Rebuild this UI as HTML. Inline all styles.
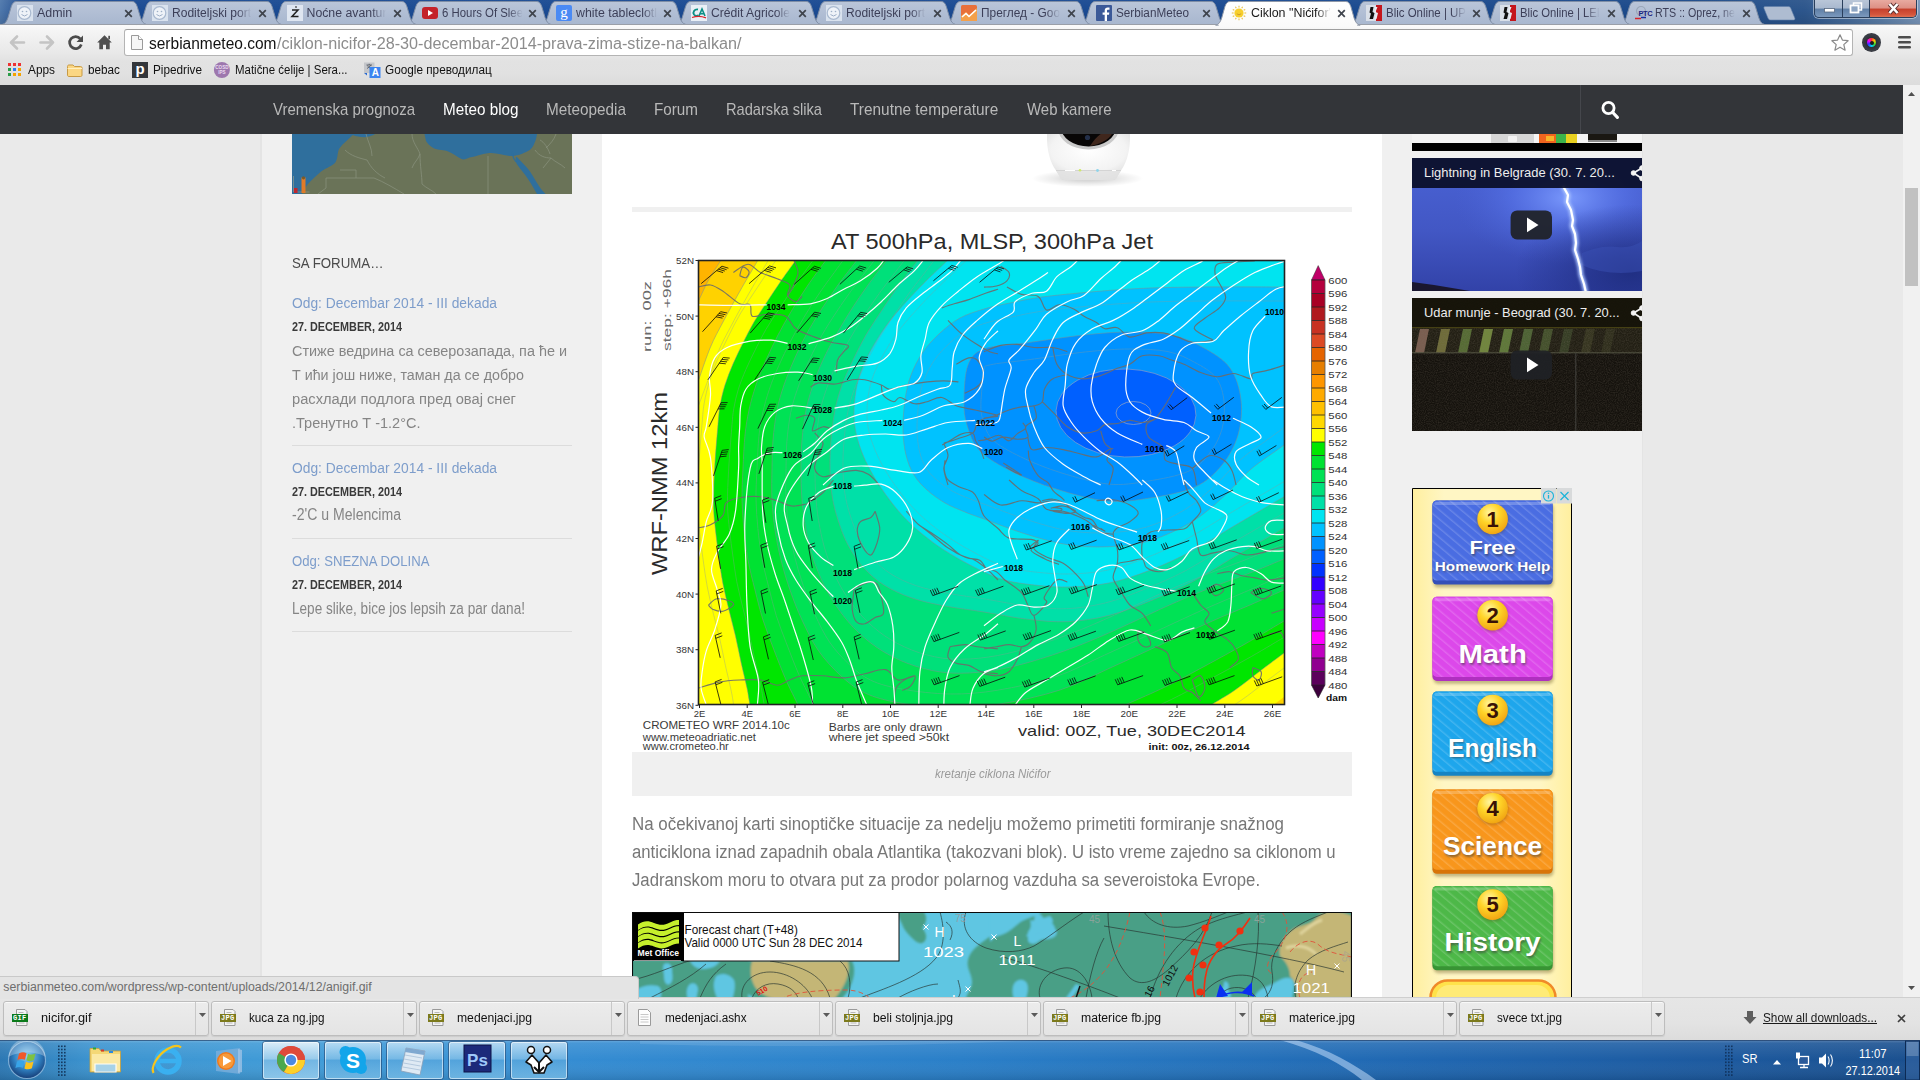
<!DOCTYPE html>
<html lang="sr"><head><meta charset="utf-8"><title>Ciklon "Nićifor" 28-30. decembar 2014 - prava zima stiže na Balkan</title><style>*{box-sizing:border-box}html,body{margin:0;padding:0}body{width:1920px;height:1080px;overflow:hidden;position:relative;background:#fff;font-family:"Liberation Sans", sans-serif;}div,svg{position:absolute}.t{position:absolute;white-space:nowrap;line-height:1;transform-origin:0 0;display:block}</style></head>
<body>
<div style="left:0px;top:85px;width:1903px;height:912px;background:#eaeaea;"></div>
<div style="left:260px;top:85px;width:2px;height:912px;background:#e4e4e4;"></div>
<div style="left:262px;top:85px;width:340px;height:912px;background:#f0f0f0;"></div>
<div style="left:602px;top:85px;width:780px;height:912px;background:#ffffff;"></div>
<div style="left:1382px;top:85px;width:260px;height:912px;background:#f0f0f0;"></div>
<div style="left:1642px;top:85px;width:261px;height:912px;background:#e9e9e9;"></div>
<div style="left:1642px;top:85px;width:1px;height:912px;background:#e4e4e4;"></div>
<div style="left:1903px;top:85px;width:17px;height:912px;background:#f1f1f1;"></div>
<div style="left:1905px;top:188px;width:13px;height:98px;background:#c1c1c1;"></div>
<svg style="left:1903px;top:85px" width="17" height="912" viewBox="0 0 17 912"><path d="M5 11l3.500-4 3.500 4z" fill="#505050"/><path d="M5 901l3.500 4 3.500-4z" fill="#505050"/></svg>
<svg style="left:292px;top:134px" width="280" height="60" viewBox="292 134 280 60"><rect x="292" y="134" width="280" height="60" fill="#6a7358"/><path d="M292 134h62c-5 5-11 9-15 15-2 5-1 10-4 14-4 4-10 5-14.500 9-4.500 4-9 8-12.500 12-2.500 3-4.500 6-6 10h-10z" fill="#2f6f9d"/><path d="M351 134h24c-3 2.500-9 3.500-14 3-4-.5-8-1.500-10-3z" fill="#2f6f9d"/><path d="M424.500 134h112.500c-.5 3-1 6-2.500 9-1.500 4-3.500 6.500-6.500 8-5 2.500-10 5-17.500 5-7-.5-14-3.500-21-3-7 .5-13 3.500-20 4.500-3 1.500-5.500 2.500-8 1.500-5-2.500-9-6-14.500-8-5-1.500-10-.5-14.500-3.500-3-2-5-4-6.500-6.500-.5-2.500-1-4.500-1.500-7z" fill="#2f6f9d"/><path d="M517 157c4 5 9 9 13 14.500 4 6 7 12 11 17.500l4.500 5h-8.500c-3-5-5.500-10-9-15-3.500-5.500-8-10-11.500-15.500-1-2.500-1-5-.5-6.500z" fill="#2f6f9d"/><path d="M512 152l1.500 6 2.500 4" fill="none" stroke="#2f6f9d" stroke-width="1.200"/><circle cx="319" cy="170" r=".9" fill="#2f6f9d"/><circle cx="323" cy="168.500" r=".8" fill="#2f6f9d"/><circle cx="327" cy="167" r=".8" fill="#2f6f9d"/><circle cx="315.500" cy="172" r=".8" fill="#2f6f9d"/><path d="M345 150c6 6 14 8 22 10 4 8 10 14 18 18M366 134c2 8 6 14 6 22M412 134c0 8 6 14 8 20 0 12 2 22 2 30 4 4 10 6 14 10M340 170h16v8h18M356 178l-30 0 0 10-8 6M374 178c10 4 20 10 30 16M488 156v38M420 154c-2 6-6 8-8 14M535 150c4 6 10 8 16 8 4 4 10 6 14 10M540 140c4 2 8 8 10 14M551 158l-8 10M556 134c-2 6-6 10-10 14" fill="none" stroke="#8b9480" stroke-width=".7"/><path d="M293.500 176v16h16" fill="none" stroke="#9aa08c" stroke-width=".6"/><rect x="294" y="188" width="3.500" height="5" fill="#c0272d"/><rect x="301.500" y="177.500" width="4" height="15.500" fill="#e07b28"/><circle cx="303.500" cy="177.800" r="1.600" fill="#7a5a28"/></svg>
<span class="t" style='left:292px;top:255.30px;font-size:15.3px;color:#4a4a4a;transform:scaleX(0.8682);'>SA FORUMA…</span>
<span class="t" style='left:292px;top:295.12px;font-size:15.5px;color:#7d9dcb;transform:scaleX(0.8911);'>Odg: Decembar 2014 - III dekada</span>
<span class="t" style='left:292px;top:320.88px;font-size:12.5px;color:#3a3a3a;font-weight:700;transform:scaleX(0.8652);'>27. DECEMBER, 2014</span>
<span class="t" style='left:292px;top:343.32px;font-size:15.5px;color:#858585;transform:scaleX(0.9299);'>Стиже ведрина са северозапада, па ће и</span>
<span class="t" style='left:292px;top:367.32px;font-size:15.5px;color:#858585;transform:scaleX(0.9215);'>Т ићи још ниже, таман да се добро</span>
<span class="t" style='left:292px;top:391.32px;font-size:15.5px;color:#858585;transform:scaleX(0.9471);'>расхлади подлога пред овај снег</span>
<span class="t" style='left:292px;top:415.32px;font-size:15.5px;color:#858585;transform:scaleX(0.9364);'>.Тренутно Т -1.2°C.</span>
<div style="left:292px;top:445px;width:280px;height:1px;background:#dcdcdc;"></div>
<span class="t" style='left:292px;top:460.12px;font-size:15.5px;color:#7d9dcb;transform:scaleX(0.8911);'>Odg: Decembar 2014 - III dekada</span>
<span class="t" style='left:292px;top:485.68px;font-size:12.5px;color:#3a3a3a;font-weight:700;transform:scaleX(0.8652);'>27. DECEMBER, 2014</span>
<span class="t" style='left:292px;top:507.27px;font-size:15.8px;color:#858585;transform:scaleX(0.8904);'>-2'C u Melencima</span>
<div style="left:292px;top:538px;width:280px;height:1px;background:#dcdcdc;"></div>
<span class="t" style='left:292px;top:553.33px;font-size:15.5px;color:#7d9dcb;transform:scaleX(0.8490);'>Odg: SNEZNA DOLINA</span>
<span class="t" style='left:292px;top:578.67px;font-size:12.5px;color:#3a3a3a;font-weight:700;transform:scaleX(0.8652);'>27. DECEMBER, 2014</span>
<span class="t" style='left:292px;top:600.87px;font-size:15.8px;color:#858585;transform:scaleX(0.8586);'>Lepe slike, bice jos lepsih za par dana!</span>
<div style="left:292px;top:631px;width:280px;height:1px;background:#dcdcdc;"></div>
<svg style="left:1020px;top:134px" width="140" height="60" viewBox="1020 134 140 60"><defs><radialGradient id="cs" cx=".5" cy=".5" r=".5"><stop offset="0" stop-color="#000" stop-opacity=".22"/><stop offset=".6" stop-color="#000" stop-opacity=".08"/><stop offset="1" stop-color="#000" stop-opacity="0"/></radialGradient><radialGradient id="cb" cx=".5" cy=".35" r=".7"><stop offset="0" stop-color="#ffffff"/><stop offset=".65" stop-color="#f3f3f3"/><stop offset="1" stop-color="#d9d9d9"/></radialGradient><clipPath id="cc"><rect x="1020" y="134" width="140" height="46.300"/></clipPath></defs><ellipse cx="1087.500" cy="178.500" rx="56" ry="8.500" fill="url(#cs)"/><g clip-path="url(#cc)"><path d="M1047 134C1046.500 150 1050 162 1056 170.500L1061 178.500Q1062 180.300 1065 180.300H1112Q1115 180.300 1116 178.500L1121 170.500C1127 162 1130.500 150 1130 134Z" fill="url(#cb)"/><path d="M1056 170.500L1061 178.500Q1062 180.300 1065 180.300H1112Q1115 180.300 1116 178.500L1121 170.500Z" fill="#e2e2e2" opacity=".8"/><path d="M1056 170.500h65" stroke="#d4d4d4" stroke-width="1"/><path d="M1065 170.500h10M1112 170.500h4" stroke="#fff" stroke-width="1"/><ellipse cx="1088.500" cy="128" rx="30.500" ry="21.500" fill="#c9c9c9"/><ellipse cx="1088.500" cy="127" rx="27.500" ry="19.500" fill="#080606"/><path d="M1090 146c4-6 8-11 14-14l9 0c-3 7-12 12-23 14z" fill="#4a2e22" opacity=".85"/><circle cx="1087.500" cy="137.500" r="2.600" fill="#2a3a5a" opacity=".8"/></g><circle cx="1080" cy="170.300" r="1.300" fill="#cfe86a"/><circle cx="1097.500" cy="170.500" r="1.400" fill="#8fd4ea"/></svg>
<div style="left:632px;top:207px;width:720px;height:5px;background:#f0f0f0;"></div>
<svg style="left:632px;top:224px" width="720" height="528" viewBox="632 224 720 528" font-family="'Liberation Sans',sans-serif"><rect x="632" y="224" width="720" height="528" fill="#fff"/><defs><clipPath id="pc"><rect x="698.500" y="260.500" width="586" height="444"/></clipPath><filter id="fb" filterUnits="userSpaceOnUse" x="630" y="200" width="730" height="570"><feGaussianBlur stdDeviation=".7"/></filter></defs><g clip-path="url(#pc)"><g filter="url(#fb)"><rect x="630" y="200" width="730" height="570" fill="#00e600"/><path d="M861.1 211.3C855.2 219.4 834.8 247.7 826 260C817.2 272.3 813.7 276.7 808 285C802.3 293.3 797 301.7 792 310C787 318.3 782.3 326.7 778 335C773.7 343.3 769.7 351.7 766 360C762.3 368.3 758.8 376.7 756 385C753.2 393.3 750.8 401.7 749 410C747.2 418.3 746 425.3 745 435C744 444.7 743.5 457.2 743 468C742.5 478.8 741.8 489.7 742 500C742.2 510.3 743 520 744 530C745 540 746.2 550 748 560C749.8 570 752.5 580 755 590C757.5 600 759.8 610 763 620C766.2 630 770.2 640 774 650C777.8 660 782 670.8 786 680C790 689.2 791.7 691.8 798 705C804.3 718.2 819.6 750.1 824 759.1L824 824.5L1070.3 824.5L1070.3 729.6C1079.4 725.5 1109.2 712.1 1125 705C1140.8 697.9 1151.7 693.5 1165 687C1178.3 680.5 1191.7 673.2 1205 666C1218.3 658.8 1231.8 651.5 1245 644C1258.2 636.5 1268.9 629.9 1284 621C1299.1 612.1 1327.1 595.6 1335.7 590.5L1404.5 590.5L1404.5 140.5Z" fill="#00e232"/><path d="M893.3 212.2C887.3 220.2 866.2 247.9 857 260C847.8 272.1 844 276.7 838 285C832 293.3 826.3 301.7 821 310C815.7 318.3 810.5 326.7 806 335C801.5 343.3 797.7 351.7 794 360C790.3 368.3 786.8 376.7 784 385C781.2 393.3 778.8 400.8 777 410C775.2 419.2 773.8 430.3 773 440C772.2 449.7 772.2 458 772 468C771.8 478 771.5 489.7 772 500C772.5 510.3 773.5 520 775 530C776.5 540 778.5 550 781 560C783.5 570 786.5 580 790 590C793.5 600 797.3 610 802 620C806.7 630 811.7 640.8 818 650C824.3 659.2 832.2 667.8 840 675C847.8 682.2 855 688.3 865 693C875 697.7 885.8 700.5 900 703C914.2 705.5 933.3 707.8 950 708C966.7 708.2 981.7 707 1000 704C1018.3 701 1041.7 696 1060 690C1078.3 684 1093.3 675.5 1110 668C1126.7 660.5 1143.3 652.7 1160 645C1176.7 637.3 1195 628.7 1210 622C1225 615.3 1237.7 610.3 1250 605C1262.3 599.7 1269.2 596.5 1284 590C1298.8 583.5 1329.7 569.8 1338.9 565.8L1404.5 565.8L1404.5 140.5Z" fill="#00e254"/><path d="M923.3 212.2C917.3 220.2 896.2 247.9 887 260C877.8 272.1 874 276.7 868 285C862 293.3 856.3 301.7 851 310C845.7 318.3 840.7 326.7 836 335C831.3 343.3 826.8 351.7 823 360C819.2 368.3 815.8 376.7 813 385C810.2 393.3 807.8 400.8 806 410C804.2 419.2 802.8 430.3 802 440C801.2 449.7 801 458 801 468C801 478 801.2 489.7 802 500C802.8 510.3 804.2 520.3 806 530C807.8 539.7 810 548.8 813 558C816 567.2 819.7 576.3 824 585C828.3 593.7 833.2 602 839 610C844.8 618 851.5 626 859 633C866.5 640 874.7 646.5 884 652C893.3 657.5 904 662.5 915 666C926 669.5 937.5 672.2 950 673C962.5 673.8 976.7 672.8 990 671C1003.3 669.2 1015.8 666 1030 662C1044.2 658 1060 652.7 1075 647C1090 641.3 1105 634.7 1120 628C1135 621.3 1150 613.7 1165 607C1180 600.3 1195.8 593.7 1210 588C1224.2 582.3 1237.7 577.8 1250 573C1262.3 568.2 1269.1 565.1 1284 559C1298.9 552.9 1330.2 540 1339.5 536.2L1404.5 536.2L1404.5 140.5Z" fill="#00e07a"/><path d="M954.3 212.2C948.3 220.2 927.2 247.9 918 260C908.8 272.1 905 276.7 899 285C893 293.3 887.5 301.7 882 310C876.5 318.3 870.8 326.7 866 335C861.2 343.3 857 351.7 853 360C849 368.3 845 376.7 842 385C839 393.3 836.8 400.8 835 410C833.2 419.2 831.8 430.3 831 440C830.2 449.7 829.8 458.8 830 468C830.2 477.2 830.7 486.3 832 495C833.3 503.7 835.3 511.7 838 520C840.7 528.3 843.8 537.2 848 545C852.2 552.8 857 560.3 863 567C869 573.7 875.8 579.8 884 585C892.2 590.2 901.8 594.5 912 598C922.2 601.5 933 603.7 945 606C957 608.3 970.5 609.8 984 612C997.5 614.2 1011.9 617.4 1025.7 619C1039.5 620.6 1053.1 622.3 1067 621.7C1080.9 621.1 1095 618.9 1109 615.4C1123 611.9 1136.9 606.4 1150.7 600.8C1164.5 595.2 1178.1 589.3 1192 582C1205.9 574.7 1218.7 566 1234 557C1249.3 548 1267 537.9 1284 528C1301 518.1 1327.3 502.9 1335.9 497.9L1404.5 497.9L1404.5 140.5Z" fill="#00e0a8"/><path d="M991.4 218.6C984.2 225.5 958.9 249.6 948 260C937.1 270.4 933 274 926 281C919 288 912.2 295.2 906 302C899.8 308.8 894.2 315.2 889 322C883.8 328.8 879.2 336 875 343C870.8 350 867 357 864 364C861 371 858.7 377.3 857 385C855.3 392.7 854.2 402 854 410C853.8 418 854.5 425.5 856 433C857.5 440.5 860.2 448 863 455C865.8 462 869.2 468.3 873 475C876.8 481.7 881.2 488.3 886 495C890.8 501.7 896.2 508.7 902 515C907.8 521.3 914 527.2 921 533C928 538.8 935.8 544.7 944 550C952.2 555.3 961 560.3 970 565C979 569.7 988.7 574.8 998 578C1007.3 581.2 1014.2 582.5 1025.7 584C1037.2 585.5 1053.1 587.2 1067 587C1080.9 586.8 1095 585.8 1109 583C1123 580.2 1136.9 575.3 1150.7 570C1164.5 564.7 1178.1 558.3 1192 551C1205.9 543.7 1218.7 535 1234 526C1249.3 517 1267 506.6 1284 496.7C1301 486.8 1327.1 471.4 1335.8 466.4L1404.5 466.4L1404.5 140.5Z" fill="#00e4f0"/><path d="M1344 287C1334 287 1308 287 1284 287C1260 287 1225.7 286.7 1200 287C1174.3 287.3 1155 287.5 1130 289C1105 290.5 1070 293.7 1050 296C1030 298.3 1021 300.8 1010 303C999 305.2 992.3 306.5 984 309C975.7 311.5 967.3 314 960 318C952.7 322 946.2 327.3 940 333C933.8 338.7 927.8 345 923 352C918.2 359 914 367 911 375C908 383 906.3 390.8 905 400C903.7 409.2 902.8 420.8 903 430C903.2 439.2 904.2 447.5 906 455C907.8 462.5 910.5 469.2 914 475C917.5 480.8 921.8 485.3 927 490C932.2 494.7 938.7 499.3 945 503C951.3 506.7 958.5 509.3 965 512C971.5 514.7 973.9 515.3 984 519C994.1 522.7 1011.9 529.7 1025.7 534C1039.5 538.3 1053.1 542.5 1067 544.6C1080.9 546.7 1095 547.4 1109 546.7C1123 546 1136.9 544.6 1150.7 540.4C1164.5 536.2 1179.8 529 1192 521.7C1204.2 514.4 1213.9 505.3 1223.6 496.7C1233.3 488.1 1239.9 478.6 1250 470C1260.1 461.4 1270.3 455.1 1284 445C1297.7 434.9 1324.3 415.4 1332.3 409.5Z" fill="#00c2ff"/><path d="M964 400C964.2 390 964.7 373.5 968 365C971.3 356.5 974.4 352.7 984 349C993.6 345.3 1009 345.3 1025.7 343C1042.4 340.7 1066.6 336.8 1084 335C1101.4 333.2 1115.4 332 1130 332C1144.6 332 1159.3 332.4 1171.5 335C1183.7 337.6 1193.2 342 1203 347.5C1212.8 353 1223.7 359.2 1230 368C1236.3 376.8 1239.7 388.8 1241 400C1242.3 411.2 1241.2 424.2 1238 435C1234.8 445.8 1229.2 456.3 1222 465C1214.8 473.7 1207 481.5 1195 487C1183 492.5 1164.7 495.7 1150 498C1135.3 500.3 1122.7 502.5 1107 501C1091.3 499.5 1071.7 493.8 1056 489C1040.3 484.2 1025.7 478.3 1013 472C1000.3 465.7 987.7 458.8 980 451C972.3 443.2 969.7 433.5 967 425C964.3 416.5 963.8 410 964 400Z" fill="#0092ff"/><ellipse cx="1126" cy="413" rx="70" ry="44" fill="#0060ff" transform="rotate(2 1126 413)"/></g><path d="M830.9 211.2C825.1 219.3 804.3 248.4 796 260C787.7 271.6 785.8 274 781 281C776.2 288 771.5 295.2 767 302C762.5 308.8 758 315.2 754 322C750 328.8 746.5 336 743 343C739.5 350 736 357 733 364C730 371 727.2 378 725 385C722.8 392 721.2 399 720 406C718.8 413 718.7 416.7 717.8 427C716.9 437.3 715.4 455 714.7 468C714 481 713.3 494.3 713.5 505C713.7 515.7 714.8 523.2 715.7 532C716.6 540.8 717.8 549.3 719 558C720.2 566.7 721.3 575.3 723 584C724.7 592.7 726.9 601.3 729 610C731.1 618.7 733.5 627.3 735.5 636C737.5 644.7 739.1 653.3 741 662C742.9 670.7 745.5 680.8 747 688C748.5 695.2 747.8 692.3 750 705C752.2 717.7 758.7 754.2 760.4 764.1L760.4 824.5L578.5 824.5L578.5 140.5Z" fill="#ffff00"/><path d="M1160.1 736.8C1168.6 731.5 1198.5 712.8 1211 705C1223.5 697.2 1226.8 695.7 1235 690C1243.2 684.3 1251.8 677.2 1260 671C1268.2 664.8 1272 662 1284 653C1296 644 1324 623 1332 617L1404.5 824.5L1160.1 824.5Z" fill="#ffff00"/><path d="M788.1 208.1C783.1 216.8 766 246.2 758 260C750 273.8 745.8 280.7 740 291C734.2 301.3 727.9 312.7 723 322C718.1 331.3 714.3 338 710.5 347C706.7 356 702.2 369.8 700 376C697.8 382.2 701 373.3 697 384C693 394.7 679.4 430.8 675.9 440.2L578.5 140.5Z" fill="#ffd200"/><path d="M752.6 209C747.3 217.5 728.4 248 721 260C713.6 272 711.8 274 708 281C704.2 288 704 289.5 698 302C692 314.5 676.5 347.1 672.2 356.2L578.5 140.5Z" fill="#ffb400"/><path d="M1272 706L1286 695.500V706z" fill="#ffd200"/><path d="M830.9 211.2C825.1 219.3 804.3 248.4 796 260C787.7 271.6 785.8 274 781 281C776.2 288 771.5 295.2 767 302C762.5 308.8 758 315.2 754 322C750 328.8 746.5 336 743 343C739.5 350 736 357 733 364C730 371 727.2 378 725 385C722.8 392 721.2 399 720 406C718.8 413 718.7 416.7 717.8 427C716.9 437.3 715.4 455 714.7 468C714 481 713.3 494.3 713.5 505C713.7 515.7 714.8 523.2 715.7 532C716.6 540.8 717.8 549.3 719 558C720.2 566.7 721.3 575.3 723 584C724.7 592.7 726.9 601.3 729 610C731.1 618.7 733.5 627.3 735.5 636C737.5 644.7 739.1 653.3 741 662C742.9 670.7 745.5 680.8 747 688C748.5 695.2 747.8 692.3 750 705C752.2 717.7 758.7 754.2 760.4 764.1M1160.1 736.8C1168.6 731.5 1198.5 712.8 1211 705C1223.5 697.2 1226.8 695.7 1235 690C1243.2 684.3 1251.8 677.2 1260 671C1268.2 664.8 1272 662 1284 653C1296 644 1324 623 1332 617M788.1 208.1C783.1 216.8 766 246.2 758 260C750 273.8 745.8 280.7 740 291C734.2 301.3 727.9 312.7 723 322C718.1 331.3 714.3 338 710.5 347C706.7 356 702.2 369.8 700 376C697.8 382.2 701 373.3 697 384C693 394.7 679.4 430.8 675.9 440.2M752.6 209C747.3 217.5 728.4 248 721 260C713.6 272 711.8 274 708 281C704.2 288 704 289.5 698 302C692 314.5 676.5 347.1 672.2 356.2M861.1 211.3C855.2 219.4 834.8 247.7 826 260C817.2 272.3 813.7 276.7 808 285C802.3 293.3 797 301.7 792 310C787 318.3 782.3 326.7 778 335C773.7 343.3 769.7 351.7 766 360C762.3 368.3 758.8 376.7 756 385C753.2 393.3 750.8 401.7 749 410C747.2 418.3 746 425.3 745 435C744 444.7 743.5 457.2 743 468C742.5 478.8 741.8 489.7 742 500C742.2 510.3 743 520 744 530C745 540 746.2 550 748 560C749.8 570 752.5 580 755 590C757.5 600 759.8 610 763 620C766.2 630 770.2 640 774 650C777.8 660 782 670.8 786 680C790 689.2 791.7 691.8 798 705C804.3 718.2 819.6 750.1 824 759.1M1070.3 729.6C1079.4 725.5 1109.2 712.1 1125 705C1140.8 697.9 1151.7 693.5 1165 687C1178.3 680.5 1191.7 673.2 1205 666C1218.3 658.8 1231.8 651.5 1245 644C1258.2 636.5 1268.9 629.9 1284 621C1299.1 612.1 1327.1 595.6 1335.7 590.5M893.3 212.2C887.3 220.2 866.2 247.9 857 260C847.8 272.1 844 276.7 838 285C832 293.3 826.3 301.7 821 310C815.7 318.3 810.5 326.7 806 335C801.5 343.3 797.7 351.7 794 360C790.3 368.3 786.8 376.7 784 385C781.2 393.3 778.8 400.8 777 410C775.2 419.2 773.8 430.3 773 440C772.2 449.7 772.2 458 772 468C771.8 478 771.5 489.7 772 500C772.5 510.3 773.5 520 775 530C776.5 540 778.5 550 781 560C783.5 570 786.5 580 790 590C793.5 600 797.3 610 802 620C806.7 630 811.7 640.8 818 650C824.3 659.2 832.2 667.8 840 675C847.8 682.2 855 688.3 865 693C875 697.7 885.8 700.5 900 703C914.2 705.5 933.3 707.8 950 708C966.7 708.2 981.7 707 1000 704C1018.3 701 1041.7 696 1060 690C1078.3 684 1093.3 675.5 1110 668C1126.7 660.5 1143.3 652.7 1160 645C1176.7 637.3 1195 628.7 1210 622C1225 615.3 1237.7 610.3 1250 605C1262.3 599.7 1269.2 596.5 1284 590C1298.8 583.5 1329.7 569.8 1338.9 565.8M923.3 212.2C917.3 220.2 896.2 247.9 887 260C877.8 272.1 874 276.7 868 285C862 293.3 856.3 301.7 851 310C845.7 318.3 840.7 326.7 836 335C831.3 343.3 826.8 351.7 823 360C819.2 368.3 815.8 376.7 813 385C810.2 393.3 807.8 400.8 806 410C804.2 419.2 802.8 430.3 802 440C801.2 449.7 801 458 801 468C801 478 801.2 489.7 802 500C802.8 510.3 804.2 520.3 806 530C807.8 539.7 810 548.8 813 558C816 567.2 819.7 576.3 824 585C828.3 593.7 833.2 602 839 610C844.8 618 851.5 626 859 633C866.5 640 874.7 646.5 884 652C893.3 657.5 904 662.5 915 666C926 669.5 937.5 672.2 950 673C962.5 673.8 976.7 672.8 990 671C1003.3 669.2 1015.8 666 1030 662C1044.2 658 1060 652.7 1075 647C1090 641.3 1105 634.7 1120 628C1135 621.3 1150 613.7 1165 607C1180 600.3 1195.8 593.7 1210 588C1224.2 582.3 1237.7 577.8 1250 573C1262.3 568.2 1269.1 565.1 1284 559C1298.9 552.9 1330.2 540 1339.5 536.2M954.3 212.2C948.3 220.2 927.2 247.9 918 260C908.8 272.1 905 276.7 899 285C893 293.3 887.5 301.7 882 310C876.5 318.3 870.8 326.7 866 335C861.2 343.3 857 351.7 853 360C849 368.3 845 376.7 842 385C839 393.3 836.8 400.8 835 410C833.2 419.2 831.8 430.3 831 440C830.2 449.7 829.8 458.8 830 468C830.2 477.2 830.7 486.3 832 495C833.3 503.7 835.3 511.7 838 520C840.7 528.3 843.8 537.2 848 545C852.2 552.8 857 560.3 863 567C869 573.7 875.8 579.8 884 585C892.2 590.2 901.8 594.5 912 598C922.2 601.5 933 603.7 945 606C957 608.3 970.5 609.8 984 612C997.5 614.2 1011.9 617.4 1025.7 619C1039.5 620.6 1053.1 622.3 1067 621.7C1080.9 621.1 1095 618.9 1109 615.4C1123 611.9 1136.9 606.4 1150.7 600.8C1164.5 595.2 1178.1 589.3 1192 582C1205.9 574.7 1218.7 566 1234 557C1249.3 548 1267 537.9 1284 528C1301 518.1 1327.3 502.9 1335.9 497.9M991.4 218.6C984.2 225.5 958.9 249.6 948 260C937.1 270.4 933 274 926 281C919 288 912.2 295.2 906 302C899.8 308.8 894.2 315.2 889 322C883.8 328.8 879.2 336 875 343C870.8 350 867 357 864 364C861 371 858.7 377.3 857 385C855.3 392.7 854.2 402 854 410C853.8 418 854.5 425.5 856 433C857.5 440.5 860.2 448 863 455C865.8 462 869.2 468.3 873 475C876.8 481.7 881.2 488.3 886 495C890.8 501.7 896.2 508.7 902 515C907.8 521.3 914 527.2 921 533C928 538.8 935.8 544.7 944 550C952.2 555.3 961 560.3 970 565C979 569.7 988.7 574.8 998 578C1007.3 581.2 1014.2 582.5 1025.7 584C1037.2 585.5 1053.1 587.2 1067 587C1080.9 586.8 1095 585.8 1109 583C1123 580.2 1136.9 575.3 1150.7 570C1164.5 564.7 1178.1 558.3 1192 551C1205.9 543.7 1218.7 535 1234 526C1249.3 517 1267 506.6 1284 496.7C1301 486.8 1327.1 471.4 1335.8 466.4M1344 287C1334 287 1308 287 1284 287C1260 287 1225.7 286.7 1200 287C1174.3 287.3 1155 287.5 1130 289C1105 290.5 1070 293.7 1050 296C1030 298.3 1021 300.8 1010 303C999 305.2 992.3 306.5 984 309C975.7 311.5 967.3 314 960 318C952.7 322 946.2 327.3 940 333C933.8 338.7 927.8 345 923 352C918.2 359 914 367 911 375C908 383 906.3 390.8 905 400C903.7 409.2 902.8 420.8 903 430C903.2 439.2 904.2 447.5 906 455C907.8 462.5 910.5 469.2 914 475C917.5 480.8 921.8 485.3 927 490C932.2 494.7 938.7 499.3 945 503C951.3 506.7 958.5 509.3 965 512C971.5 514.7 973.9 515.3 984 519C994.1 522.7 1011.9 529.7 1025.7 534C1039.5 538.3 1053.1 542.5 1067 544.6C1080.9 546.7 1095 547.4 1109 546.7C1123 546 1136.9 544.6 1150.7 540.4C1164.5 536.2 1179.8 529 1192 521.7C1204.2 514.4 1213.9 505.3 1223.6 496.7C1233.3 488.1 1239.9 478.6 1250 470C1260.1 461.4 1270.3 455.1 1284 445C1297.7 434.9 1324.3 415.4 1332.3 409.5M964 400C964.2 390 964.7 373.5 968 365C971.3 356.5 974.4 352.7 984 349C993.6 345.3 1009 345.3 1025.7 343C1042.4 340.7 1066.6 336.8 1084 335C1101.4 333.2 1115.4 332 1130 332C1144.6 332 1159.3 332.4 1171.5 335C1183.7 337.6 1193.2 342 1203 347.5C1212.8 353 1223.7 359.2 1230 368C1236.3 376.8 1239.7 388.8 1241 400C1242.3 411.2 1241.2 424.2 1238 435C1234.8 445.8 1229.2 456.3 1222 465C1214.8 473.7 1207 481.5 1195 487C1183 492.5 1164.7 495.7 1150 498C1135.3 500.3 1122.7 502.5 1107 501C1091.3 499.5 1071.7 493.8 1056 489C1040.3 484.2 1025.7 478.3 1013 472C1000.3 465.7 987.7 458.8 980 451C972.3 443.2 969.7 433.5 967 425C964.3 416.5 963.8 410 964 400Z" fill="none" stroke="#7f8f8f" stroke-width=".7" opacity=".75"/><path d="M795.9 212.6C790.9 221.3 773.8 250.7 765.8 264.5C757.8 278.3 753.6 285.1 747.8 295.4C742 305.7 735.8 317 731 326.2C726.1 335.4 722.5 341.7 718.8 350.5C715 359.3 710.7 373 708.5 379.1C706.2 385.2 709.4 376.5 705.4 387.2C701.4 397.9 687.9 434 684.4 443.3M842.3 219.3C836.5 227.5 815.7 256.5 807.4 268.1C799.1 279.7 797.3 282 792.5 289C787.7 295.9 783.1 303 778.7 309.7C774.3 316.4 769.9 322.5 766.1 329.1C762.2 335.7 758.9 342.5 755.5 349.3C752.2 356 748.7 362.9 745.9 369.5C743 376.2 740.4 382.7 738.4 389.1C736.4 395.6 734.9 401.9 733.8 408.4C732.7 414.9 732.6 418.1 731.7 428.2C730.9 438.3 729.4 456 728.7 468.8C728 481.5 727.3 494.5 727.5 504.8C727.7 515.1 728.7 522 729.6 530.6C730.5 539.1 731.7 547.6 732.9 556.1C734.1 564.5 735.1 572.9 736.7 581.4C738.4 589.8 740.5 598.1 742.6 606.7C744.7 615.3 747.1 624.1 749.1 632.9C751.2 641.6 752.7 650.3 754.7 659C756.6 667.7 759.2 677.9 760.7 685.1C762.2 692.4 761.5 689.8 763.8 702.6C766 715.3 772.5 751.8 774.2 761.6M872.4 219.5C866.6 227.6 846.2 256 837.4 268.2C828.6 280.4 825.1 284.7 819.6 292.9C814 301 808.9 309.1 804 317.2C799.1 325.3 794.6 333.4 790.4 341.5C786.2 349.5 782.3 357.6 778.8 365.6C775.3 373.6 771.9 381.6 769.3 389.5C766.6 397.4 764.4 405.2 762.7 413C761 420.8 759.9 427.2 758.9 436.4C758 445.7 757.5 458.1 757 468.6C756.5 479.2 755.8 489.8 756 499.8C756.2 509.8 757 519 757.9 528.6C758.9 538.2 760 547.8 761.8 557.5C763.5 567.1 766.2 576.9 768.6 586.6C771 596.3 773.3 606 776.3 615.8C779.4 625.5 783.3 635.2 787.1 645C790.8 654.8 794.9 665.4 798.8 674.4C802.8 683.4 804.3 685.8 810.6 698.9C816.9 712 832.3 744 836.6 753M904.5 220.7C898.4 228.7 877.3 256.4 868.1 268.5C859 280.6 855.3 285 849.4 293.2C843.5 301.4 838 309.5 832.8 317.5C827.6 325.6 822.6 333.6 818.3 341.7C814 349.7 810.3 357.7 806.8 365.6C803.3 373.6 799.9 381.7 797.3 389.5C794.6 397.4 792.4 404.1 790.7 412.7C789 421.4 787.7 432 786.9 441.2C786.2 450.5 786.2 458.5 786 468.2C785.8 477.9 785.5 489.4 786 499.3C786.5 509.3 787.4 518.4 788.8 527.9C790.3 537.5 792.2 547 794.6 556.6C797 566.2 799.9 575.8 803.2 585.4C806.6 595 810.3 604.6 814.7 614.1C819.1 623.5 823.7 633.6 829.5 642C835.3 650.5 842.5 658.3 849.5 664.7C856.4 671 862.1 676.2 870.9 680.3C879.8 684.4 889.2 686.9 902.4 689.2C915.6 691.5 934.3 693.8 950.1 694C966 694.2 980.2 693.1 997.7 690.2C1015.3 687.3 1037.9 682.5 1055.6 676.7C1073.4 670.9 1087.8 662.6 1104.3 655.2C1120.7 647.8 1137.5 640 1154.1 632.3C1170.8 624.6 1189.3 615.9 1204.3 609.2C1219.4 602.5 1232.1 597.5 1244.4 592.2C1256.8 586.8 1263.5 583.7 1278.3 577.2C1293.1 570.7 1324.1 557 1333.2 553M934.5 220.7C928.4 228.7 907.3 256.4 898.1 268.5C889 280.6 885.3 285 879.4 293.2C873.5 301.4 868 309.4 862.8 317.5C857.6 325.7 852.7 333.8 848.2 341.8C843.7 349.9 839.4 357.9 835.7 365.9C832.1 373.8 828.9 381.7 826.3 389.5C823.6 397.3 821.4 404.1 819.7 412.7C818 421.4 816.7 432 815.9 441.2C815.2 450.4 815 458.4 815 468C815 477.6 815.2 489 816 498.9C816.7 508.8 818 518.3 819.8 527.4C821.5 536.5 823.5 545.1 826.3 553.6C829.1 562.2 832.5 570.7 836.5 578.7C840.5 586.8 845 594.4 850.3 601.8C855.7 609.1 861.8 616.4 868.6 622.8C875.4 629.1 882.7 635 891.1 639.9C899.6 644.9 909.3 649.5 919.2 652.7C929.2 655.8 939.5 658.3 950.9 659C962.4 659.8 975.5 658.9 988.1 657.1C1000.6 655.4 1012.5 652.4 1026.2 648.5C1039.9 644.7 1055.4 639.5 1070.1 633.9C1084.7 628.4 1099.4 621.8 1114.3 615.2C1129.2 608.6 1144.2 600.9 1159.3 594.2C1174.4 587.5 1190.5 580.7 1204.8 575C1219.1 569.3 1232.6 564.8 1244.9 560C1257.2 555.1 1263.8 552.2 1278.7 546.1C1293.5 539.9 1324.9 527 1334.1 523.2M964.7 220.1C958.6 228.1 937.5 255.8 928.4 267.9C919.2 279.9 915.5 284.4 909.5 292.6C903.6 300.8 898.2 309 892.8 317.2C887.5 325.3 881.9 333.4 877.2 341.5C872.6 349.6 868.6 357.6 864.7 365.6C860.9 373.6 857.1 381.6 854.2 389.4C851.4 397.2 849.5 403.9 847.7 412.5C846 421.2 844.7 431.9 844 441.1C843.2 450.3 842.8 459.1 843 467.8C843.1 476.4 843.6 485 844.8 493C846.1 501.1 847.9 508.4 850.4 516C852.8 523.7 855.8 531.9 859.5 538.9C863.2 545.9 867.4 552.5 872.7 558.3C877.9 564.2 883.7 569.4 891 574C898.2 578.6 906.8 582.5 916.2 585.7C925.7 588.9 935.8 591 947.5 593.2C959.1 595.5 972.8 597 986.1 599.2C999.4 601.3 1013.8 604.5 1027.2 606.1C1040.6 607.7 1053.3 609.3 1066.4 608.7C1079.5 608.2 1092.6 606.1 1105.9 602.8C1119.1 599.5 1132.5 594.1 1145.8 588.7C1159.2 583.4 1172.4 577.7 1185.9 570.5C1199.5 563.3 1212.2 554.7 1227.4 545.8C1242.7 536.8 1260.5 526.6 1277.5 516.8C1294.5 506.9 1320.7 491.7 1329.4 486.7M1000.4 228C993.1 234.9 967.8 259 957 269.4C946.1 279.8 942.1 283.3 935.2 290.2C928.3 297.1 921.6 304.1 915.7 310.7C909.7 317.3 904.3 323.4 899.4 329.8C894.5 336.3 890.1 343.1 886.2 349.6C882.3 356.2 878.7 362.8 875.9 369.1C873.2 375.5 871.2 380.9 869.7 387.8C868.2 394.6 867.2 403.2 867 410.3C866.8 417.4 867.4 423.8 868.7 430.5C870.1 437.1 872.5 443.8 875.1 450.1C877.6 456.5 880.7 462.3 884.3 468.5C887.8 474.7 892 481.1 896.5 487.4C901.1 493.6 906.1 500.3 911.6 506.2C917 512.1 922.7 517.5 929.3 523C935.9 528.5 943.3 534 951.1 539.1C958.9 544.2 967.5 549 976 553.5C984.5 557.9 993.6 562.8 1002.2 565.7C1010.8 568.6 1016.6 569.7 1027.4 571.1C1038.2 572.5 1053.7 574.1 1066.8 574C1080 573.9 1093.2 572.9 1106.4 570.3C1119.6 567.6 1132.8 563 1146 557.9C1159.3 552.7 1172.4 546.7 1185.9 539.5C1199.5 532.3 1212.1 523.8 1227.4 514.8C1242.6 505.8 1260.5 495.4 1277.4 485.5C1294.4 475.5 1320.6 460.2 1329.2 455.1M1344 301C1334 301 1308 301 1284 301C1260 301 1225.7 300.7 1200.2 301C1174.7 301.3 1155.6 301.5 1130.8 303C1106.1 304.5 1071.3 307.6 1051.6 309.9C1031.9 312.2 1023.3 314.7 1012.7 316.7C1002.1 318.8 995.7 320.2 988 322.4C980.4 324.7 973.1 326.8 966.7 330.3C960.3 333.8 954.8 338.4 949.5 343.3C944.1 348.3 938.7 353.9 934.5 360C930.3 366.1 926.7 372.9 924.1 379.9C921.5 386.9 920 393.7 918.9 402C917.7 410.3 916.9 421.5 917 429.7C917.1 438 918.1 445.3 919.6 451.7C921.1 458 923.2 463.1 926 467.8C928.8 472.5 932 475.8 936.4 479.6C940.7 483.5 946.4 487.6 952 490.9C957.7 494.1 964.2 496.6 970.3 499C976.4 501.5 978.9 502.2 988.8 505.8C998.7 509.4 1016.4 516.5 1029.8 520.6C1043.2 524.8 1056 528.7 1069.1 530.8C1082.2 532.8 1095.4 533.3 1108.3 532.7C1121.2 532.1 1133.9 530.8 1146.7 527C1159.4 523.2 1173.5 516.5 1184.8 509.7C1196.1 502.9 1204.9 494.6 1214.3 486.2C1223.6 477.9 1230.7 468.1 1240.9 459.4C1251.1 450.6 1261.9 443.9 1275.7 433.7C1289.6 423.5 1316 404.1 1324 398.1M1166.5 747C1175 741.7 1204.8 723 1217.4 715.2C1229.9 707.3 1233.5 705.6 1241.8 699.9C1250.2 694.1 1259 686.8 1267.2 680.6C1275.5 674.4 1279.2 671.6 1291.2 662.6C1303.2 653.6 1331.2 632.6 1339.2 626.6M1076 742.4C1085.2 738.3 1114.9 724.9 1130.7 717.8C1146.6 710.6 1157.7 706.2 1171.1 699.6C1184.6 693 1198.2 685.6 1211.6 678.3C1225.1 671.1 1238.7 663.7 1251.9 656.2C1265.2 648.6 1276 642 1291.1 633.1C1306.3 624.1 1334.2 607.7 1342.8 602.6M817.9 201.9C812 210 791.3 239 783 250.7C774.6 262.4 772.7 264.8 767.8 271.9C762.9 279 758.2 286.2 753.6 293.2C749 300.2 744.3 306.8 740.2 313.9C736 321 732.3 328.5 728.7 335.8C725 343.1 721.5 350.3 718.3 357.7C715.1 365.1 712.1 372.7 709.7 380.3C707.4 387.9 705.5 395.7 704.2 403.3C702.9 410.9 702.8 415 701.9 425.6C700.9 436.3 699.5 453.9 698.7 467.1C698 480.4 697.3 494.2 697.5 505.2C697.7 516.3 698.8 524.5 699.8 533.7C700.7 542.8 701.9 551.3 703.2 560.2C704.4 569.1 705.6 578.1 707.3 587C709 595.9 711.3 605 713.4 613.7C715.5 622.5 717.9 631 719.9 639.6C721.9 648.2 723.5 656.8 725.4 665.5C727.3 674.1 729.9 684.2 731.3 691.3C732.8 698.3 732 695.2 734.2 707.8C736.5 720.4 742.9 757 744.6 766.9M980.9 401.9C981.4 396.8 982.3 377.4 983.8 371.2C985.4 365 982.7 366.8 990.1 364.9C997.4 363 1012.1 362 1028.1 359.8C1044 357.7 1068.8 353.7 1085.8 351.9C1102.8 350.1 1116.3 349 1130 349C1143.7 349 1157.2 349.4 1168 351.6C1178.7 353.8 1186.6 357.9 1194.6 362.3C1202.7 366.7 1211.3 371.3 1216.2 378C1221.1 384.6 1223.2 393.3 1224.1 402C1225 410.7 1224.2 421.5 1221.7 430.2C1219.1 438.9 1214.5 447.3 1208.9 454.2C1203.3 461.1 1198.2 467 1187.9 471.5C1177.7 476.1 1160.5 479.1 1147.3 481.2C1134.1 483.3 1123 485.5 1108.6 484.1C1094.2 482.7 1075.7 477.3 1061 472.8C1046.3 468.2 1032.1 462.4 1020.6 456.8C1009.1 451.2 998.5 445.7 992.1 439.1C985.7 432.5 984.1 423.6 982.2 417.4C980.3 411.2 981.1 404.5 980.9 401.9" fill="none" stroke="#8a9a9a" stroke-width=".6" opacity=".6"/><ellipse cx="1126" cy="413" rx="70" ry="44" fill="none" stroke="#8aa0c8" stroke-width=".7" transform="rotate(2 1126 413)"/><ellipse cx="1133.500" cy="413" rx="17.500" ry="11.500" fill="none" stroke="#8aa0c8" stroke-width=".8"/><path d="M875.1 511.2C875.8 514 879.3 522.7 879.7 527.9C880 533.1 878.6 538 877.2 542.5C875.7 547 873.3 554.3 870.9 555C868.5 555.7 864.8 550.5 862.6 546.7C860.3 542.8 857.7 536.2 857.4 532.1C857 527.9 858.2 524.1 860.5 521.7C862.8 519.2 868.5 519.2 870.9 517.5C873.3 515.8 874.4 512.3 875.1 511.2M854.2 588.3C856.7 587.3 865 582.8 868.8 582.1C872.7 581.4 875.1 581.7 877.2 584.2C879.3 586.6 880.3 591.8 881.3 596.7C882.4 601.5 884.5 609.9 883.4 613.3C882.4 616.8 878.2 615.8 875.1 617.5C872 619.2 867.8 623.1 864.7 623.8C861.5 624.4 858.4 624.1 856.3 621.7C854.2 619.2 852.7 613.3 852.2 609.2C851.6 605 852.9 600.1 853.2 596.7C853.6 593.2 854.1 589.7 854.2 588.3M698 688.3C701.5 687.3 711.9 683.5 718.8 682.1C725.8 680.7 732.7 680.3 739.7 680C746.6 679.7 754.2 679.1 760.5 680C766.8 680.9 772.3 685.2 777.2 685.2C782 685.2 785.5 681.6 789.7 680C793.8 678.4 796.6 676.5 802.2 675.8C807.7 675.1 816.1 675.5 823 675.8C829.9 676.2 836.9 678.3 843.8 677.9C850.8 677.6 857.7 675.1 864.7 673.8C871.6 672.4 879.9 668.5 885.5 669.6C891.1 670.6 893.1 679 898 680C902.9 681 912.6 674.8 914.7 675.8C916.8 676.9 912.6 683.8 910.5 686.2C908.4 688.7 903.6 689.7 902.2 690.4M698 527.9C700.1 527.4 706.3 526.9 710.5 524.8C714.7 522.7 720.4 519.1 723 515.4C725.6 511.8 723.3 505.9 726.1 502.9C728.9 500 733.9 498.8 739.7 497.7C745.4 496.7 754.2 496.1 760.5 496.7C766.8 497.2 772 499.3 777.2 500.8C782.4 502.4 786.9 505.5 791.8 506C796.6 506.6 803.9 504.3 806.3 504M708.4 605C709.8 604 713.3 599.4 716.8 598.8C720.2 598.1 726.5 599.8 729.2 600.8C732 601.9 734.5 603.3 733.4 605C732.4 606.7 726.5 610.6 723 611.2C719.5 611.9 715 610.2 712.6 609.2C710.2 608.1 709.1 605.7 708.4 605M806.3 504C807.7 503.1 811.9 500.7 814.7 498.8C817.4 496.8 819.9 495.6 823 492.5C826.1 489.4 831.7 482.1 833.4 480M906.3 511.2C908.4 513.5 914.3 521 918.8 524.8C923.3 528.6 928.6 530.9 933.4 534.2C938.3 537.5 943.5 541.1 948 544.6C952.5 548.1 956 552.4 960.5 555C965 557.6 970.6 557.8 975.1 560.2C979.6 562.6 983.8 566.3 987.6 569.6C991.4 572.9 996.3 578.3 998 580M950.1 646.7C952.5 646.3 960.2 644.6 964.7 644.6C969.2 644.6 971.6 646 977.2 646.7C982.7 647.4 994.5 648.4 998 648.8M950.1 646.7C949.7 648.4 947 654.3 948 657.1C949 659.9 952.9 661.9 956.3 663.3C959.8 664.7 964.7 664 968.8 665.4C973 666.8 976.5 670.3 981.3 671.7C986.2 673.1 995.2 673.4 998 673.8M893.8 705C894.2 702.2 894.2 692.5 895.9 688.3C897.7 684.2 901.1 682.1 904.2 680C907.4 677.9 912.9 676.5 914.7 675.8M698 287.1C700.1 286.7 706.3 284.3 710.5 285C714.7 285.7 718.1 288.1 723 291.2C727.9 294.4 735.2 301.5 739.7 303.8C744.2 306 748 302.7 750.1 304.8C752.2 306.9 749.4 314.7 752.2 316.2C754.9 317.8 761.2 314.2 766.8 314.2C772.3 314.2 780.6 313.8 785.5 316.2C790.4 318.7 791.1 325.3 795.9 328.8C800.8 332.2 808.8 334.8 814.7 337.1C820.6 339.3 825.8 340.9 831.3 342.3C836.9 343.7 845.9 343.9 848 345.4C850.1 347 845.6 349.2 843.8 351.7C842.1 354.1 838.8 356.5 837.6 360C836.4 363.5 836.7 370.4 836.5 372.5M733.4 272.5C735.8 271.1 743.5 264.2 748 264.2C752.5 264.2 755.6 270.1 760.5 272.5C765.4 274.9 772.3 276.7 777.2 278.8C782 280.8 787.9 282.2 789.7 285C791.4 287.8 786.5 292.6 787.6 295.4C788.6 298.2 793.5 301.5 795.9 301.7C798.3 301.8 801.1 297.3 802.2 296.5M739.7 275.6C740.2 274.2 741.2 268 742.8 267.3C744.4 266.6 748.5 269.7 749 271.5C749.6 273.2 747.5 277 745.9 277.7C744.4 278.4 740.7 276 739.7 275.6M793.8 260C794.5 262.1 798.2 268 798 272.5C797.8 277 794.5 283.3 792.8 287.1C791.1 290.9 788.5 294 787.6 295.4M810.5 387.1C811.9 386.4 814.7 383.4 818.8 382.9C823 382.4 829.9 384.5 835.5 384C841.1 383.4 847.3 380.5 852.2 379.8C857 379.1 859.8 378.9 864.7 379.8C869.5 380.7 877.2 383.4 881.3 385C885.5 386.6 885.5 389.2 889.7 389.2C893.8 389.2 900.1 386.2 906.3 385C912.6 383.8 920.9 382.6 927.2 381.9C933.4 381.2 938.6 380.8 943.8 380.8C949 380.8 956 381.7 958.4 381.9M795.9 418.3C797.7 417.8 803.2 415.2 806.3 415.2C809.5 415.2 813.6 415.7 814.7 418.3C815.7 420.9 811.2 429.4 812.6 430.8C814 432.2 819.9 427 823 426.7C826.1 426.3 829.9 428.4 831.3 428.8M881.3 385C881.7 386.7 881.3 392.6 883.4 395.4C885.5 398.2 891.1 401.3 893.8 401.7C896.6 402 896.6 397.2 900.1 397.5C903.6 397.8 910.2 403.1 914.7 403.8C919.2 404.4 922.7 402.7 927.2 401.7C931.7 400.6 936.9 396.8 941.8 397.5C946.6 398.2 950.8 403.8 956.3 405.8C961.9 407.9 968.1 408.4 975.1 410C982 411.6 994.2 414.3 998 415.2M814.7 432.9C816.1 434.7 822.3 439.9 823 443.3C823.7 446.8 820.2 449.6 818.8 453.8C817.4 457.9 814 464.5 814.7 468.3C815.4 472.2 818.8 476 823 476.7C827.2 477.4 834.1 473.5 839.7 472.5C845.2 471.5 851.5 470.1 856.3 470.4C861.2 470.8 865 472.2 868.8 474.6C872.7 477 877.5 483.3 879.2 485M943.8 443.3C945.9 442.6 951.5 440.9 956.3 439.2C961.2 437.4 969.5 435.7 973 432.9C976.5 430.1 975.1 424.9 977.2 422.5C979.3 420.1 982 419.4 985.5 418.3C989 417.3 995.9 416.6 998 416.2M943.8 443.3C944.5 445.4 948 451.7 948 455.8C948 460 943.8 463.5 943.8 468.3C943.8 473.2 947.3 482.2 948 485M956.3 364.2C958.4 363.1 965.4 358.6 968.8 357.9C972.3 357.2 974.7 357.6 977.2 360C979.6 362.4 983.1 368.3 983.4 372.5C983.8 376.7 982.4 381.5 979.2 385C976.1 388.5 967.1 391.9 964.7 393.3M941.8 307.9C943.8 307.2 949.7 305.1 954.2 303.8C958.8 302.4 963.6 301.3 968.8 299.6C974 297.8 980.6 295.1 985.5 293.3C990.4 291.6 995.9 289.9 998 289.2M948 320.4C950.1 322.5 956 329.1 960.5 332.9C965 336.7 970.2 340.2 975.1 343.3C979.9 346.5 985.8 349.9 989.7 351.7C993.5 353.4 996.6 353.4 998 353.8M984 287.1C986.1 286.9 992.7 287.1 996.5 286C1000.3 285 1004.8 283.1 1006.9 280.8C1009 278.6 1010 274.9 1009 272.5C1008 270.1 1002.1 267.3 1000.7 266.2M1006.9 287.1C1009.3 288.3 1016.3 292.8 1021.5 294.4C1026.7 295.9 1034 293.9 1038.2 296.5C1042.3 299.1 1043 308.6 1046.5 310C1050 311.4 1054.5 305 1059 304.8C1063.5 304.6 1069.4 307 1073.6 309C1077.8 310.9 1080.2 314 1084 316.2C1087.8 318.5 1093 320.4 1096.5 322.5C1100 324.6 1101.4 327.9 1104.8 328.8C1108.3 329.6 1113.2 326.3 1117.3 327.7C1121.5 329.1 1125 336.2 1129.8 337.1C1134.7 338 1140.9 333.6 1146.5 332.9C1152.1 332.2 1158 332.2 1163.2 332.9C1168.4 333.6 1172.9 335.5 1177.8 337.1C1182.6 338.6 1186.4 341.8 1192.3 342.3C1198.2 342.8 1209.7 340.6 1213.2 340.2M1213.2 340.2C1210 338.3 1195.8 332.4 1194.4 328.8C1193 325.1 1200.7 321.8 1204.8 318.3C1209 314.9 1215.9 311.4 1219.4 307.9C1222.9 304.4 1225.3 301 1225.7 297.5C1226 294 1223.2 290.9 1221.5 287.1C1219.8 283.3 1215.9 278.4 1215.2 274.6C1214.6 270.8 1214.2 266.2 1217.3 264.2C1220.5 262.1 1227.8 262.6 1234 262.1C1240.2 261.6 1251.4 261.2 1254.8 261M984 351.7C986.8 350.6 995.1 346.6 1000.7 345.4C1006.2 344.2 1011.8 344 1017.3 344.4C1022.9 344.7 1028.1 347 1034 347.5C1039.9 348 1047.2 346.8 1052.8 347.5C1058.3 348.2 1064.9 351 1067.3 351.7M1052.8 347.5C1053.4 350.3 1054.5 359.7 1056.9 364.2C1059.3 368.7 1063.2 372.2 1067.3 374.6C1071.5 377 1076.4 378.6 1081.9 378.8C1087.5 378.9 1094.8 377.4 1100.7 375.6C1106.6 373.9 1112.5 370.2 1117.3 368.3C1122.2 366.4 1125.7 366.2 1129.8 364.2C1134 362.1 1137.5 357.2 1142.3 355.8C1147.2 354.4 1154.1 355.1 1159 355.8C1163.9 356.5 1167.3 358.6 1171.5 360C1175.7 361.4 1179.1 362.1 1184 364.2C1188.9 366.2 1195.1 370.4 1200.7 372.5C1206.2 374.6 1211.8 376.5 1217.3 376.7C1222.9 376.8 1228.4 373.2 1234 373.5C1239.6 373.9 1247.5 378.8 1250.7 378.8C1253.8 378.8 1250 374.9 1252.8 373.5C1255.5 372.2 1262.1 371.8 1267.3 370.4C1272.5 369 1281.2 366.1 1284 365.2M1067.3 374.6C1064.9 375.3 1056.6 376.3 1052.8 378.8C1048.9 381.2 1046.2 385.3 1044.4 389.2C1042.7 393 1044.1 398.9 1042.3 401.7C1040.6 404.4 1037.5 405 1034 405.8C1030.5 406.7 1025.7 406.2 1021.5 406.9C1017.3 407.6 1013.2 408.6 1009 410C1004.8 411.4 1000.7 413.8 996.5 415.2C992.3 416.6 986.1 417.8 984 418.3M1034 405.8C1034.3 407.9 1037.5 414.9 1036.1 418.3C1034.7 421.8 1027.1 423.5 1025.7 426.7C1024.3 429.8 1029.1 435 1027.8 437.1C1026.4 439.2 1021.5 439.2 1017.3 439.2C1013.2 439.2 1006.9 436.7 1002.8 437.1C998.6 437.4 995.5 441.2 992.3 441.2C989.2 441.2 985.4 437.8 984 437.1M1027.8 437.1C1028.4 439.2 1028.8 447.8 1031.9 449.6C1035 451.3 1041.3 447.5 1046.5 447.5C1051.7 447.5 1057.6 448.5 1063.2 449.6C1068.7 450.6 1074.3 452.5 1079.8 453.8C1085.4 455 1091.6 457.6 1096.5 456.9C1101.4 456.2 1106.2 451 1109 449.6C1111.8 448.2 1112.5 448.7 1113.2 448.5M1042.3 401.7C1044.4 403.8 1050.7 410 1054.8 414.2C1059 418.3 1062.8 423.5 1067.3 426.7C1071.8 429.8 1077.1 432.2 1081.9 432.9C1086.8 433.6 1092.7 432.2 1096.5 430.8C1100.3 429.4 1101.4 425.8 1104.8 424.6C1108.3 423.4 1113.2 424.2 1117.3 423.5C1121.5 422.8 1125.7 420.6 1129.8 420.4C1134 420.2 1138.2 422.7 1142.3 422.5C1146.5 422.3 1152.8 419.9 1154.8 419.4M1175.7 387.1C1174.3 389.5 1170.1 397.2 1167.3 401.7C1164.6 406.2 1161.1 411.2 1159 414.2C1156.9 417.1 1156.9 417.6 1154.8 419.4C1152.8 421.1 1147.5 421.6 1146.5 424.6C1145.5 427.5 1145.8 433.3 1148.6 437.1C1151.4 440.9 1160.4 443.7 1163.2 447.5C1165.9 451.3 1162.8 457.2 1165.2 460C1167.7 462.8 1173.2 462.8 1177.8 464.2C1182.3 465.6 1189.2 464.9 1192.3 468.3C1195.5 471.8 1195.8 482.2 1196.5 485M1100.7 430.8C1101.4 432.9 1103.1 440.2 1104.8 443.3C1106.6 446.5 1110.7 446.8 1111.1 449.6C1111.4 452.4 1106.6 456.9 1106.9 460C1107.3 463.1 1112.8 464.2 1113.2 468.3C1113.5 472.5 1109.7 482.2 1109 485M1236.1 485C1235.4 482.6 1234 474.6 1231.9 470.4C1229.8 466.2 1227.4 462.4 1223.6 460C1219.8 457.6 1214.2 454.4 1209 455.8C1203.8 457.2 1195.1 466.3 1192.3 468.3M984 494.6C986.8 496.3 994.4 504 1000.7 505C1006.9 506 1015.2 501.2 1021.5 500.8C1027.8 500.5 1033 502.9 1038.2 502.9C1043.4 502.9 1047.9 500.5 1052.8 500.8C1057.6 501.2 1064.9 504.3 1067.3 505M1009 480C1011.1 481.7 1016.6 487.3 1021.5 490.4C1026.4 493.5 1034 495.6 1038.2 498.8C1042.3 501.9 1042.3 507.1 1046.5 509.2C1050.7 511.2 1058.3 510.2 1063.2 511.2C1068 512.3 1071.5 513.7 1075.7 515.4C1079.8 517.2 1084 518.9 1088.2 521.7C1092.3 524.4 1096.5 530 1100.7 532.1C1104.8 534.2 1111.1 533.8 1113.2 534.2M1050.7 508.1C1052.8 507.8 1059 505.5 1063.2 506C1067.3 506.6 1075 510 1075.7 511.2C1076.4 512.5 1071.2 513.3 1067.3 513.3C1063.5 513.3 1055.2 511.6 1052.8 511.2M1096.5 500.8C1099.3 500.7 1107.6 499.1 1113.2 499.8C1118.7 500.5 1125.7 502.7 1129.8 505C1134 507.3 1138.2 510.6 1138.2 513.3C1138.2 516.1 1133.3 519.2 1129.8 521.7C1126.4 524.1 1120.1 525.8 1117.3 527.9C1114.6 530 1113.2 530.7 1113.2 534.2C1113.2 537.6 1116.6 543.9 1117.3 548.8C1118 553.6 1118 558.5 1117.3 563.3C1116.6 568.2 1112.5 573.1 1113.2 577.9C1113.9 582.8 1118.7 588 1121.5 592.5C1124.3 597 1126.4 601.5 1129.8 605C1133.3 608.5 1138.9 609.9 1142.3 613.3C1145.8 616.8 1149.3 623.8 1150.7 625.8M1029.8 546.7C1031.2 545.6 1037.5 540.1 1038.2 540.4C1038.9 540.8 1032.6 546 1034 548.8C1035.4 551.5 1041.6 554.7 1046.5 557.1C1051.4 559.5 1058.3 560.6 1063.2 563.3C1068 566.1 1072.2 570.3 1075.7 573.8C1079.1 577.2 1081.9 580.3 1084 584.2C1086.1 588 1087.5 594.6 1088.2 596.7M984 567.5C986.1 568.2 993 569.6 996.5 571.7C1000 573.8 1000.7 576.5 1004.8 580C1009 583.5 1017.7 588.3 1021.5 592.5C1025.3 596.7 1025.7 601.2 1027.8 605C1029.8 608.8 1030.9 615.8 1034 615.4C1037.1 615.1 1044.8 606 1046.5 602.9C1048.2 599.8 1042.7 600.5 1044.4 596.7C1046.2 592.8 1053.1 582.4 1056.9 580C1060.7 577.6 1065.6 581.7 1067.3 582.1M1034 615.4C1034.3 617.8 1036.8 625.5 1036.1 630C1035.4 634.5 1032.3 639.7 1029.8 642.5C1027.4 645.3 1025 646.3 1021.5 646.7C1018 647 1013.2 644.6 1009 644.6C1004.8 644.6 1000.7 646 996.5 646.7C992.3 647.4 986.1 648.4 984 648.8M1021.5 646.7C1020.8 648.8 1019.4 655 1017.3 659.2C1015.2 663.3 1012.5 668.9 1009 671.7C1005.5 674.4 1000.7 675.5 996.5 675.8C992.3 676.2 986.1 674.1 984 673.8M1117.3 563.3C1119.4 563 1125.7 561.9 1129.8 561.2C1134 560.6 1139.6 558.1 1142.3 559.2C1145.1 560.2 1143.7 565.4 1146.5 567.5C1149.3 569.6 1154.8 571.7 1159 571.7C1163.2 571.7 1169.4 568.2 1171.5 567.5M1142.3 559.2C1142.3 556.4 1140.9 547 1142.3 542.5C1143.7 538 1146.5 534.2 1150.7 532.1C1154.8 530 1161.8 530.5 1167.3 530C1172.9 529.5 1179.8 530.3 1184 529C1188.2 527.6 1189.6 524.6 1192.3 521.7C1195.1 518.7 1200 514.7 1200.7 511.2C1201.4 507.8 1198.6 504 1196.5 500.8C1194.4 497.7 1190.2 496 1188.2 492.5C1186.1 489 1184.7 482.1 1184 480M1192.3 521.7C1193 524.4 1195.1 532.8 1196.5 538.3C1197.9 543.9 1197.9 552.6 1200.7 555C1203.4 557.4 1208.3 553.6 1213.2 552.9C1218 552.2 1224.3 550.5 1229.8 550.8C1235.4 551.2 1241.3 554.7 1246.5 555C1251.7 555.3 1256.2 554 1261.1 552.9C1265.9 551.9 1271.8 549.8 1275.7 548.8C1279.5 547.7 1282.6 547 1284 546.7M1138.2 630C1139.6 630.7 1144.4 631.7 1146.5 634.2C1148.6 636.6 1151 642.5 1150.7 644.6C1150.3 646.7 1146.5 647.4 1144.4 646.7C1142.3 646 1139.2 643.2 1138.2 640.4C1137.1 637.6 1138.2 631.7 1138.2 630M1154.8 646.7C1156.9 647.7 1164.6 649.4 1167.3 652.9C1170.1 656.4 1169.4 663.7 1171.5 667.5C1173.6 671.3 1177.8 672.4 1179.8 675.8C1181.9 679.3 1181.9 685.6 1184 688.3C1186.1 691.1 1189.6 690.4 1192.3 692.5C1195.1 694.6 1199.3 699.4 1200.7 700.8M1192.3 592.5C1193.7 594.6 1197.9 601.5 1200.7 605C1203.4 608.5 1208.3 610.6 1209 613.3C1209.7 616.1 1204.1 618.9 1204.8 621.7C1205.5 624.4 1209.7 627.2 1213.2 630C1216.6 632.8 1222.2 635.6 1225.7 638.3C1229.1 641.1 1231.9 643.2 1234 646.7C1236.1 650.1 1238.9 655.7 1238.2 659.2C1237.5 662.6 1231.2 666.1 1229.8 667.5M1217.3 573.8C1219.4 573.4 1225.7 571.3 1229.8 571.7C1234 572 1238.2 574.8 1242.3 575.8C1246.5 576.9 1250.7 577.2 1254.8 577.9C1259 578.6 1262.5 580 1267.3 580C1272.2 580 1281.2 578.3 1284 577.9M1209 588.3C1210.4 587.6 1214.9 583.8 1217.3 584.2C1219.8 584.5 1223.9 588.5 1223.6 590.4C1223.2 592.3 1217.7 596 1215.2 595.6C1212.8 595.3 1210 589.5 1209 588.3M1250.7 592.5C1252.4 591.8 1257.6 588.3 1261.1 588.3C1264.6 588.3 1271.2 590.8 1271.5 592.5C1271.8 594.2 1266.6 598.8 1263.2 598.8C1259.7 598.8 1252.8 593.5 1250.7 592.5M1271.5 613.3L1284 609.2M1269.4 634.2C1271.2 633.8 1277.4 631.4 1279.8 632.1C1282.3 632.8 1283.3 637.3 1284 638.3M1252.8 667.5C1254.1 668.2 1260 669.6 1261.1 671.7C1262.1 673.8 1260.4 679.3 1259 680C1257.6 680.7 1253.8 677.9 1252.8 675.8C1251.7 673.8 1252.8 668.9 1252.8 667.5M1192.3 680C1193.7 679.3 1198.6 674.4 1200.7 675.8C1202.8 677.2 1205.2 684.9 1204.8 688.3C1204.5 691.8 1200.7 698.1 1198.6 696.7C1196.5 695.3 1193.4 682.8 1192.3 680M942.2 445C943.8 444.1 948.7 441.3 951.9 439.4C955.2 437.6 958.2 434.9 961.7 433.9C965.1 432.8 970.5 432 972.8 433.2C975.1 434.4 974.4 438.4 975.6 440.8C976.7 443.3 978.3 444.8 979.7 447.8C981.1 450.8 983.2 457 983.9 458.9M945 460.3C944.9 461.9 943.8 466.8 944.3 470C944.8 473.2 945.3 476.9 947.8 479.7C950.2 482.5 954.7 484.6 958.9 486.7C963.1 488.8 969.5 489.9 972.8 492.2C976 494.5 976.5 496.6 978.3 500.6C980.2 504.5 980.6 511.2 983.9 515.8C987.1 520.5 993.6 524.6 997.8 528.3C1001.9 532 1003.3 536.2 1008.9 538.1C1014.4 539.9 1026.2 538.5 1031.1 539.4C1036 540.4 1038.1 541.8 1038.1 543.6C1038.1 545.5 1030 548 1031.1 550.6C1032.3 553.1 1040.4 556.6 1045 558.9C1049.6 561.2 1056.6 563.5 1058.9 564.4M920 525.6C922.1 527.2 927.9 531.6 932.5 535.3C937.1 539 942.2 544.1 947.8 547.8C953.3 551.5 960.5 555.4 965.8 557.5C971.2 559.6 976.2 558.2 979.7 560.3C983.2 562.4 985.5 568.4 986.7 570M978.3 440.8C979.7 440.6 983.2 440.4 986.7 439.4C990.1 438.5 995.5 435 999.2 435.3C1002.9 435.5 1005.9 441.1 1008.9 440.8C1011.9 440.6 1014.4 436 1017.2 433.9C1020 431.8 1024.6 430.2 1025.6 428.3C1026.5 426.5 1023.2 423.7 1022.8 422.8M1003.3 463.1C1004.7 464 1008.7 466.6 1011.7 468.6C1014.7 470.6 1020.7 474.2 1021.4 474.9C1022.1 475.6 1018.4 474.1 1015.8 472.8C1013.3 471.5 1007.7 468.1 1006.1 467.2M1028.3 450.6C1028.6 452.2 1028.1 456.1 1029.7 460.3C1031.3 464.4 1035 471.9 1038.1 475.6C1041.1 479.3 1045.2 480 1047.8 482.5C1050.3 485 1051 488.3 1053.3 490.8C1055.6 493.4 1059.8 496.2 1061.7 497.8C1063.5 499.4 1064 500.1 1064.4 500.6M1042.2 500.6C1044.1 500.3 1049.6 498.7 1053.3 499.2C1057 499.6 1061.2 501.5 1064.4 503.3C1067.7 505.2 1069.5 508 1072.8 510.3C1076 512.6 1080.6 515.6 1083.9 517.2C1087.1 518.8 1089.9 518.1 1092.2 520C1094.5 521.9 1096.9 526.9 1097.8 528.3M1049.2 510.3C1050.8 510.5 1056.8 511.9 1058.9 511.7C1061 511.4 1062.6 509.6 1061.7 508.9C1060.7 508.2 1054.7 507.7 1053.3 507.5M1093.6 525.6C1095.5 526.5 1103.6 530.6 1104.7 531.1C1105.9 531.6 1101.2 528.8 1100.6 528.3" fill="none" stroke="#6c6c6c" stroke-width="1.150" opacity=".9" stroke-linejoin="round"/><path d="M693.8 304.8C699.7 304.9 717.1 305.4 729.2 305.4C741.4 305.4 760.5 304.9 766.8 304.8M787.6 304.8C791.4 304.6 803.9 304.8 810.5 303.8C817.1 302.7 821.6 301 827.2 298.5C832.7 296.1 838.3 292.1 843.8 289.2C849.4 286.2 854.9 284.3 860.5 280.8C866.1 277.4 873 272.2 877.2 268.3C881.3 264.5 884.1 259.7 885.5 257.9M698 559.2C698.7 556.4 700.8 548.8 702.2 542.5C703.6 536.2 704.6 528.6 706.3 521.7C708.1 514.7 711.9 511.5 712.6 500.8C713.3 490.2 711.9 468.5 710.5 457.9C709.1 447.3 704.9 442.3 704.2 437.1C703.6 431.9 705.3 433.6 706.3 426.7C707.4 419.7 710 403.8 710.5 395.4C711 387.1 708.8 382.9 709.5 376.7C710.2 370.4 711.7 362.8 714.7 357.9C717.6 353.1 721.3 350.3 727.2 347.5C733.1 344.7 742.8 342.5 750.1 341.2C757.4 340 764.7 339.9 770.9 340.2C777.2 340.6 784.8 342.8 787.6 343.3M808.4 343.8C812.2 342.6 824.7 339.6 831.3 337.1C837.9 334.6 842.4 332.2 848 328.8C853.6 325.3 859.1 320.8 864.7 316.2C870.2 311.7 875.8 306.9 881.3 301.7C886.9 296.5 892.4 290.2 898 285C903.6 279.8 910.2 274.9 914.7 270.4C919.2 265.9 923.3 260 925.1 257.9M706.3 705C705.5 702.2 701.8 693.9 701.1 688.3C700.4 682.8 701.3 677.9 702.2 671.7C703 665.4 704.2 657.8 706.3 650.8C708.4 643.9 712.2 637.6 714.7 630C717.1 622.4 720.6 611.9 720.9 605C721.3 598.1 718.3 594.2 716.8 588.3C715.2 582.4 711.5 575.5 711.5 569.6C711.5 563.7 713.8 558.8 716.8 552.9C719.7 547 726.1 541.1 729.2 534.2C732.4 527.2 733.9 522.2 735.5 511.2C737.1 500.3 738.1 479 738.6 468.3C739.1 457.7 738.5 454.4 738.6 447.5C738.8 440.6 739.3 433.6 739.7 426.7C740 419.7 739.7 412.1 740.7 405.8C741.8 399.6 743 393.7 745.9 389.2C748.9 384.7 753.2 381.4 758.4 378.8C763.6 376.1 770.6 374.7 777.2 373.5C783.8 372.4 792.1 371.9 798 372.1C803.9 372.3 810.2 374.2 812.6 374.6M834.5 370.8C838.1 370.1 849.2 367.5 856.3 366.2C863.5 365 871.6 365.2 877.2 363.1C882.7 361 886.5 357.7 889.7 353.8C892.8 349.8 894.5 344.4 895.9 339.2C897.3 334 896.3 327.7 898 322.5C899.7 317.3 902.2 312.8 906.3 307.9C910.5 303.1 917.4 297.8 923 293.3C928.6 288.8 934.8 284.7 939.7 280.8C944.5 277 948.3 274.2 952.2 270.4C956 266.6 960.8 260 962.6 257.9M812.6 705C812.4 702.2 812.6 694.6 811.5 688.3C810.5 682.1 808.2 674.4 806.3 667.5C804.4 660.6 802.5 654.3 800.1 646.7C797.7 639 794.5 630 791.8 621.7C789 613.3 786.2 604.7 783.4 596.7C780.6 588.7 777.9 582.8 775.1 573.8C772.3 564.7 768.8 552.9 766.8 542.5C764.7 532.1 763.3 524.3 762.6 511.2C761.8 498.2 762.3 474.8 762.2 464.2C762 453.5 761.1 453.8 761.5 447.5C762 441.2 762.4 432.6 764.7 426.7C766.9 420.8 770.6 415.6 775.1 412.1C779.6 408.6 785.3 406.5 791.8 405.8C798.2 405.2 810 407.9 813.6 408.3M834.5 408.1C838.1 407.4 849.2 405.9 856.3 403.8C863.5 401.6 870.2 398.2 877.2 395.4C884.1 392.6 891.8 389.2 898 387.1C904.2 385 910.7 385.3 914.7 382.9C918.7 380.5 920.9 377 922 372.5C923 368 920.4 361.4 920.9 355.8C921.4 350.3 923.7 344.7 925.1 339.2C926.5 333.6 926.5 328.1 929.2 322.5C932 316.9 936.9 311 941.8 305.8C946.6 300.6 952.5 296.1 958.4 291.2C964.3 286.4 970.6 281.2 977.2 276.7C983.8 272.2 992.4 267.6 998 264.2C1003.6 260.7 1007.4 258.6 1010.5 255.8C1013.6 253.1 1015.7 248.9 1016.8 247.5M757.4 705C757.5 700.8 759.6 689.7 758.4 680C757.2 670.3 752 659.2 750.1 646.7C748.2 634.2 747.7 618.9 747 605C746.3 591.1 746.3 577.2 745.9 563.3C745.6 549.4 744.2 537.5 744.9 521.7C745.6 505.8 747.8 479 750.1 468.3C752.3 457.7 754.9 460.5 758.4 457.9C761.9 455.3 766.9 453.6 770.9 452.7C774.9 451.8 780.5 452.7 782.4 452.7M803.2 451.7C805.1 450.3 810.7 446.8 814.7 443.3C818.7 439.9 822.3 434.7 827.2 430.8C832 427 838.3 423.2 843.8 420.4C849.4 417.6 854.2 415.9 860.5 414.2C866.8 412.4 875.1 411.4 881.3 410C887.6 408.6 892.1 407.9 898 405.8C903.9 403.8 910.2 400.3 916.8 397.5C923.3 394.7 932 391.2 937.6 389.2C943.1 387.1 947.7 388.5 950.1 385C952.5 381.5 951.5 373.9 952.2 368.3C952.9 362.8 952.5 357.2 954.2 351.7C956 346.1 958.8 340.2 962.6 335C966.4 329.8 971.3 325.6 977.2 320.4C983.1 315.2 991.1 308.6 998 303.8C1004.9 298.9 1012.6 295.1 1018.8 291.2C1025.1 287.4 1030.6 284 1035.5 280.8C1040.4 277.7 1045.9 273.9 1048 272.5M866.8 705C865 700.8 859.1 687.3 856.3 680C853.6 672.7 852.5 667.5 850.1 661.2C847.7 655 845.6 649.1 841.8 642.5C837.9 635.9 832.4 628.6 827.2 621.7C822 614.7 815.7 607.8 810.5 600.8C805.3 593.9 800.1 586.9 795.9 580C791.8 573.1 788.5 567.2 785.5 559.2C782.5 551.2 779.8 541.1 778.2 532.1C776.6 523.1 773.9 515.6 776.1 505C778.4 494.4 786 476.9 791.8 468.3C797.5 459.8 805.3 458.6 810.5 453.8C815.7 448.9 818.1 443.3 823 439.2C827.9 435 834.1 431.5 839.7 428.8C845.2 426 849.2 423.9 856.3 422.5C863.5 421.1 878 420.8 882.4 420.4M904.2 420.4C907.4 419.5 916.4 417.6 923 415.2C929.6 412.8 936.9 408.1 943.8 405.8C950.8 403.6 958.8 404.4 964.7 401.7C970.6 398.9 976.1 394 979.2 389.2C982.4 384.3 983.4 377.7 983.4 372.5C983.4 367.3 978.9 362.8 979.2 357.9C979.6 353.1 982.4 347.8 985.5 343.3C988.6 338.8 995.9 332.9 998 330.8M833.4 596.7C832.4 595.6 831 594.6 827.2 590.4C823.3 586.2 815.7 578.3 810.5 571.7C805.3 565.1 799.7 558.5 795.9 550.8C792.1 543.2 789.3 534.2 787.6 525.8C785.8 517.5 782.4 510.4 785.5 500.8C788.6 491.2 799.4 476.5 806.3 468.3C813.3 460.1 820.9 456.5 827.2 451.7C833.4 446.8 837.6 441.9 843.8 439.2C850.1 436.4 857.7 435.9 864.7 435C871.6 434.1 878.6 434 885.5 434C892.4 434 899.4 435.9 906.3 435C913.3 434.1 920.2 430.8 927.2 428.8C934.1 426.7 940 423.9 948 422.5C956 421.1 970.6 420.8 975.1 420.4M823 485C826.5 482.2 836.2 471.5 843.8 468.3C851.5 465.2 860.2 465.9 868.8 466.2C877.5 466.6 887.6 469.4 895.9 470.4C904.3 471.5 912.9 474.2 918.8 472.5C924.7 470.8 926.5 464.2 931.3 460C936.2 455.8 941.8 450.3 948 447.5C954.2 444.7 963.1 443.2 968.8 443.3C974.6 443.5 980.1 447.7 982.4 448.5M984 339.2C986.1 336.4 991.6 327 996.5 322.5C1001.4 318 1010 315.6 1013.2 312.1C1016.3 308.6 1012.1 304.8 1015.2 301.7C1018.4 298.5 1026.7 295.1 1031.9 293.3C1037.1 291.6 1042.3 294 1046.5 291.2C1050.7 288.5 1052.8 280.8 1056.9 276.7C1061.1 272.5 1067.7 269.4 1071.5 266.2C1075.3 263.1 1078.4 259.3 1079.8 257.9M1000.7 414.2C1001.4 410 1003.1 396.8 1004.8 389.2C1006.6 381.5 1010.4 373.2 1011.1 368.3C1011.8 363.5 1007.6 363.1 1009 360C1010.4 356.9 1014.9 354.8 1019.4 349.6C1023.9 344.4 1031.6 334.7 1036.1 328.8C1040.6 322.8 1041.3 318.7 1046.5 314.2C1051.7 309.7 1061.1 304.8 1067.3 301.7C1073.6 298.5 1078.4 299.2 1084 295.4C1089.6 291.6 1095.8 283.3 1100.7 278.8C1105.5 274.2 1109.3 271.8 1113.2 268.3C1117 264.9 1121.8 259.7 1123.6 257.9M1000.7 414.2C1000 415.6 1000.7 420.8 996.5 422.5C992.3 424.2 979.1 424.2 975.7 424.6M1100.7 485C1097.9 483.6 1090.2 480.1 1084 476.7C1077.8 473.2 1069.8 469 1063.2 464.2C1056.6 459.3 1049.3 453.8 1044.4 447.5C1039.6 441.2 1036.8 433.6 1034 426.7C1031.2 419.7 1029.1 412.1 1027.8 405.8C1026.4 399.6 1024.6 394.7 1025.7 389.2C1026.7 383.6 1030.9 377.4 1034 372.5C1037.1 367.6 1041.3 365.6 1044.4 360C1047.5 354.4 1049.6 345.4 1052.8 339.2C1055.9 332.9 1058.3 327 1063.2 322.5C1068 318 1075.7 315.2 1081.9 312.1C1088.2 309 1094.8 307.2 1100.7 303.8C1106.6 300.3 1111.8 295.4 1117.3 291.2C1122.9 287.1 1128.4 282.6 1134 278.8C1139.6 274.9 1145.8 271.8 1150.7 268.3C1155.5 264.9 1161.1 259.7 1163.2 257.9M1142.3 485C1140.9 483.6 1138.2 480.5 1134 476.7C1129.8 472.8 1122.9 466.3 1117.3 462.1C1111.8 457.9 1106.2 455.8 1100.7 451.7C1095.1 447.5 1088.9 441.9 1084 437.1C1079.1 432.2 1075 427.7 1071.5 422.5C1068 417.3 1064.2 412.1 1063.2 405.8C1062.1 399.6 1064.6 391.9 1065.2 385C1065.9 378.1 1065.6 371.1 1067.3 364.2C1069.1 357.2 1071.5 349.2 1075.7 343.3C1079.8 337.4 1086.1 332.6 1092.3 328.8C1098.6 324.9 1106.2 323.9 1113.2 320.4C1120.1 316.9 1127.8 312.1 1134 307.9C1140.2 303.8 1145.1 299.6 1150.7 295.4C1156.2 291.2 1161.8 287.1 1167.3 282.9C1172.9 278.8 1178.4 273.9 1184 270.4C1189.6 266.9 1196.8 264.2 1200.7 262.1C1204.5 260 1205.9 258.6 1206.9 257.9M1142.3 444.4C1138.2 442.5 1124.3 437.3 1117.3 432.9C1110.4 428.6 1104.8 423.5 1100.7 418.3C1096.5 413.1 1093.9 407.2 1092.3 401.7C1090.8 396.1 1090.6 391.2 1091.3 385C1092 378.8 1094.2 370.4 1096.5 364.2C1098.8 357.9 1100.7 352.4 1104.8 347.5C1109 342.6 1115.2 337.8 1121.5 335C1127.8 332.2 1136.1 333.3 1142.3 330.8C1148.6 328.4 1153.4 324.6 1159 320.4C1164.6 316.2 1170.1 310.3 1175.7 305.8C1181.2 301.3 1186.8 297.5 1192.3 293.3C1197.9 289.2 1203.4 285 1209 280.8C1214.6 276.7 1220.1 272.2 1225.7 268.3C1231.2 264.5 1239.6 259.7 1242.3 257.9M1166.3 445.4C1167.9 446.5 1173.4 447.8 1175.7 451.7C1177.9 455.5 1178.4 462.8 1179.8 468.3C1181.2 473.9 1183.3 482.2 1184 485M1217.3 485C1215.2 482.9 1208.7 476.7 1204.8 472.5C1201 468.3 1195.8 464.2 1194.4 460C1193 455.8 1194.1 451.3 1196.5 447.5C1198.9 443.7 1209 439.9 1209 437.1C1209 434.3 1200.7 433.3 1196.5 430.8C1192.3 428.4 1189.6 424.4 1184 422.5C1178.4 420.6 1170.1 421.1 1163.2 419.4C1156.2 417.6 1147.9 415 1142.3 412.1C1136.8 409.1 1132.6 406.2 1129.8 401.7C1127.1 397.2 1125.7 392.6 1125.7 385C1125.7 377.4 1127.1 362.4 1129.8 355.8C1132.6 349.2 1136.8 348.2 1142.3 345.4C1147.9 342.6 1156.9 341.9 1163.2 339.2C1169.4 336.4 1174.3 332.9 1179.8 328.8C1185.4 324.6 1190.9 319 1196.5 314.2C1202.1 309.3 1206.9 304.4 1213.2 299.6C1219.4 294.7 1227.1 289.5 1234 285C1240.9 280.5 1247.9 276 1254.8 272.5C1261.8 269 1270.1 266.2 1275.7 264.2C1281.2 262.1 1286.1 260.7 1288.2 260M1211.1 413.1C1208 410.5 1198.2 402.2 1192.3 397.5C1186.4 392.8 1178.8 389.2 1175.7 385C1172.5 380.8 1172.9 378.1 1173.6 372.5C1174.3 366.9 1176.7 356.5 1179.8 351.7C1183 346.8 1186.8 345.1 1192.3 343.3C1197.9 341.6 1208 343.3 1213.2 341.2C1218.4 339.2 1219.1 335 1223.6 330.8C1228.1 326.7 1234.3 321.1 1240.2 316.2C1246.2 311.4 1253.1 306.2 1259 301.7C1264.9 297.2 1270.8 291.8 1275.7 289.2C1280.5 286.6 1286.1 286.6 1288.2 286M1233 418.3C1235.9 419.7 1246 423.5 1250.7 426.7C1255.4 429.8 1261.1 434.3 1261.1 437.1C1261.1 439.9 1254.8 440.9 1250.7 443.3C1246.5 445.8 1238.5 448.2 1236.1 451.7C1233.7 455.1 1234.3 460 1236.1 464.2C1237.8 468.3 1242.7 473.2 1246.5 476.7C1250.3 480.1 1256.9 483.6 1259 485M1265.2 316.2C1263.2 318.7 1255.5 324.9 1252.8 330.8C1250 336.7 1248.9 344 1248.6 351.7C1248.2 359.3 1248.6 369.4 1250.7 376.7C1252.8 384 1257.6 390.4 1261.1 395.4C1264.6 400.5 1267 405 1271.5 406.9C1276 408.8 1285.4 406.9 1288.2 406.9M984 571.7L1002.8 566.5M1017.3 559.2C1016.3 556.4 1012.5 547.4 1011.1 542.5C1009.7 537.6 1008 534.2 1009 530C1010 525.8 1013.2 521.3 1017.3 517.5C1021.5 513.7 1028.1 509.7 1034 507.1C1039.9 504.5 1047.2 502.4 1052.8 501.9C1058.3 501.4 1062.1 502.4 1067.3 504C1072.5 505.5 1078.4 508.6 1084 511.2C1089.6 513.9 1095.1 517.2 1100.7 519.6C1106.2 522 1111.3 523.8 1117.3 525.8C1123.4 527.9 1133.8 531 1137.1 532.1M984 625.8C986.8 623.8 995.1 616.8 1000.7 613.3C1006.2 609.9 1011.8 606 1017.3 605C1022.9 604 1028.8 607.1 1034 607.1C1039.2 607.1 1044.8 607.4 1048.6 605C1052.4 602.6 1055.9 597.4 1056.9 592.5C1058 587.6 1055.5 581.4 1054.8 575.8C1054.1 570.3 1052.4 564.7 1052.8 559.2C1053.1 553.6 1054.1 547.5 1056.9 542.5C1059.7 537.5 1067.3 531.2 1069.4 529M1092.3 527.9C1095.1 529.3 1102.8 533.5 1109 536.2C1115.2 539 1124.3 541.1 1129.8 544.6C1135.4 548.1 1138.2 553.3 1142.3 557.1C1146.5 560.9 1150.7 565.4 1154.8 567.5C1159 569.6 1162.8 570.6 1167.3 569.6C1171.8 568.5 1177.8 564.7 1181.9 561.2C1186.1 557.8 1187.1 552.2 1192.3 548.8C1197.5 545.3 1208 544.2 1213.2 540.4C1218.4 536.6 1221.3 530 1223.6 525.8C1225.8 521.7 1227.8 518.2 1226.7 515.4C1225.7 512.6 1221 511.2 1217.3 509.2C1213.7 507.1 1209 506.4 1204.8 502.9C1200.7 499.4 1195.8 492.2 1192.3 488.3C1188.9 484.5 1185.4 481.4 1184 480M1142.3 480C1144.4 482.1 1151.7 487.3 1154.8 492.5C1158 497.7 1160 505.7 1161.1 511.2C1162.1 516.8 1161.6 522.4 1161.1 525.8C1160.6 529.3 1158.5 531 1158 532.1M1015.2 705C1017 702.9 1020.5 696.7 1025.7 692.5C1030.9 688.3 1039.6 684.2 1046.5 680C1053.4 675.8 1060.4 671.7 1067.3 667.5C1074.3 663.3 1081.2 659.5 1088.2 655C1095.1 650.5 1102.1 644.6 1109 640.4C1115.9 636.3 1123.6 631 1129.8 630C1136.1 629 1140.2 632.4 1146.5 634.2C1152.8 635.9 1161.4 640.8 1167.3 640.4C1173.2 640.1 1177.4 634.2 1181.9 632.1C1186.4 630 1192.3 628.6 1194.4 627.9M1217.3 631C1219.1 629.5 1225.5 626 1227.8 621.7C1230 617.3 1230.2 611.2 1230.9 605C1231.6 598.8 1231.4 589.7 1231.9 584.2C1232.4 578.6 1231.6 574.4 1234 571.7C1236.4 568.9 1242 567.2 1246.5 567.5C1251 567.8 1256.9 571.3 1261.1 573.8C1265.3 576.2 1267 580.5 1271.5 582.1C1276 583.6 1285.4 583 1288.2 583.1M984 671.7C986.1 671 990.9 669.9 996.5 667.5C1002.1 665.1 1010.4 660.9 1017.3 657.1C1024.3 653.3 1031.2 648.4 1038.2 644.6C1045.1 640.8 1052.8 638 1059 634.2C1065.2 630.3 1070.8 626.5 1075.7 621.7C1080.5 616.8 1085.4 610.6 1088.2 605C1090.9 599.4 1090.9 593.9 1092.3 588.3C1093.7 582.8 1093.7 575.5 1096.5 571.7C1099.3 567.8 1104.8 566.1 1109 565.4C1113.2 564.7 1118 565.4 1121.5 567.5C1125 569.6 1126.4 575.1 1129.8 577.9C1133.3 580.7 1137.5 582.4 1142.3 584.2C1147.2 585.9 1153.3 587.1 1159 588.3C1164.7 589.5 1173.8 590.9 1176.7 591.5M1198.6 586.2C1199.6 583.8 1202.4 576.2 1204.8 571.7C1207.3 567.2 1209.7 562.6 1213.2 559.2C1216.6 555.7 1220.8 552.9 1225.7 550.8C1230.5 548.8 1237.5 547.4 1242.3 546.7C1247.2 546 1250.7 546 1254.8 546.7C1259 547.4 1261.8 550.1 1267.3 550.8C1272.9 551.5 1284.7 550.8 1288.2 550.8M1213.2 480C1215.2 481.4 1220.8 485.6 1225.7 488.3C1230.5 491.1 1236.1 494.2 1242.3 496.7C1248.6 499.1 1255.5 501.5 1263.2 502.9C1270.8 504.3 1284 504.7 1288.2 505M1288.2 520.6C1285.4 520.6 1275.3 519.4 1271.5 520.6C1267.7 521.8 1265.2 525.7 1265.2 527.9C1265.2 530.2 1267.7 533.1 1271.5 534.2C1275.3 535.2 1285.4 534.2 1288.2 534.2M833.4 486.2C831 487.3 823.3 489 818.8 492.5C814.3 496 808.9 501.5 806.3 507.1C803.7 512.6 802.9 519.9 803.2 525.8C803.6 531.7 805.5 537.3 808.4 542.5C811.4 547.7 816.8 553.3 820.9 557.1C825.1 560.9 831.3 564 833.4 565.4M854.2 569.6C857.7 568.4 868.5 564.4 875.1 562.3C881.7 560.2 888.6 560 893.8 557.1C899 554.1 903.2 549.4 906.3 544.6C909.5 539.7 912.2 533.8 912.6 527.9C912.9 522 911.2 515.1 908.4 509.2C905.6 503.3 900.4 496.7 895.9 492.5C891.4 488.3 886.5 485.4 881.3 484.2C876.1 483 869.2 484.9 864.7 485.2C860.2 485.6 856 486.1 854.2 486.2M848 592.5C850.1 591.1 856.3 585.9 860.5 584.2C864.7 582.4 869.9 580.7 873 582.1C876.1 583.5 876.8 588.7 879.2 592.5C881.7 596.3 885.3 599.4 887.6 605C889.8 610.6 891.8 618.9 892.8 625.8C893.8 632.8 894 639.7 893.8 646.7C893.7 653.6 891.8 660.6 891.8 667.5C891.8 674.4 893.3 682.1 893.8 688.3C894.4 694.6 894.7 702.2 894.9 705M998 563.3C994.2 565.1 981.7 570.3 975.1 573.8C968.5 577.2 963.3 579.7 958.4 584.2C953.6 588.7 949.7 594.6 945.9 600.8C942.1 607.1 939 614 935.5 621.7C932 629.3 927.7 638.3 925.1 646.7C922.5 655 920.9 661.9 919.9 671.7C918.8 681.4 919 699.4 918.8 705M998 623.8C995.9 625.5 991.1 630 985.5 634.2C979.9 638.3 970.6 643.2 964.7 648.8C958.8 654.3 953.4 660.9 950.1 667.5C946.8 674.1 945.9 682.1 944.9 688.3C943.8 694.6 944 702.2 943.8 705M998 667.5C995.6 668.5 987.6 670.3 983.4 673.8C979.3 677.2 975.3 683.1 973 688.3C970.7 693.5 970.4 702.2 969.9 705" fill="none" stroke="#fff" stroke-width="1.200" opacity=".97"/><ellipse cx="1108.600" cy="501.500" rx="3.500" ry="3" fill="none" stroke="#fff" stroke-width="1.200" transform="rotate(35 1108.600 501.500)"/><path d="M721.9 266.2l-20.7 17.4M721.9 266.2l6.5 2M720.1 267.7l6.5 2M718.3 269.1l6.5 2M716.6 270.6l6.5 2M769.5 265.9l-20.4 17.7M769.5 265.9l6.5 2M767.7 267.4l6.5 2M766 268.9l6.5 2M764.3 270.4l6.5 2M814.4 266.3l-20.1 18M814.4 266.3l6.5 2M812.7 267.8l6.5 2M811 269.3l6.5 2M859.7 266l-19.8 18.3M859.7 266l6.5 2M858 267.6l6.5 2M856.3 269.2l6.5 2M907.2 266.9l-18.4 15.4M907.2 266.9l6 2M905.4 268.4l6 2M903.7 269.8l6 2M951.8 265.4l-18.4 15.4M951.8 265.4l6 2M950 266.9l6 2M948.3 268.4l6 2M998 266.9l-18.4 15.4M998 266.9l6 2M996.2 268.4l6 2M994.4 269.9l6 2M720.6 311.7l-18.1 20M720.6 311.7l6.5 1.3M719 313.4l6.5 1.3M717.5 315.1l6.5 1.3M716 316.8l6.5 1.3M768 312.8l-17.8 20.3M768 312.8l6.5 1.3M766.5 314.6l6.5 1.3M765 316.3l6.5 1.3M763.5 318l6.5 1.3M814.5 312.2l-17.5 20.6M814.5 312.2l6.5 1.3M813 314l6.5 1.3M811.5 315.7l6.5 1.3M860.6 312.3l-17.2 20.9M860.6 312.3l6.5 1.3M859.1 314.1l6.5 1.3M857.7 315.8l6.5 1.3M723.2 357.5l-15.3 22.3M723.2 357.5l6.5 0.6M721.9 359.4l6.5 0.6M720.6 361.3l6.5 0.6M719.3 363.2l6.5 0.6M769.6 357.3l-14.9 22.5M769.6 357.3l6.5 0.6M768.4 359.2l6.5 0.6M767.1 361.1l6.5 0.6M765.8 363l6.5 0.6M813.1 358l-14.5 22.8M813.1 358l6.5 0.6M811.9 359.9l6.5 0.6M810.6 361.9l6.5 0.6M861.4 356.9l-14.2 23M861.4 356.9l6.5 0.6M860.2 358.9l6.5 0.6M859 360.8l6.5 0.6M721.1 402.7l-12.1 24.1M721.1 402.7l6.5 -0.1M720.1 404.8l6.5 -0.1M719.1 406.8l6.5 -0.1M718 408.9l6.5 -0.1M769.6 404.3l-11.7 24.3M769.6 404.3l6.5 -0.1M768.6 406.4l6.5 -0.1M767.6 408.5l6.5 -0.1M766.6 410.5l6.5 -0.1M813.8 404.6l-11.3 24.5M813.8 404.6l6.5 -0.1M812.8 406.6l6.5 -0.1M811.9 408.7l6.5 -0.1M1171.2 409.7l16 -12M1171.2 409.7l-3.5 -4M1173.1 408.3l-3.5 -4M1217.8 409.3l16 -12M1217.8 409.3l-3.5 -4M1219.7 407.9l-3.5 -4M1265.8 409.4l16 -12M1265.8 409.4l-3.5 -4M1267.6 408l-3.5 -4M722.2 450.3l-8.7 25.6M722.2 450.3l6.5 -0.7M721.5 452.5l6.5 -0.7M720.7 454.7l6.5 -0.7M720 456.8l6.5 -0.7M767.2 448.2l-8.3 25.7M767.2 448.2l6.5 -0.7M766.5 450.4l6.5 -0.7M765.8 452.5l6.5 -0.7M765.1 454.7l6.5 -0.7M815.6 450.2l-7.9 25.8M815.6 450.2l6.5 -0.7M815 452.4l6.5 -0.7M814.3 454.6l6.5 -0.7M1167.3 456.2l17 -10.4M1167.3 456.2l-2.5 -5M1169.2 455l-2.5 -5M1214.5 454.6l17 -10.4M1214.5 454.6l-2.5 -5M1216.4 453.4l-2.5 -5M1259.4 455.9l17 -10.4M1259.4 455.9l-2.5 -5M1261.4 454.7l-2.5 -5M714.7 498.2l3.5 22.7M714.7 498.2l6.5 -2.5M715.2 501.2l6.5 -2.5M762.4 500.1l3.5 22.7M762.4 500.1l6.5 -2.5M762.8 503l6.5 -2.5M808.7 498.3l3.5 22.7M808.7 498.3l6.5 -2.5M809.2 501.3l6.5 -2.5M1075.2 502.2l19.8 -9.5M1075.2 502.2l-2.5 -5M1077.3 501.2l-2.5 -5M1123.2 501.5l19.8 -9.5M1123.2 501.5l-2.5 -5M1125.3 500.5l-2.5 -5M1168.6 501.3l19.8 -9.5M1168.6 501.3l-2.5 -5M1170.6 500.3l-2.5 -5M1213.1 499.6l19.8 -9.5M1213.1 499.6l-2.5 -5M1215.2 498.6l-2.5 -5M1259 502.2l19.8 -9.5M1259 502.2l-2.5 -5M1261 501.2l-2.5 -5M716.6 546.2l4 22.6M716.6 546.2l6.5 -2.5M717.1 549.1l6.5 -2.5M760.8 545.2l4 22.6M760.8 545.2l6.5 -2.5M761.3 548.2l6.5 -2.5M808.3 545.5l4 22.6M808.3 545.5l6.5 -2.5M808.9 548.4l6.5 -2.5M854.1 546.3l4 22.6M854.1 546.3l6.5 -2.5M854.6 549.3l6.5 -2.5M1026.3 550l25.4 -9.2M1026.3 550l-2.5 -5.5M1028.4 549.3l-2.5 -5.5M1030.6 548.5l-2.5 -5.5M1071.2 549.4l25.4 -9.2M1071.2 549.4l-2.5 -5.5M1073.3 548.6l-2.5 -5.5M1075.5 547.8l-2.5 -5.5M1119 549.9l25.4 -9.2M1119 549.9l-2.5 -5.5M1121.2 549.1l-2.5 -5.5M1123.3 548.3l-2.5 -5.5M1163.8 549.7l25.4 -9.2M1163.8 549.7l-2.5 -5.5M1165.9 548.9l-2.5 -5.5M1168.1 548.1l-2.5 -5.5M1211.3 549l25.4 -9.2M1211.3 549l-2.5 -5.5M1213.5 548.2l-2.5 -5.5M1215.6 547.5l-2.5 -5.5M1256.8 548.4l25.4 -9.2M1256.8 548.4l-2.5 -5.5M1258.9 547.7l-2.5 -5.5M1261.1 546.9l-2.5 -5.5M716.2 590.9l4.6 22.5M716.2 590.9l6.5 -2.5M716.8 593.9l6.5 -2.5M760.9 591l4.6 22.5M760.9 591l6.5 -2.5M761.5 594l6.5 -2.5M809.9 591.7l4.6 22.5M809.9 591.7l6.5 -2.5M810.5 594.7l6.5 -2.5M855.3 590.3l4.6 22.5M855.3 590.3l6.5 -2.5M855.9 593.2l6.5 -2.5M932.8 595.6l25.4 -9.2M932.8 595.6l-2.5 -5.5M935 594.8l-2.5 -5.5M937.1 594.1l-2.5 -5.5M939.3 593.3l-2.5 -5.5M978 595.4l25.4 -9.2M978 595.4l-2.5 -5.5M980.1 594.6l-2.5 -5.5M982.3 593.8l-2.5 -5.5M984.4 593l-2.5 -5.5M1024 594.9l25.4 -9.2M1024 594.9l-2.5 -5.5M1026.2 594.1l-2.5 -5.5M1028.3 593.3l-2.5 -5.5M1030.5 592.6l-2.5 -5.5M1071.5 593.8l25.4 -9.2M1071.5 593.8l-2.5 -5.5M1073.7 593l-2.5 -5.5M1075.9 592.2l-2.5 -5.5M1078 591.4l-2.5 -5.5M1118.4 594.6l25.4 -9.2M1118.4 594.6l-2.5 -5.5M1120.6 593.8l-2.5 -5.5M1122.7 593l-2.5 -5.5M1124.9 592.2l-2.5 -5.5M1164.3 595.9l25.4 -9.2M1164.3 595.9l-2.5 -5.5M1166.5 595.1l-2.5 -5.5M1168.7 594.3l-2.5 -5.5M1170.8 593.5l-2.5 -5.5M1209.5 593.1l25.4 -9.2M1209.5 593.1l-2.5 -5.5M1211.6 592.4l-2.5 -5.5M1213.8 591.6l-2.5 -5.5M1216 590.8l-2.5 -5.5M1255.8 595.1l25.4 -9.2M1255.8 595.1l-2.5 -5.5M1258 594.4l-2.5 -5.5M1260.1 593.6l-2.5 -5.5M1262.3 592.8l-2.5 -5.5M715.1 635.4l5.1 22.4M715.1 635.4l6.5 -2.5M715.8 638.3l6.5 -2.5M763.4 636.9l5.1 22.4M763.4 636.9l6.5 -2.5M764.1 639.8l6.5 -2.5M808.2 637.6l5.1 22.4M808.2 637.6l6.5 -2.5M808.9 640.5l6.5 -2.5M854.1 636.9l5.1 22.4M854.1 636.9l6.5 -2.5M854.7 639.8l6.5 -2.5M933.9 641.6l25.4 -9.2M933.9 641.6l-2.5 -5.5M936.1 640.9l-2.5 -5.5M938.2 640.1l-2.5 -5.5M940.4 639.3l-2.5 -5.5M980.3 640.1l25.4 -9.2M980.3 640.1l-2.5 -5.5M982.5 639.3l-2.5 -5.5M984.7 638.5l-2.5 -5.5M986.8 637.7l-2.5 -5.5M1025.6 639.8l25.4 -9.2M1025.6 639.8l-2.5 -5.5M1027.8 639.1l-2.5 -5.5M1030 638.3l-2.5 -5.5M1032.1 637.5l-2.5 -5.5M1070.5 640.4l25.4 -9.2M1070.5 640.4l-2.5 -5.5M1072.7 639.6l-2.5 -5.5M1074.8 638.8l-2.5 -5.5M1077 638l-2.5 -5.5M1118.8 641.4l25.4 -9.2M1118.8 641.4l-2.5 -5.5M1121 640.7l-2.5 -5.5M1123.1 639.9l-2.5 -5.5M1125.3 639.1l-2.5 -5.5M1164.6 641.8l25.4 -9.2M1164.6 641.8l-2.5 -5.5M1166.8 641l-2.5 -5.5M1169 640.2l-2.5 -5.5M1171.1 639.4l-2.5 -5.5M1209.5 639.4l25.4 -9.2M1209.5 639.4l-2.5 -5.5M1211.7 638.6l-2.5 -5.5M1213.9 637.8l-2.5 -5.5M1216 637.1l-2.5 -5.5M1256.3 639.7l25.4 -9.2M1256.3 639.7l-2.5 -5.5M1258.4 638.9l-2.5 -5.5M1260.6 638.2l-2.5 -5.5M1262.7 637.4l-2.5 -5.5M715.1 681.9l5.7 22.3M715.1 681.9l6.5 -2.5M715.9 684.8l6.5 -2.5M762.6 682.2l5.7 22.3M762.6 682.2l6.5 -2.5M763.3 685.1l6.5 -2.5M807.8 683.2l5.7 22.3M807.8 683.2l6.5 -2.5M808.6 686.1l6.5 -2.5M856 682.1l5.7 22.3M856 682.1l6.5 -2.5M856.8 685l6.5 -2.5M934.1 684.8l25.4 -9.2M934.1 684.8l-2.5 -5.5M936.3 684l-2.5 -5.5M938.4 683.3l-2.5 -5.5M940.6 682.5l-2.5 -5.5M979.8 686.4l25.4 -9.2M979.8 686.4l-2.5 -5.5M982 685.6l-2.5 -5.5M984.1 684.8l-2.5 -5.5M986.3 684.1l-2.5 -5.5M1024.8 687.1l25.4 -9.2M1024.8 687.1l-2.5 -5.5M1027 686.3l-2.5 -5.5M1029.2 685.5l-2.5 -5.5M1031.3 684.7l-2.5 -5.5M1070.2 685.1l25.4 -9.2M1070.2 685.1l-2.5 -5.5M1072.3 684.3l-2.5 -5.5M1074.5 683.5l-2.5 -5.5M1076.6 682.8l-2.5 -5.5M1117.7 684.8l25.4 -9.2M1117.7 684.8l-2.5 -5.5M1119.8 684l-2.5 -5.5M1122 683.2l-2.5 -5.5M1124.2 682.4l-2.5 -5.5M1165 685.4l25.4 -9.2M1165 685.4l-2.5 -5.5M1167.2 684.6l-2.5 -5.5M1169.3 683.8l-2.5 -5.5M1171.5 683.1l-2.5 -5.5M1209.1 684.8l25.4 -9.2M1209.1 684.8l-2.5 -5.5M1211.3 684.1l-2.5 -5.5M1213.4 683.3l-2.5 -5.5M1215.6 682.5l-2.5 -5.5M1256.8 686l25.4 -9.2M1256.8 686l-2.5 -5.5M1258.9 685.3l-2.5 -5.5M1261.1 684.5l-2.5 -5.5M1263.3 683.7l-2.5 -5.5" fill="none" stroke="#0a0a0a" stroke-width=".8"/><g font-size="8.800" font-weight="700" fill="#000"><text x="766.5" y="309.5" textLength="19" lengthAdjust="spacingAndGlyphs">1034</text><text x="787.5" y="349.5" textLength="19" lengthAdjust="spacingAndGlyphs">1032</text><text x="813" y="381" textLength="19" lengthAdjust="spacingAndGlyphs">1030</text><text x="813" y="413" textLength="19" lengthAdjust="spacingAndGlyphs">1028</text><text x="783" y="457.5" textLength="19" lengthAdjust="spacingAndGlyphs">1026</text><text x="883" y="426" textLength="19" lengthAdjust="spacingAndGlyphs">1024</text><text x="976" y="426" textLength="19" lengthAdjust="spacingAndGlyphs">1022</text><text x="984" y="455" textLength="19" lengthAdjust="spacingAndGlyphs">1020</text><text x="833" y="489" textLength="19" lengthAdjust="spacingAndGlyphs">1018</text><text x="833" y="575.5" textLength="19" lengthAdjust="spacingAndGlyphs">1018</text><text x="833" y="604" textLength="19" lengthAdjust="spacingAndGlyphs">1020</text><text x="1004" y="570.5" textLength="19" lengthAdjust="spacingAndGlyphs">1018</text><text x="1071" y="529.5" textLength="19" lengthAdjust="spacingAndGlyphs">1016</text><text x="1138" y="540.5" textLength="19" lengthAdjust="spacingAndGlyphs">1018</text><text x="1177" y="596" textLength="19" lengthAdjust="spacingAndGlyphs">1014</text><text x="1196" y="638" textLength="19" lengthAdjust="spacingAndGlyphs">1012</text><text x="1145" y="452" textLength="19" lengthAdjust="spacingAndGlyphs">1016</text><text x="1212" y="420.5" textLength="19" lengthAdjust="spacingAndGlyphs">1012</text><text x="1265" y="315" textLength="19" lengthAdjust="spacingAndGlyphs">1010</text></g></g><rect x="698.500" y="260.500" width="586" height="444" fill="none" stroke="#222" stroke-width="1.600"/><text x="831" y="249.4" font-size="22.5" fill="#2a2a2a" textLength="322" lengthAdjust="spacingAndGlyphs" xml:space="preserve">AT 500hPa, MLSP, 300hPa Jet</text><text x="676" y="263.9" font-size="9.5" fill="#333" textLength="18" lengthAdjust="spacingAndGlyphs">52N</text><path d="M695.500 260.5h3" stroke="#222" stroke-width="1"/><text x="676" y="319.5" font-size="9.5" fill="#333" textLength="18" lengthAdjust="spacingAndGlyphs">50N</text><path d="M695.500 316.1h3" stroke="#222" stroke-width="1"/><text x="676" y="375.1" font-size="9.5" fill="#333" textLength="18" lengthAdjust="spacingAndGlyphs">48N</text><path d="M695.500 371.7h3" stroke="#222" stroke-width="1"/><text x="676" y="430.7" font-size="9.5" fill="#333" textLength="18" lengthAdjust="spacingAndGlyphs">46N</text><path d="M695.500 427.3h3" stroke="#222" stroke-width="1"/><text x="676" y="486.3" font-size="9.5" fill="#333" textLength="18" lengthAdjust="spacingAndGlyphs">44N</text><path d="M695.500 482.9h3" stroke="#222" stroke-width="1"/><text x="676" y="541.9" font-size="9.5" fill="#333" textLength="18" lengthAdjust="spacingAndGlyphs">42N</text><path d="M695.500 538.5h3" stroke="#222" stroke-width="1"/><text x="676" y="597.5" font-size="9.5" fill="#333" textLength="18" lengthAdjust="spacingAndGlyphs">40N</text><path d="M695.500 594.1h3" stroke="#222" stroke-width="1"/><text x="676" y="653.1" font-size="9.5" fill="#333" textLength="18" lengthAdjust="spacingAndGlyphs">38N</text><path d="M695.500 649.7h3" stroke="#222" stroke-width="1"/><text x="676" y="708.7" font-size="9.5" fill="#333" textLength="18" lengthAdjust="spacingAndGlyphs">36N</text><path d="M695.500 705.3h3" stroke="#222" stroke-width="1"/><text x="693.8" y="717.2" font-size="9.5" fill="#333" textLength="11.5" lengthAdjust="spacingAndGlyphs">2E</text><path d="M699.5 705v3" stroke="#222" stroke-width="1"/><text x="741.5" y="717.2" font-size="9.5" fill="#333" textLength="11.5" lengthAdjust="spacingAndGlyphs">4E</text><path d="M747.2 705v3" stroke="#222" stroke-width="1"/><text x="789.2" y="717.2" font-size="9.5" fill="#333" textLength="11.5" lengthAdjust="spacingAndGlyphs">6E</text><path d="M795 705v3" stroke="#222" stroke-width="1"/><text x="837" y="717.2" font-size="9.5" fill="#333" textLength="11.5" lengthAdjust="spacingAndGlyphs">8E</text><path d="M842.8 705v3" stroke="#222" stroke-width="1"/><text x="881.8" y="717.2" font-size="9.5" fill="#333" textLength="17.5" lengthAdjust="spacingAndGlyphs">10E</text><path d="M890.5 705v3" stroke="#222" stroke-width="1"/><text x="929.5" y="717.2" font-size="9.5" fill="#333" textLength="17.5" lengthAdjust="spacingAndGlyphs">12E</text><path d="M938.2 705v3" stroke="#222" stroke-width="1"/><text x="977.2" y="717.2" font-size="9.5" fill="#333" textLength="17.5" lengthAdjust="spacingAndGlyphs">14E</text><path d="M986 705v3" stroke="#222" stroke-width="1"/><text x="1025" y="717.2" font-size="9.5" fill="#333" textLength="17.5" lengthAdjust="spacingAndGlyphs">16E</text><path d="M1033.8 705v3" stroke="#222" stroke-width="1"/><text x="1072.8" y="717.2" font-size="9.5" fill="#333" textLength="17.5" lengthAdjust="spacingAndGlyphs">18E</text><path d="M1081.5 705v3" stroke="#222" stroke-width="1"/><text x="1120.5" y="717.2" font-size="9.5" fill="#333" textLength="17.5" lengthAdjust="spacingAndGlyphs">20E</text><path d="M1129.2 705v3" stroke="#222" stroke-width="1"/><text x="1168.2" y="717.2" font-size="9.5" fill="#333" textLength="17.5" lengthAdjust="spacingAndGlyphs">22E</text><path d="M1177 705v3" stroke="#222" stroke-width="1"/><text x="1216" y="717.2" font-size="9.5" fill="#333" textLength="17.5" lengthAdjust="spacingAndGlyphs">24E</text><path d="M1224.8 705v3" stroke="#222" stroke-width="1"/><text x="1263.8" y="717.2" font-size="9.5" fill="#333" textLength="17.5" lengthAdjust="spacingAndGlyphs">26E</text><path d="M1272.5 705v3" stroke="#222" stroke-width="1"/><g transform="rotate(-90 650.800 352)"><text x="650.8" y="352" font-size="11.5" fill="#6a6a6a" textLength="71" lengthAdjust="spacingAndGlyphs" xml:space="preserve">run:  00z</text></g><g transform="rotate(-90 670.500 351)"><text x="670.5" y="351" font-size="11.5" fill="#6a6a6a" textLength="82" lengthAdjust="spacingAndGlyphs" xml:space="preserve">step: +96h</text></g><g transform="rotate(-90 666.500 575)"><text x="666.5" y="575" font-size="22.5" fill="#2a2a2a" textLength="183" lengthAdjust="spacingAndGlyphs">WRF-NMM 12km</text></g><text x="642.8" y="728.8" font-size="10.3" fill="#3a3a3a" textLength="147" lengthAdjust="spacingAndGlyphs">CROMETEO WRF 2014.10c</text><text x="642.8" y="740.5" font-size="10.3" fill="#3a3a3a" textLength="113.2" lengthAdjust="spacingAndGlyphs">www.meteoadriatic.net</text><text x="642.8" y="749.8" font-size="10.3" fill="#3a3a3a" textLength="86" lengthAdjust="spacingAndGlyphs">www.crometeo.hr</text><text x="828.7" y="731" font-size="10.3" fill="#3a3a3a" textLength="113.5" lengthAdjust="spacingAndGlyphs">Barbs are only drawn</text><text x="828.7" y="740.5" font-size="10.3" fill="#3a3a3a" textLength="120.5" lengthAdjust="spacingAndGlyphs">where jet speed &gt;50kt</text><text x="1018" y="736" font-size="15" fill="#2a2a2a" textLength="227.7" lengthAdjust="spacingAndGlyphs">valid: 00Z, Tue, 30DEC2014</text><text x="1148.5" y="749.6" font-size="9.5" fill="#151515" textLength="101" lengthAdjust="spacingAndGlyphs" font-weight="700">init: 00z, 26.12.2014</text><path d="M1318.200 265.600L1325 280H1311.500z" fill="#c00068" stroke="#333" stroke-width=".5"/><rect x="1311.500" y="280" width="13.500" height="13.600" fill="#b4003c"/><path d="M1311.500 280h13.500" stroke="#222" stroke-width=".8"/><text x="1328.3" y="283.6" font-size="9.5" fill="#333" textLength="19" lengthAdjust="spacingAndGlyphs">600</text><rect x="1311.500" y="293.5" width="13.500" height="13.600" fill="#a80024"/><path d="M1311.500 293.5h13.500" stroke="#222" stroke-width=".8"/><text x="1328.3" y="297.1" font-size="9.5" fill="#333" textLength="19" lengthAdjust="spacingAndGlyphs">596</text><rect x="1311.500" y="307" width="13.500" height="13.600" fill="#b01a1e"/><path d="M1311.500 307h13.500" stroke="#222" stroke-width=".8"/><text x="1328.3" y="310.6" font-size="9.5" fill="#333" textLength="19" lengthAdjust="spacingAndGlyphs">592</text><rect x="1311.500" y="320.5" width="13.500" height="13.600" fill="#c83222"/><path d="M1311.500 320.5h13.500" stroke="#222" stroke-width=".8"/><text x="1328.3" y="324.1" font-size="9.5" fill="#333" textLength="19" lengthAdjust="spacingAndGlyphs">588</text><rect x="1311.500" y="334" width="13.500" height="13.600" fill="#dc4a24"/><path d="M1311.500 334h13.500" stroke="#222" stroke-width=".8"/><text x="1328.3" y="337.6" font-size="9.5" fill="#333" textLength="19" lengthAdjust="spacingAndGlyphs">584</text><rect x="1311.500" y="347.5" width="13.500" height="13.600" fill="#e66400"/><path d="M1311.500 347.5h13.500" stroke="#222" stroke-width=".8"/><text x="1328.3" y="351.1" font-size="9.5" fill="#333" textLength="19" lengthAdjust="spacingAndGlyphs">580</text><rect x="1311.500" y="361" width="13.500" height="13.600" fill="#e67e00"/><path d="M1311.500 361h13.500" stroke="#222" stroke-width=".8"/><text x="1328.3" y="364.6" font-size="9.5" fill="#333" textLength="19" lengthAdjust="spacingAndGlyphs">576</text><rect x="1311.500" y="374.5" width="13.500" height="13.600" fill="#ff9600"/><path d="M1311.500 374.5h13.500" stroke="#222" stroke-width=".8"/><text x="1328.3" y="378.1" font-size="9.5" fill="#333" textLength="19" lengthAdjust="spacingAndGlyphs">572</text><rect x="1311.500" y="388" width="13.500" height="13.600" fill="#ffaa00"/><path d="M1311.500 388h13.500" stroke="#222" stroke-width=".8"/><text x="1328.3" y="391.6" font-size="9.5" fill="#333" textLength="19" lengthAdjust="spacingAndGlyphs">568</text><rect x="1311.500" y="401.5" width="13.500" height="13.600" fill="#ffc000"/><path d="M1311.500 401.5h13.500" stroke="#222" stroke-width=".8"/><text x="1328.3" y="405.1" font-size="9.5" fill="#333" textLength="19" lengthAdjust="spacingAndGlyphs">564</text><rect x="1311.500" y="415" width="13.500" height="13.600" fill="#ffd800"/><path d="M1311.500 415h13.500" stroke="#222" stroke-width=".8"/><text x="1328.3" y="418.6" font-size="9.5" fill="#333" textLength="19" lengthAdjust="spacingAndGlyphs">560</text><rect x="1311.500" y="428.5" width="13.500" height="13.600" fill="#ffff00"/><path d="M1311.500 428.5h13.500" stroke="#222" stroke-width=".8"/><text x="1328.3" y="432.1" font-size="9.5" fill="#333" textLength="19" lengthAdjust="spacingAndGlyphs">556</text><rect x="1311.500" y="442" width="13.500" height="13.600" fill="#00e600"/><path d="M1311.500 442h13.500" stroke="#222" stroke-width=".8"/><text x="1328.3" y="445.6" font-size="9.5" fill="#333" textLength="19" lengthAdjust="spacingAndGlyphs">552</text><rect x="1311.500" y="455.5" width="13.500" height="13.600" fill="#00e232"/><path d="M1311.500 455.5h13.500" stroke="#222" stroke-width=".8"/><text x="1328.3" y="459.1" font-size="9.5" fill="#333" textLength="19" lengthAdjust="spacingAndGlyphs">548</text><rect x="1311.500" y="469" width="13.500" height="13.600" fill="#00e254"/><path d="M1311.500 469h13.500" stroke="#222" stroke-width=".8"/><text x="1328.3" y="472.6" font-size="9.5" fill="#333" textLength="19" lengthAdjust="spacingAndGlyphs">544</text><rect x="1311.500" y="482.5" width="13.500" height="13.600" fill="#00e07a"/><path d="M1311.500 482.5h13.500" stroke="#222" stroke-width=".8"/><text x="1328.3" y="486.1" font-size="9.5" fill="#333" textLength="19" lengthAdjust="spacingAndGlyphs">540</text><rect x="1311.500" y="496" width="13.500" height="13.600" fill="#00e0a8"/><path d="M1311.500 496h13.500" stroke="#222" stroke-width=".8"/><text x="1328.3" y="499.6" font-size="9.5" fill="#333" textLength="19" lengthAdjust="spacingAndGlyphs">536</text><rect x="1311.500" y="509.5" width="13.500" height="13.600" fill="#00e4f0"/><path d="M1311.500 509.5h13.500" stroke="#222" stroke-width=".8"/><text x="1328.3" y="513.1" font-size="9.5" fill="#333" textLength="19" lengthAdjust="spacingAndGlyphs">532</text><rect x="1311.500" y="523" width="13.500" height="13.600" fill="#00c2ff"/><path d="M1311.500 523h13.500" stroke="#222" stroke-width=".8"/><text x="1328.3" y="526.6" font-size="9.5" fill="#333" textLength="19" lengthAdjust="spacingAndGlyphs">528</text><rect x="1311.500" y="536.5" width="13.500" height="13.600" fill="#0092ff"/><path d="M1311.500 536.5h13.500" stroke="#222" stroke-width=".8"/><text x="1328.3" y="540.1" font-size="9.5" fill="#333" textLength="19" lengthAdjust="spacingAndGlyphs">524</text><rect x="1311.500" y="550" width="13.500" height="13.600" fill="#0060ff"/><path d="M1311.500 550h13.500" stroke="#222" stroke-width=".8"/><text x="1328.3" y="553.6" font-size="9.5" fill="#333" textLength="19" lengthAdjust="spacingAndGlyphs">520</text><rect x="1311.500" y="563.5" width="13.500" height="13.600" fill="#0032ff"/><path d="M1311.500 563.5h13.500" stroke="#222" stroke-width=".8"/><text x="1328.3" y="567.1" font-size="9.5" fill="#333" textLength="19" lengthAdjust="spacingAndGlyphs">516</text><rect x="1311.500" y="577" width="13.500" height="13.600" fill="#3200ff"/><path d="M1311.500 577h13.500" stroke="#222" stroke-width=".8"/><text x="1328.3" y="580.6" font-size="9.5" fill="#333" textLength="19" lengthAdjust="spacingAndGlyphs">512</text><rect x="1311.500" y="590.5" width="13.500" height="13.600" fill="#6400ff"/><path d="M1311.500 590.5h13.500" stroke="#222" stroke-width=".8"/><text x="1328.3" y="594.1" font-size="9.5" fill="#333" textLength="19" lengthAdjust="spacingAndGlyphs">508</text><rect x="1311.500" y="604" width="13.500" height="13.600" fill="#9600ff"/><path d="M1311.500 604h13.500" stroke="#222" stroke-width=".8"/><text x="1328.3" y="607.6" font-size="9.5" fill="#333" textLength="19" lengthAdjust="spacingAndGlyphs">504</text><rect x="1311.500" y="617.5" width="13.500" height="13.600" fill="#c800ff"/><path d="M1311.500 617.5h13.500" stroke="#222" stroke-width=".8"/><text x="1328.3" y="621.1" font-size="9.5" fill="#333" textLength="19" lengthAdjust="spacingAndGlyphs">500</text><rect x="1311.500" y="631" width="13.500" height="13.600" fill="#ff00ff"/><path d="M1311.500 631h13.500" stroke="#222" stroke-width=".8"/><text x="1328.3" y="634.6" font-size="9.5" fill="#333" textLength="19" lengthAdjust="spacingAndGlyphs">496</text><rect x="1311.500" y="644.5" width="13.500" height="13.600" fill="#c000c0"/><path d="M1311.500 644.5h13.500" stroke="#222" stroke-width=".8"/><text x="1328.3" y="648.1" font-size="9.5" fill="#333" textLength="19" lengthAdjust="spacingAndGlyphs">492</text><rect x="1311.500" y="658" width="13.500" height="13.600" fill="#900090"/><path d="M1311.500 658h13.500" stroke="#222" stroke-width=".8"/><text x="1328.3" y="661.6" font-size="9.5" fill="#333" textLength="19" lengthAdjust="spacingAndGlyphs">488</text><rect x="1311.500" y="671.5" width="13.500" height="13.600" fill="#5c005c"/><path d="M1311.500 671.5h13.500" stroke="#222" stroke-width=".8"/><text x="1328.3" y="675.1" font-size="9.5" fill="#333" textLength="19" lengthAdjust="spacingAndGlyphs">484</text><text x="1328.3" y="688.6" font-size="9.5" fill="#333" textLength="19" lengthAdjust="spacingAndGlyphs">480</text><path d="M1311.500 685H1325L1318.200 698z" fill="#3c003c" stroke="#222" stroke-width=".6"/><path d="M1311.500 280V685M1325 280V685" stroke="#555" stroke-width=".8"/><text x="1326" y="701.3" font-size="9.5" fill="#111" textLength="21" lengthAdjust="spacingAndGlyphs" font-weight="700">dam</text></svg>
<div style="left:632px;top:752px;width:720px;height:44px;background:#f0f0f0;"></div>
<span class="t" style='left:934.6px;top:768.38px;font-size:12.5px;color:#9a9a9a;font-style:italic;transform:scaleX(0.9185);'>kretanje ciklona Nićifor</span>
<span class="t" style='left:632px;top:815.10px;font-size:18px;color:#777;transform:scaleX(0.9390);'>Na očekivanoj karti sinoptičke situacije za nedelju možemo primetiti formiranje snažnog</span>
<span class="t" style='left:632px;top:843.10px;font-size:18px;color:#777;transform:scaleX(0.9276);'>anticiklona iznad zapadnih obala Atlantika (takozvani blok). U isto vreme zajedno sa ciklonom u</span>
<span class="t" style='left:632px;top:871.10px;font-size:18px;color:#777;transform:scaleX(0.9299);'>Jadranskom moru to otvara put za prodor polarnog vazduha sa severoistoka Evrope.</span>
<svg style="left:632px;top:912px" width="720" height="86" viewBox="632 912 720 86" font-family="'Liberation Sans',sans-serif"><defs><clipPath id="mc"><rect x="632" y="912" width="720" height="86"/></clipPath><filter id="mb" filterUnits="userSpaceOnUse" x="600" y="900" width="780" height="110"><feGaussianBlur stdDeviation="1.200"/></filter></defs><g clip-path="url(#mc)"><rect x="632" y="912" width="720" height="90" fill="#5fc6e2"/><g filter="url(#mb)"><path d="M632 960h116v40H632z" fill="#4a9f86"/><path d="M664 964c4-2 8 0 8 6 0 5 2 10-2 14-4 2-6-2-6-8 0-4-2-8 0-12z" fill="#5fc6e2"/><path d="M636 990c6-4 14-6 22-4 4 2 4 8 2 14h-26z" fill="#5fc6e2"/><path d="M690 961h30c-4 6-10 8-18 8-6 0-10-4-12-8z" fill="#5fc6e2"/><path d="M716 976c6-4 14-2 18 4 2 6 0 14-2 20h-14c-4-8-6-16-2-24z" fill="#5fc6e2"/><path d="M690 984c4-2 8 0 8 6l-2 10h-8c-2-6-2-12 2-16z" fill="#5fc6e2"/><path d="M742 961h110c4 8 2 18-2 26-2 5-6 8-8 12h-86c-6-4-14-8-16-16-2-8 0-16 2-22z" fill="#4a9f86"/><path d="M752 961h96c2 8 0 16-4 24-2 4-6 10-10 14h-60c-8-2-16-6-20-14-4-8-4-16-2-24z" fill="#c4b676"/><path d="M898 912h26c4 6 2 12-2 16 4 4 6 10 2 14-4 3-8 0-12-4-4-4-8-8-10-14-2-4-4-8-4-12z" fill="#4a9f86"/><path d="M1040 912h312v86h-386c2-6 6-10 6-16 0-8-6-14-4-22 2-10 12-16 20-22 8-6 12-14 22-18 6-3 14-2 20-6z" fill="#4a9f86"/><path d="M1028 932c4-6 8-12 6-18 6-2 10 2 10 8 4-2 10 0 10 6 4 2 4 8-2 10-6 2-10 0-14 4-4 3-10 2-10-2z" fill="#5fc6e2"/><path d="M1014 984c2-4 8-6 12-2 3 4 2 10 0 16h-12c-2-4-2-10 0-14z" fill="#5fc6e2"/><path d="M1050 916c-8 2-14 6-20 4 2 6 0 12-4 16 6 2 10-2 14-4 2 4 8 4 12 2 4-2 4-8 0-10 2-4 0-6-2-8z" fill="#5fc6e2"/><path d="M990 912h52c-8 6-18 6-24 12-6 5-12 10-20 12-4 1-6 4-8 6z" fill="#5fc6e2"/><path d="M1066 998l10-14 4 2-8 12z" fill="#5fc6e2"/><path d="M1216 998c4-6 8-10 8-16 4-2 6 4 4 8 2 2 4 6 2 8z" fill="#5fc6e2"/><path d="M1254 998c2-6 8-10 14-12 8-3 14-10 22-8 6 2 4 12 2 20z" fill="#5fc6e2"/><path d="M1352 916v82h-56c2-8 0-16-6-22 0-8-4-14-10-20-2-10 4-20 12-26 8-6 18-4 24-12 6-6 16-8 24-6 4 1 8 2 12 4z" fill="#c4b676"/><path d="M1300 934c8-6 14-12 22-14M1286 948c10-4 22-2 30 6" stroke="#e6dca8" stroke-width="3" fill="none" opacity=".8"/></g><path d="M632 980c20-4 40-14 60-20M650 998c20-10 40-20 56-34M700 998c6-14 12-24 26-34M742 998c-2-14 10-26 28-26s36 12 42 26M752 998c4-10 14-16 26-14 12 2 18 8 20 14M770 961c26 4 52 10 60 37M840 961c10 8 12 24 8 37M860 998c20-8 60-20 76-40 10-12 8-32 4-46M898 998c10-6 30-14 40-14M966 912c-6 16 4 30 20 36 18 6 36 4 48-2 14-8 28-20 50-34M950 940c4-8 2-14-4-18M958 980c2 8 4 12 0 18M1040 998c-4-14 8-28 24-30 16-2 26 14 28 30M1086 998c4-22 10-46 18-60M1108 912c0 24 6 50 22 66 12 10 26 2 38-8 20-18 36-34 44-58M1144 912c8 12 24 18 44 14 16-4 30-10 40-14M1150 998c8-30 26-56 50-70 30-16 60-14 78-30 6-6 10-12 12-16M1176 998c8-26 30-46 60-52 16-4 34-2 46 0M1200 998c10-16 30-26 50-22 10 2 16 10 18 22M1218 998c4-8 14-12 24-10 8 2 12 6 14 10M1258 912c2 24-2 56-10 86M1264 998c8-6 10-16 8-26-2-12 4-24 12-34 10-12 24-18 34-22 10-4 24-10 34-14M1296 998c-4-14 2-28 12-38 12-10 28-14 40-18M1104 926c60 10 180 30 240 46M1000 956c40 12 90 30 120 42" fill="none" stroke="#26342f" stroke-width=".8" opacity=".85"/><path d="M780 1000c10-8 40-10 66-10 14 0 22 6 26 10M1070 998c30-14 50-40 60-86M1160 912c8 20 4 50 0 86M1282 912c10 14 4 30-10 44-6 8-6 14 0 18M1290 952c10-12 22-14 30-6 12 10 30 8 38 14M1300 998c-4-14 0-24 12-26" fill="none" stroke="#e0523a" stroke-width=".9" stroke-dasharray="5 3"/><path d="M1211 916c-6 20-16 36-18 54-1 10 0 20 2 28M1250 918c-8 12-14 20-24 26-10 6-18 18-20 30-2 8-2 16-2 24" fill="none" stroke="#f03010" stroke-width="1.600"/><circle cx="1205" cy="928" r="3.600" fill="#f03010"/><circle cx="1194" cy="952" r="3.600" fill="#f03010"/><circle cx="1189" cy="978" r="3.600" fill="#f03010"/><circle cx="1240" cy="931" r="3.600" fill="#f03010"/><circle cx="1219" cy="945" r="3.600" fill="#f03010"/><circle cx="1203" cy="965" r="3.600" fill="#f03010"/><circle cx="1200" cy="992" r="3.600" fill="#f03010"/><path d="M1218 998c8-6 24-8 36-2" fill="none" stroke="#0a30f0" stroke-width="1.600"/><path d="M1220 984l8 12-12 2zM1252 982l0 14-10-4z" fill="#0a30f0"/><path d="M1076 998l4-12" stroke="#111" stroke-width="1.500"/><text x="934.500" y="937" font-size="14" fill="#fff">H</text><text x="923" y="957" font-size="15" textLength="41" lengthAdjust="spacingAndGlyphs" fill="#fff">1023</text><text x="1013.500" y="946" font-size="14" fill="#fff">L</text><text x="998.500" y="964.500" font-size="15" textLength="37" lengthAdjust="spacingAndGlyphs" fill="#fff">1011</text><text x="1306" y="975" font-size="14" fill="#fff">H</text><text x="1292.500" y="993" font-size="15" textLength="37.500" lengthAdjust="spacingAndGlyphs" fill="#fff">1021</text><text x="952" y="997" font-size="14" fill="#fff" transform="translate(0 8)">L</text><path d="M923.5 924.5l5 5m0-5l-5 5" stroke="#fff" stroke-width="1"/><path d="M991.5 934.5l5 5m0-5l-5 5" stroke="#fff" stroke-width="1"/><path d="M1334.5 963.5l5 5m0-5l-5 5" stroke="#fff" stroke-width="1"/><path d="M965.5 986.5l5 5m0-5l-5 5" stroke="#fff" stroke-width="1"/><text x="955" y="922" font-size="10" fill="#8fa0a6">75</text><text x="1089" y="923" font-size="10" fill="#8aa39a">45</text><text x="1254" y="923" font-size="10" fill="#8aa39a">45</text><text x="1342" y="951" font-size="10" fill="#b0a888" transform="rotate(90 1342 951)">45</text><text x="1168" y="987" font-size="10" fill="#0a0a0a" transform="rotate(-62 1168 987)">1012</text><text x="1150" y="998" font-size="10" fill="#0a0a0a" transform="rotate(-62 1150 998)">16</text><text x="758" y="996" font-size="7" fill="#e01010" font-weight="700" transform="rotate(-30 758 996)">510</text><rect x="683" y="912" width="216" height="49" fill="#fff" stroke="#111" stroke-width="1"/><rect x="632" y="912" width="52" height="49" fill="#000"/><path d="M638 924.5c6-4 10-4 16-1.500s10 2.500 16-.5c4-2 6-2.500 9-2.500v5c-4 0-6 1-9 2.500-6 3-10 3-16 .5s-10-2-16 2z" fill="#c6f02c"/><path d="M638 930.7c6-4 10-4 16-1.500s10 2.500 16-.5c4-2 6-2.500 9-2.500v5c-4 0-6 1-9 2.500-6 3-10 3-16 .5s-10-2-16 2z" fill="#c6f02c"/><path d="M638 936.9c6-4 10-4 16-1.500s10 2.500 16-.5c4-2 6-2.500 9-2.500v5c-4 0-6 1-9 2.500-6 3-10 3-16 .5s-10-2-16 2z" fill="#c6f02c"/><path d="M638 943.1c6-4 10-4 16-1.500s10 2.500 16-.5c4-2 6-2.500 9-2.500v5c-4 0-6 1-9 2.500-6 3-10 3-16 .5s-10-2-16 2z" fill="#c6f02c"/><text x="637.500" y="955.500" font-size="8.500" font-weight="700" fill="#fff" textLength="41.500" lengthAdjust="spacingAndGlyphs">Met Office</text><path d="M634 960.500h47" stroke="#bbb" stroke-width=".8"/><text x="684.500" y="933.600" font-size="13" fill="#111" textLength="113.300" lengthAdjust="spacingAndGlyphs">Forecast chart (T+48)</text><text x="684.500" y="947" font-size="13" fill="#111" textLength="178" lengthAdjust="spacingAndGlyphs">Valid 0000 UTC Sun 28 DEC 2014</text></g><path d="M632.500 998V912.500H1351.500V998" fill="none" stroke="#0a0a0a" stroke-width="1.200"/></svg>
<svg style="left:1412px;top:134px" width="230" height="17" viewBox="0 0 230 17"><rect width="230" height="9" fill="#f4f4f4"/><rect x="79" width="43" height="9" fill="#d6d6d6"/><rect x="127" width="17" height="9" fill="#f0641e"/><rect x="144" width="10" height="9" fill="#3cb44a"/><rect x="154" width="11" height="9" fill="#e8d020"/><rect x="134" y="2" width="8" height="5" fill="#f8b428"/><rect x="176" width="29" height="6" fill="#1a1712"/><rect x="176" y="6" width="29" height="2" fill="#8a8a8a"/><rect x="96" y="2" width="9" height="6" rx="1" fill="#f2f2f2"/><rect y="9" width="230" height="8" fill="#000"/></svg>
<svg style="left:1412px;top:158px" width="230" height="133" viewBox="0 0 230 133" font-family="'Liberation Sans',sans-serif"><defs><clipPath id="vc1"><rect width="230" height="133"/></clipPath><linearGradient id="sky" x1="0" y1="0" x2="0" y2="1"><stop offset="0" stop-color="#4a63d6"/><stop offset=".55" stop-color="#4257c4"/><stop offset="1" stop-color="#3242a8"/></linearGradient><radialGradient id="glow" cx=".68" cy=".3" r=".5"><stop offset="0" stop-color="#7d9cff" stop-opacity=".95"/><stop offset=".5" stop-color="#5c7af0" stop-opacity=".5"/><stop offset="1" stop-color="#4a63d6" stop-opacity="0"/></radialGradient><radialGradient id="drk" cx=".95" cy=".85" r=".5"><stop offset="0" stop-color="#1c2a7a" stop-opacity=".85"/><stop offset="1" stop-color="#1c2a7a" stop-opacity="0"/></radialGradient><filter id="lg" x="-1" y="-.2" width="3" height="1.400"><feGaussianBlur stdDeviation="1.600"/></filter><linearGradient id="tb1" x1="0" y1="0" x2="0" y2="1"><stop offset="0" stop-color="#000" stop-opacity=".78"/><stop offset=".85" stop-color="#000" stop-opacity=".72"/><stop offset="1" stop-color="#000" stop-opacity=".6"/></linearGradient></defs><g clip-path="url(#vc1)"><rect width="230" height="133" fill="url(#sky)"/><rect width="230" height="133" fill="url(#glow)"/><rect width="230" height="133" fill="url(#drk)"/><path d="M170 95c10-4 22-8 36-6 10 1 18-2 24-6v30c-20 4-44 2-60-6z" fill="#3a4fb4" opacity=".5"/><path d="M151 28l5 9-1 7 4 8 2 10-1 6 3 8 1 9-1 7 3 9 2 8 1 8 3 9 2 9" fill="none" stroke="#a9c2ff" stroke-width="5" filter="url(#lg)"/><path d="M151 28l5 9-1 7 4 8 2 10-1 6 3 8 1 9-1 7 3 9 2 8 1 8 3 9 2 9" fill="none" stroke="#fff" stroke-width="2.200" stroke-linejoin="round"/><path d="M0 124l22 3 36 6H0z" fill="#1a1730"/><rect width="230" height="30" fill="#0a0e28" opacity=".93"/><text x="12" y="18.8" font-size="13.500" fill="#eee" textLength="190.8" lengthAdjust="spacingAndGlyphs">Lightning in Belgrade (30. 7. 20...</text><g fill="#f4f4f4" stroke="#f4f4f4"><circle cx="221.500" cy="15" r="2.300"/><circle cx="230" cy="10" r="2.300"/><circle cx="230" cy="20.500" r="2.300"/><path d="M221.500 15l8.500-5M221.500 15l8.500 5.500" stroke-width="1.800" fill="none"/></g><rect x="98.600" y="52.400" width="41.400" height="29" rx="6.500" fill="#1f2126" opacity=".93"/><path d="M115 59.500l11.500 7.400-11.500 7.400z" fill="#fff"/></g></svg>
<svg style="left:1412px;top:298px" width="230" height="133" viewBox="0 0 230 133" font-family="'Liberation Sans',sans-serif"><defs><clipPath id="vc2"><rect width="230" height="133"/></clipPath><filter id="nz" x="0" y="0" width="1" height="1"><feTurbulence type="fractalNoise" baseFrequency=".9" numOctaves="2" seed="3"/><feColorMatrix values="0 0 0 0 .2  0 0 0 0 .17  0 0 0 0 .13  0 0 0 .9 -.3"/></filter><linearGradient id="tb2" x1="0" y1="0" x2="0" y2="1"><stop offset="0" stop-color="#000" stop-opacity=".78"/><stop offset=".85" stop-color="#000" stop-opacity=".72"/><stop offset="1" stop-color="#000" stop-opacity=".6"/></linearGradient></defs><g clip-path="url(#vc2)"><rect width="230" height="133" fill="#15120d"/><rect y="30" width="230" height="25" fill="#221f14"/><path d="M8 31h9l-5 24h-9z" fill="#8a6a5a" opacity=".85"/><path d="M29 31h9l-5 24h-9z" fill="#7c7a40" opacity=".85"/><path d="M51 31h9l-5 24h-9z" fill="#5f7a3a" opacity=".85"/><path d="M72 31h9l-5 24h-9z" fill="#7f9a44" opacity=".85"/><path d="M92 31h9l-5 24h-9z" fill="#6a8a40" opacity=".85"/><path d="M112 31h9l-5 24h-9z" fill="#55703a" opacity=".85"/><path d="M132 31h9l-5 24h-9z" fill="#4a5a30" opacity=".85"/><path d="M152 31h9l-5 24h-9z" fill="#3a4428" opacity=".85"/><path d="M174 31h9l-5 24h-9z" fill="#3a3a22" opacity=".85"/><path d="M194 31h9l-5 24h-9z" fill="#33331f" opacity=".85"/><rect y="54" width="230" height="1.500" fill="#4a4a3a" opacity=".8"/><rect x="163" y="55" width="1.500" height="78" fill="#3a3a36" opacity=".8"/><rect y="0" width="230" height="133" filter="url(#nz)" opacity=".5"/><rect width="230" height="30" fill="#17140a" opacity=".93"/><rect y="29" width="230" height="1.200" fill="#5a5218" opacity=".7"/><text x="12" y="18.9" font-size="13.500" fill="#eee" textLength="195.5" lengthAdjust="spacingAndGlyphs">Udar munje - Beograd (30. 7. 20...</text><g fill="#f4f4f4" stroke="#f4f4f4"><circle cx="221.500" cy="15" r="2.300"/><circle cx="230" cy="10" r="2.300"/><circle cx="230" cy="20.500" r="2.300"/><path d="M221.500 15l8.500-5M221.500 15l8.500 5.500" stroke-width="1.800" fill="none"/></g><rect x="98.600" y="52.400" width="41.400" height="29" rx="6.500" fill="#1f2126" opacity=".93"/><path d="M115 59.500l11.500 7.400-11.500 7.400z" fill="#fff"/></g></svg>
<svg style="left:1412px;top:488px" width="160" height="510" viewBox="0 0 160 510" font-family="'Liberation Sans',sans-serif"><defs><linearGradient id="adbg" x1="0" y1="0" x2="1" y2="0"><stop offset="0" stop-color="#ffef9e"/><stop offset=".2" stop-color="#fff6c4"/><stop offset=".8" stop-color="#fff6c4"/><stop offset="1" stop-color="#ffef9e"/></linearGradient><radialGradient id="coin" cx=".4" cy=".3" r=".75"><stop offset="0" stop-color="#fff6a0"/><stop offset=".45" stop-color="#ffd428"/><stop offset="1" stop-color="#f0a010"/></radialGradient><pattern id="st" width="7" height="7" patternUnits="userSpaceOnUse" patternTransform="rotate(-50)"><rect width="7" height="7" fill="#fff" fill-opacity="0"/><rect width="1.400" height="7" fill="#fff" fill-opacity=".17"/></pattern><filter id="sh" x="-.1" y="-.1" width="1.200" height="1.300"><feGaussianBlur stdDeviation="1.500"/></filter><filter id="ts" x="-.1" y="-.2" width="1.200" height="1.500"><feGaussianBlur stdDeviation=".9"/></filter></defs><rect width="160" height="510" fill="url(#adbg)"/><rect x="21.4" y="15.4" width="120.3" height="84.2" rx="5" fill="#7a6a30" opacity=".45" filter="url(#sh)"/><rect x="20.4" y="12.4" width="120.3" height="84.2" rx="4.500" fill="#3450b8"/><rect x="20.4" y="12.4" width="120.3" height="80.2" rx="4.500" fill="#4a6de2"/><rect x="20.4" y="12.4" width="120.3" height="80.2" rx="4.500" fill="url(#st)"/><rect x="22.4" y="13.9" width="116.3" height="3" rx="1.500" fill="#fff" opacity=".22"/><circle cx="80.600" cy="32.0" r="15.600" fill="#5a3a10" opacity=".35" filter="url(#sh)"/><circle cx="80.600" cy="31.0" r="15.300" fill="url(#coin)"/><text x="80.600" y="38.6" font-size="22" font-weight="700" fill="#3a1206" text-anchor="middle">1</text><text x="58.6" y="67.8" font-size="17.5" font-weight="700" fill="#3a3a3a" opacity=".6" filter="url(#ts)" textLength="46" lengthAdjust="spacingAndGlyphs">Free</text><text x="57.6" y="66.3" font-size="17.5" font-weight="700" fill="#fff" textLength="46" lengthAdjust="spacingAndGlyphs">Free</text><text x="23.8" y="84.4" font-size="13.5" font-weight="700" fill="#3a3a3a" opacity=".6" filter="url(#ts)" textLength="115.6" lengthAdjust="spacingAndGlyphs">Homework Help</text><text x="22.8" y="82.9" font-size="13.5" font-weight="700" fill="#fff" textLength="115.6" lengthAdjust="spacingAndGlyphs">Homework Help</text><rect x="21.4" y="111.7" width="120.3" height="84.2" rx="5" fill="#7a6a30" opacity=".45" filter="url(#sh)"/><rect x="20.4" y="108.7" width="120.3" height="84.2" rx="4.500" fill="#b030c0"/><rect x="20.4" y="108.7" width="120.3" height="80.2" rx="4.500" fill="#dc48ea"/><rect x="20.4" y="108.7" width="120.3" height="80.2" rx="4.500" fill="url(#st)"/><rect x="22.4" y="110.2" width="116.3" height="3" rx="1.500" fill="#fff" opacity=".22"/><circle cx="80.600" cy="128.3" r="15.600" fill="#5a3a10" opacity=".35" filter="url(#sh)"/><circle cx="80.600" cy="127.3" r="15.300" fill="url(#coin)"/><text x="80.600" y="134.9" font-size="22" font-weight="700" fill="#3a1206" text-anchor="middle">2</text><text x="47.4" y="176.8" font-size="25" font-weight="700" fill="#3a3a3a" opacity=".6" filter="url(#ts)" textLength="68.4" lengthAdjust="spacingAndGlyphs">Math</text><text x="46.4" y="175.3" font-size="25" font-weight="700" fill="#fff" textLength="68.4" lengthAdjust="spacingAndGlyphs">Math</text><rect x="21.4" y="206.5" width="120.3" height="84.2" rx="5" fill="#7a6a30" opacity=".45" filter="url(#sh)"/><rect x="20.4" y="203.5" width="120.3" height="84.2" rx="4.500" fill="#1484c4"/><rect x="20.4" y="203.5" width="120.3" height="80.2" rx="4.500" fill="#1ea6ec"/><rect x="20.4" y="203.5" width="120.3" height="80.2" rx="4.500" fill="url(#st)"/><rect x="22.4" y="205.0" width="116.3" height="3" rx="1.500" fill="#fff" opacity=".22"/><circle cx="80.600" cy="223.1" r="15.600" fill="#5a3a10" opacity=".35" filter="url(#sh)"/><circle cx="80.600" cy="222.1" r="15.300" fill="url(#coin)"/><text x="80.600" y="229.7" font-size="22" font-weight="700" fill="#3a1206" text-anchor="middle">3</text><text x="37.1" y="270.2" font-size="25" font-weight="700" fill="#3a3a3a" opacity=".6" filter="url(#ts)" textLength="89" lengthAdjust="spacingAndGlyphs">English</text><text x="36.1" y="268.7" font-size="25" font-weight="700" fill="#fff" textLength="89" lengthAdjust="spacingAndGlyphs">English</text><rect x="21.4" y="304.6" width="120.3" height="84.2" rx="5" fill="#7a6a30" opacity=".45" filter="url(#sh)"/><rect x="20.4" y="301.6" width="120.3" height="84.2" rx="4.500" fill="#d87408"/><rect x="20.4" y="301.6" width="120.3" height="80.2" rx="4.500" fill="#f8961c"/><rect x="20.4" y="301.6" width="120.3" height="80.2" rx="4.500" fill="url(#st)"/><rect x="22.4" y="303.1" width="116.3" height="3" rx="1.500" fill="#fff" opacity=".22"/><circle cx="80.600" cy="321.2" r="15.600" fill="#5a3a10" opacity=".35" filter="url(#sh)"/><circle cx="80.600" cy="320.2" r="15.300" fill="url(#coin)"/><text x="80.600" y="327.8" font-size="22" font-weight="700" fill="#3a1206" text-anchor="middle">4</text><text x="31.9" y="368.9" font-size="25" font-weight="700" fill="#3a3a3a" opacity=".6" filter="url(#ts)" textLength="99.3" lengthAdjust="spacingAndGlyphs">Science</text><text x="30.9" y="367.4" font-size="25" font-weight="700" fill="#fff" textLength="99.3" lengthAdjust="spacingAndGlyphs">Science</text><rect x="21.4" y="401" width="120.3" height="84.2" rx="5" fill="#7a6a30" opacity=".45" filter="url(#sh)"/><rect x="20.4" y="398" width="120.3" height="84.2" rx="4.500" fill="#389434"/><rect x="20.4" y="398" width="120.3" height="80.2" rx="4.500" fill="#4db848"/><rect x="20.4" y="398" width="120.3" height="80.2" rx="4.500" fill="url(#st)"/><rect x="22.4" y="399.5" width="116.3" height="3" rx="1.500" fill="#fff" opacity=".22"/><circle cx="80.600" cy="417.6" r="15.600" fill="#5a3a10" opacity=".35" filter="url(#sh)"/><circle cx="80.600" cy="416.6" r="15.300" fill="url(#coin)"/><text x="80.600" y="424.2" font-size="22" font-weight="700" fill="#3a1206" text-anchor="middle">5</text><text x="33.6" y="464.5" font-size="25" font-weight="700" fill="#3a3a3a" opacity=".6" filter="url(#ts)" textLength="96" lengthAdjust="spacingAndGlyphs">History</text><text x="32.6" y="463.0" font-size="25" font-weight="700" fill="#fff" textLength="96" lengthAdjust="spacingAndGlyphs">History</text><rect x="18.500" y="492.500" width="125" height="60" rx="17" fill="#ffe24a" stroke="#f08a28" stroke-width="2.500"/><rect x="24" y="497" width="114" height="30" rx="13" fill="#fff08a" opacity=".7"/><path d="M.5 510V.5H159.5V510" fill="none" stroke="#000" stroke-width="1"/><rect x="129" y="0" width="15" height="15.500" fill="#d8dadb"/><rect x="144.500" y="0" width="15.500" height="15.500" fill="#d8dadb"/><circle cx="136.500" cy="8" r="5" fill="none" stroke="#1cb4d8" stroke-width="1.100"/><path d="M136.500 7v3.600" stroke="#1cb4d8" stroke-width="1.300"/><circle cx="136.500" cy="5.300" r=".8" fill="#1cb4d8"/><path d="M148.500 4l8 8M156.500 4l-8 8" stroke="#1cb4d8" stroke-width="1.200"/></svg>
<div style="left:0px;top:85px;width:1903px;height:49px;background:#333539;"></div>
<div style="left:1580px;top:85px;width:1px;height:49px;background:#45474c;"></div>
<span class="t" style='left:273px;top:100.75px;font-size:17px;color:#b9b9b9;transform:scaleX(0.8822);'>Vremenska prognoza</span>
<span class="t" style='left:443px;top:100.75px;font-size:17px;color:#ffffff;transform:scaleX(0.8975);'>Meteo blog</span>
<span class="t" style='left:546.3px;top:100.75px;font-size:17px;color:#b9b9b9;transform:scaleX(0.9005);'>Meteopedia</span>
<span class="t" style='left:653.8px;top:100.75px;font-size:17px;color:#b9b9b9;transform:scaleX(0.8957);'>Forum</span>
<span class="t" style='left:726px;top:100.75px;font-size:17px;color:#b9b9b9;transform:scaleX(0.8610);'>Radarska slika</span>
<span class="t" style='left:850px;top:100.75px;font-size:17px;color:#b9b9b9;transform:scaleX(0.9054);'>Trenutne temperature</span>
<span class="t" style='left:1026.5px;top:100.75px;font-size:17px;color:#b9b9b9;transform:scaleX(0.8796);'>Web kamere</span>
<svg style="left:1600px;top:99px" width="20" height="21" viewBox="0 0 20 21"><circle cx="8.500" cy="9" r="5.600" fill="none" stroke="#fff" stroke-width="2.800"/><path d="M12.800 13.500l4.600 4.800" stroke="#fff" stroke-width="3.200" stroke-linecap="round"/></svg>
<div style="left:0px;top:0px;width:1920px;height:25px;background:linear-gradient(180deg,rgba(255,255,255,.04) 0,rgba(255,255,255,0) 40%,rgba(0,0,0,.10) 100%),linear-gradient(90deg,#5079ad 0,#2a5594 1%,#1b4b93 3%,#1a4a92 60%,#1c4a8a 88%,#2d568c 94%,#5c7fa9 98%,#7a97bb 100%);"></div>
<div style="left:0px;top:24px;width:1920px;height:61px;background:linear-gradient(180deg,#fbfbfb 0,#f4f4f4 10%,#e9e9e9 45%,#e2e2e2 60%,#e1e1e1 80%,#dcdcdc 100%);border-top:1px solid #9a9da3;"></div>
<svg style="left:0;top:0" width="1920" height="27" viewBox="0 0 1920 27"><defs><linearGradient id="tg" x1="0" y1="0" x2="0" y2="1"><stop offset="0" stop-color="#bac6d9"/><stop offset=".5" stop-color="#b1bed4"/><stop offset="1" stop-color="#a8b7cf"/></linearGradient><linearGradient id="ta" x1="0" y1="0" x2="0" y2="1"><stop offset="0" stop-color="#ffffff"/><stop offset="1" stop-color="#fafafa"/></linearGradient></defs><path d="M1620.1999999999998 24.5C1623.6999999999998 23.5 1624.6999999999998 21.5 1626.1999999999998 17.5L1629.4999999999998 6.5C1630.6999999999998 3.0 1632.1999999999998 1.5 1634.6999999999998 1.5H1750.1999999999998C1752.6999999999998 1.5 1754.1999999999998 3.0 1755.3999999999999 6.5L1758.6999999999998 17.5C1760.1999999999998 21.5 1761.1999999999998 23.5 1764.6999999999998 24.5Z" fill="url(#tg)" stroke="#7f8ea6" stroke-width="1"/><path d="M1485.35 24.5C1488.85 23.5 1489.85 21.5 1491.35 17.5L1494.6499999999999 6.5C1495.85 3.0 1497.35 1.5 1499.85 1.5H1615.35C1617.85 1.5 1619.35 3.0 1620.55 6.5L1623.85 17.5C1625.35 21.5 1626.35 23.5 1629.85 24.5Z" fill="url(#tg)" stroke="#7f8ea6" stroke-width="1"/><path d="M1350.5 24.5C1354.0 23.5 1355.0 21.5 1356.5 17.5L1359.8 6.5C1361.0 3.0 1362.5 1.5 1365.0 1.5H1480.5C1483.0 1.5 1484.5 3.0 1485.7 6.5L1489.0 17.5C1490.5 21.5 1491.5 23.5 1495.0 24.5Z" fill="url(#tg)" stroke="#7f8ea6" stroke-width="1"/><path d="M1080.8 24.5C1084.3 23.5 1085.3 21.5 1086.8 17.5L1090.1 6.5C1091.3 3.0 1092.8 1.5 1095.3 1.5H1210.8C1213.3 1.5 1214.8 3.0 1216.0 6.5L1219.3 17.5C1220.8 21.5 1221.8 23.5 1225.3 24.5Z" fill="url(#tg)" stroke="#7f8ea6" stroke-width="1"/><path d="M945.9499999999999 24.5C949.4499999999999 23.5 950.4499999999999 21.5 951.9499999999999 17.5L955.2499999999999 6.5C956.4499999999999 3.0 957.9499999999999 1.5 960.4499999999999 1.5H1075.9499999999998C1078.4499999999998 1.5 1079.9499999999998 3.0 1081.1499999999999 6.5L1084.4499999999998 17.5C1085.9499999999998 21.5 1086.9499999999998 23.5 1090.4499999999998 24.5Z" fill="url(#tg)" stroke="#7f8ea6" stroke-width="1"/><path d="M811.0999999999999 24.5C814.5999999999999 23.5 815.5999999999999 21.5 817.0999999999999 17.5L820.3999999999999 6.5C821.5999999999999 3.0 823.0999999999999 1.5 825.5999999999999 1.5H941.0999999999999C943.5999999999999 1.5 945.0999999999999 3.0 946.3 6.5L949.5999999999999 17.5C951.0999999999999 21.5 952.0999999999999 23.5 955.5999999999999 24.5Z" fill="url(#tg)" stroke="#7f8ea6" stroke-width="1"/><path d="M676.25 24.5C679.75 23.5 680.75 21.5 682.25 17.5L685.55 6.5C686.75 3.0 688.25 1.5 690.75 1.5H806.25C808.75 1.5 810.25 3.0 811.45 6.5L814.75 17.5C816.25 21.5 817.25 23.5 820.75 24.5Z" fill="url(#tg)" stroke="#7f8ea6" stroke-width="1"/><path d="M541.4 24.5C544.9 23.5 545.9 21.5 547.4 17.5L550.6999999999999 6.5C551.9 3.0 553.4 1.5 555.9 1.5H671.4C673.9 1.5 675.4 3.0 676.6 6.5L679.9 17.5C681.4 21.5 682.4 23.5 685.9 24.5Z" fill="url(#tg)" stroke="#7f8ea6" stroke-width="1"/><path d="M406.54999999999995 24.5C410.04999999999995 23.5 411.04999999999995 21.5 412.54999999999995 17.5L415.84999999999997 6.5C417.04999999999995 3.0 418.54999999999995 1.5 421.04999999999995 1.5H536.55C539.05 1.5 540.55 3.0 541.75 6.5L545.05 17.5C546.55 21.5 547.55 23.5 551.05 24.5Z" fill="url(#tg)" stroke="#7f8ea6" stroke-width="1"/><path d="M271.7 24.5C275.2 23.5 276.2 21.5 277.7 17.5L281.0 6.5C282.2 3.0 283.7 1.5 286.2 1.5H401.7C404.2 1.5 405.7 3.0 406.9 6.5L410.2 17.5C411.7 21.5 412.7 23.5 416.2 24.5Z" fill="url(#tg)" stroke="#7f8ea6" stroke-width="1"/><path d="M136.85 24.5C140.35 23.5 141.35 21.5 142.85 17.5L146.15 6.5C147.35 3.0 148.85 1.5 151.35 1.5H266.85C269.35 1.5 270.85 3.0 272.05 6.5L275.35 17.5C276.85 21.5 277.85 23.5 281.35 24.5Z" fill="url(#tg)" stroke="#7f8ea6" stroke-width="1"/><path d="M2.0 24.5C5.5 23.5 6.5 21.5 8.0 17.5L11.3 6.5C12.5 3.0 14.0 1.5 16.5 1.5H132.0C134.5 1.5 136.0 3.0 137.2 6.5L140.5 17.5C142.0 21.5 143.0 23.5 146.5 24.5Z" fill="url(#tg)" stroke="#7f8ea6" stroke-width="1"/><path d="M1765.500 6.500h22.500c1.500 0 2.300.6 2.800 1.800l4 9.700c.5 1.300-.2 2-1.500 2h-22.500c-1.500 0-2.300-.6-2.800-1.800l-4-9.700c-.5-1.300.2-2 1.500-2z" fill="#aebcd1" stroke="#5f7ea8" stroke-width=".6"/><rect x="0" y="24" width="1920" height="1" fill="#9a9fa8"/><path d="M1215.6499999999999 25.2C1219.1499999999999 24.2 1220.1499999999999 22.2 1221.6499999999999 18.2L1224.9499999999998 6.5C1226.1499999999999 3.0 1227.6499999999999 1.5 1230.1499999999999 1.5H1345.6499999999999C1348.1499999999999 1.5 1349.6499999999999 3.0 1350.85 6.5L1354.1499999999999 18.2C1355.6499999999999 22.2 1356.6499999999999 24.2 1360.1499999999999 25.2Z" fill="url(#ta)" stroke="#8f98a8" stroke-width="1"/><rect x="1218.6499999999999" y="24" width="138.5" height="2" fill="#fafafa"/></svg>
<svg style="left:17px;top:5px" width="16" height="16" viewBox="0 0 16 16"><rect width="16" height="16" fill="#d9e2ee"/><circle cx="7.5" cy="8" r="6.3" fill="#eef2f8" stroke="#a9b9d0" stroke-width="1.2"/><circle cx="5.5" cy="6.5" r=".8" fill="#9fb0c8"/><circle cx="9.5" cy="6.5" r=".8" fill="#9fb0c8"/><path d="M4.5 9.5Q7.5 12.5 10.5 9.5" fill="none" stroke="#9fb0c8" stroke-width="1"/></svg>
<span class="t" style='left:36.5px;top:7.35px;font-size:12.3px;color:#3c3f58;transform:scaleX(1.0126);'>Admin</span>
<svg style="left:123.5px;top:8.500px" width="9" height="9" viewBox="0 0 9 9"><path d="M1.200 1.200l6.600 6.600M7.800 1.200L1.200 7.800" stroke="#3f444d" stroke-width="1.700"/></svg>
<svg style="left:152px;top:5px" width="16" height="16" viewBox="0 0 16 16"><rect width="16" height="16" fill="#d9e2ee"/><circle cx="7.5" cy="8" r="6.3" fill="#eef2f8" stroke="#a9b9d0" stroke-width="1.2"/><circle cx="5.5" cy="6.5" r=".8" fill="#9fb0c8"/><circle cx="9.5" cy="6.5" r=".8" fill="#9fb0c8"/><path d="M4.5 9.5Q7.5 12.5 10.5 9.5" fill="none" stroke="#9fb0c8" stroke-width="1"/></svg>
<span class="t" style='left:171.5px;top:7.35px;font-size:12.3px;color:#3c3f58;transform:scaleX(0.9795);-webkit-mask-image:linear-gradient(90deg,#000 82%,transparent 100%);mask-image:linear-gradient(90deg,#000 82%,transparent 100%);'>Roditeljski port</span>
<svg style="left:258.4px;top:8.500px" width="9" height="9" viewBox="0 0 9 9"><path d="M1.200 1.200l6.600 6.600M7.800 1.200L1.200 7.800" stroke="#3f444d" stroke-width="1.700"/></svg>
<svg style="left:287px;top:5px" width="16" height="16" viewBox="0 0 16 16"><rect width="16" height="16" fill="#dfe6f1"/><path d="M5 5h6l-6 6.5h6.5M8.5 2.5l1-1" fill="none" stroke="#222" stroke-width="1.5"/></svg>
<span class="t" style='left:306.5px;top:7.35px;font-size:12.3px;color:#3c3f58;-webkit-mask-image:linear-gradient(90deg,#000 82%,transparent 100%);mask-image:linear-gradient(90deg,#000 82%,transparent 100%);'>Noćne avantur</span>
<svg style="left:393.2px;top:8.500px" width="9" height="9" viewBox="0 0 9 9"><path d="M1.200 1.200l6.600 6.600M7.800 1.200L1.200 7.800" stroke="#3f444d" stroke-width="1.700"/></svg>
<svg style="left:422px;top:5px" width="16" height="16" viewBox="0 0 16 16"><rect x="0" y="2" width="16" height="12" rx="3" fill="#c4222a"/><path d="M6 5l5 3-5 3z" fill="#fff"/></svg>
<span class="t" style='left:441.5px;top:7.35px;font-size:12.3px;color:#3c3f58;transform:scaleX(0.9259);-webkit-mask-image:linear-gradient(90deg,#000 82%,transparent 100%);mask-image:linear-gradient(90deg,#000 82%,transparent 100%);'>6 Hours Of Slee</span>
<svg style="left:528.0px;top:8.500px" width="9" height="9" viewBox="0 0 9 9"><path d="M1.200 1.200l6.600 6.600M7.800 1.200L1.200 7.800" stroke="#3f444d" stroke-width="1.700"/></svg>
<svg style="left:556px;top:5px" width="16" height="16" viewBox="0 0 16 16" font-family="'Liberation Serif',serif"><rect width="16" height="16" rx="2" fill="#4a8af4"/><text x="8" y="11.500" font-size="15" fill="#fff" text-anchor="middle">g</text></svg>
<span class="t" style='left:575.5px;top:7.35px;font-size:12.3px;color:#3c3f58;transform:scaleX(1.0041);-webkit-mask-image:linear-gradient(90deg,#000 82%,transparent 100%);mask-image:linear-gradient(90deg,#000 82%,transparent 100%);'>white tableclotl</span>
<svg style="left:662.9px;top:8.500px" width="9" height="9" viewBox="0 0 9 9"><path d="M1.200 1.200l6.600 6.600M7.800 1.200L1.200 7.800" stroke="#3f444d" stroke-width="1.700"/></svg>
<svg style="left:691px;top:5px" width="16" height="16" viewBox="0 0 16 16"><rect width="16" height="16" fill="#e9eff6"/><path d="M7 4.500C3.500 4 1.500 7 3 9.500c1 1.500 3 1.500 4.500.8" fill="none" stroke="#0a8f86" stroke-width="1.8"/><path d="M8 11l3-7 3 7M9.500 8.800h3.500" fill="none" stroke="#0a8f86" stroke-width="1.600"/><path d="M1 12.500Q8 10 15 12.800" fill="none" stroke="#d8232a" stroke-width="1.300"/></svg>
<span class="t" style='left:710.5px;top:7.35px;font-size:12.3px;color:#3c3f58;transform:scaleX(0.9879);-webkit-mask-image:linear-gradient(90deg,#000 82%,transparent 100%);mask-image:linear-gradient(90deg,#000 82%,transparent 100%);'>Crédit Agricole</span>
<svg style="left:797.8px;top:8.500px" width="9" height="9" viewBox="0 0 9 9"><path d="M1.200 1.200l6.600 6.600M7.800 1.200L1.200 7.800" stroke="#3f444d" stroke-width="1.700"/></svg>
<svg style="left:826px;top:5px" width="16" height="16" viewBox="0 0 16 16"><rect width="16" height="16" fill="#d9e2ee"/><circle cx="7.5" cy="8" r="6.3" fill="#eef2f8" stroke="#a9b9d0" stroke-width="1.2"/><circle cx="5.5" cy="6.5" r=".8" fill="#9fb0c8"/><circle cx="9.5" cy="6.5" r=".8" fill="#9fb0c8"/><path d="M4.5 9.5Q7.5 12.5 10.5 9.5" fill="none" stroke="#9fb0c8" stroke-width="1"/></svg>
<span class="t" style='left:845.5px;top:7.35px;font-size:12.3px;color:#3c3f58;transform:scaleX(0.9795);-webkit-mask-image:linear-gradient(90deg,#000 82%,transparent 100%);mask-image:linear-gradient(90deg,#000 82%,transparent 100%);'>Roditeljski port</span>
<svg style="left:932.6px;top:8.500px" width="9" height="9" viewBox="0 0 9 9"><path d="M1.200 1.200l6.600 6.600M7.800 1.200L1.200 7.800" stroke="#3f444d" stroke-width="1.700"/></svg>
<svg style="left:961px;top:5px" width="16" height="16" viewBox="0 0 16 16"><rect width="16" height="16" rx="1.500" fill="#e8703a"/><path d="M0 16V11l5-4 3 3 8-7v13z" fill="#f4a04a"/><path d="M1 12l4-3.500 3 3 7-6.500" fill="none" stroke="#fff" stroke-width="1.600"/></svg>
<span class="t" style='left:980.5px;top:7.35px;font-size:12.3px;color:#3c3f58;transform:scaleX(0.9654);-webkit-mask-image:linear-gradient(90deg,#000 82%,transparent 100%);mask-image:linear-gradient(90deg,#000 82%,transparent 100%);'>Преглед - Goo</span>
<svg style="left:1067.4px;top:8.500px" width="9" height="9" viewBox="0 0 9 9"><path d="M1.200 1.200l6.600 6.600M7.800 1.200L1.200 7.800" stroke="#3f444d" stroke-width="1.700"/></svg>
<svg style="left:1096px;top:5px" width="16" height="16" viewBox="0 0 16 16"><rect width="16" height="16" rx="1" fill="#3b5998"/><path d="M11 16V9.800h2l.3-2.400H11V6c0-.7.200-1.200 1.200-1.200h1.300V2.600C13.200 2.600 12.500 2.500 11.700 2.500 9.900 2.500 8.700 3.600 8.700 5.600v1.800H6.600v2.400h2.100V16z" fill="#fff"/></svg>
<span class="t" style='left:1115.5px;top:7.35px;font-size:12.3px;color:#3c3f58;transform:scaleX(0.9535);'>SerbianMeteo</span>
<svg style="left:1202.3px;top:8.500px" width="9" height="9" viewBox="0 0 9 9"><path d="M1.200 1.200l6.600 6.600M7.800 1.200L1.200 7.800" stroke="#3f444d" stroke-width="1.700"/></svg>
<svg style="left:1231px;top:5px" width="16" height="16" viewBox="0 0 16 16"><line x1="8" y1="0.800" x2="8" y2="2.600" stroke="#e9c24a" stroke-width="1.100" transform="rotate(0 8 8)"/><line x1="8" y1="0.800" x2="8" y2="2.600" stroke="#e9c24a" stroke-width="1.100" transform="rotate(30 8 8)"/><line x1="8" y1="0.800" x2="8" y2="2.600" stroke="#e9c24a" stroke-width="1.100" transform="rotate(60 8 8)"/><line x1="8" y1="0.800" x2="8" y2="2.600" stroke="#e9c24a" stroke-width="1.100" transform="rotate(90 8 8)"/><line x1="8" y1="0.800" x2="8" y2="2.600" stroke="#e9c24a" stroke-width="1.100" transform="rotate(120 8 8)"/><line x1="8" y1="0.800" x2="8" y2="2.600" stroke="#e9c24a" stroke-width="1.100" transform="rotate(150 8 8)"/><line x1="8" y1="0.800" x2="8" y2="2.600" stroke="#e9c24a" stroke-width="1.100" transform="rotate(180 8 8)"/><line x1="8" y1="0.800" x2="8" y2="2.600" stroke="#e9c24a" stroke-width="1.100" transform="rotate(210 8 8)"/><line x1="8" y1="0.800" x2="8" y2="2.600" stroke="#e9c24a" stroke-width="1.100" transform="rotate(240 8 8)"/><line x1="8" y1="0.800" x2="8" y2="2.600" stroke="#e9c24a" stroke-width="1.100" transform="rotate(270 8 8)"/><line x1="8" y1="0.800" x2="8" y2="2.600" stroke="#e9c24a" stroke-width="1.100" transform="rotate(300 8 8)"/><line x1="8" y1="0.800" x2="8" y2="2.600" stroke="#e9c24a" stroke-width="1.100" transform="rotate(330 8 8)"/><circle cx="8" cy="8" r="4.600" fill="#f7cf2c"/><path d="M5.800 8.800Q8 10.800 10.200 8.800" fill="none" stroke="#c9962a" stroke-width=".9"/></svg>
<span class="t" style='left:1250.5px;top:7.35px;font-size:12.3px;color:#1a1a1a;transform:scaleX(1.0107);-webkit-mask-image:linear-gradient(90deg,#000 82%,transparent 100%);mask-image:linear-gradient(90deg,#000 82%,transparent 100%);'>Ciklon "Nićifor'</span>
<svg style="left:1337.1px;top:8.500px" width="9" height="9" viewBox="0 0 9 9"><path d="M1.200 1.200l6.600 6.600M7.800 1.200L1.200 7.800" stroke="#3f444d" stroke-width="1.700"/></svg>
<svg style="left:1366px;top:5px" width="16" height="16" viewBox="0 0 16 16"><rect width="16" height="16" fill="#d9dfe8"/><rect x="10" width="6" height="16" fill="#c4161c"/><path d="M4.500 2h3l-1 5 2 1-1.500 6h-3.500l1.500-5.500-1.500-1z" fill="#111"/><path d="M9 2l2.500 0-2 5 2.500 1-1.500 6H8.500l1.500-5.500-2-1z" fill="#e8ecf2"/></svg>
<span class="t" style='left:1385.5px;top:7.35px;font-size:12.3px;color:#3c3f58;transform:scaleX(0.9314);-webkit-mask-image:linear-gradient(90deg,#000 82%,transparent 100%);mask-image:linear-gradient(90deg,#000 82%,transparent 100%);'>Blic Online | UP</span>
<svg style="left:1472.0px;top:8.500px" width="9" height="9" viewBox="0 0 9 9"><path d="M1.200 1.200l6.600 6.600M7.800 1.200L1.200 7.800" stroke="#3f444d" stroke-width="1.700"/></svg>
<svg style="left:1500px;top:5px" width="16" height="16" viewBox="0 0 16 16"><rect width="16" height="16" fill="#d9dfe8"/><rect x="10" width="6" height="16" fill="#c4161c"/><path d="M4.500 2h3l-1 5 2 1-1.500 6h-3.500l1.500-5.500-1.500-1z" fill="#111"/><path d="M9 2l2.500 0-2 5 2.500 1-1.500 6H8.500l1.500-5.500-2-1z" fill="#e8ecf2"/></svg>
<span class="t" style='left:1519.5px;top:7.35px;font-size:12.3px;color:#3c3f58;transform:scaleX(0.9167);-webkit-mask-image:linear-gradient(90deg,#000 82%,transparent 100%);mask-image:linear-gradient(90deg,#000 82%,transparent 100%);'>Blic Online | LEI</span>
<svg style="left:1606.8px;top:8.500px" width="9" height="9" viewBox="0 0 9 9"><path d="M1.200 1.200l6.600 6.600M7.800 1.200L1.200 7.800" stroke="#3f444d" stroke-width="1.700"/></svg>
<svg style="left:1635px;top:5px" width="16" height="16" viewBox="0 0 16 16"><circle cx="6" cy="6" r="4.500" fill="none" stroke="#9aa6b8" stroke-width="1.200"/><path d="M0 13.500h6" stroke="#d8232a" stroke-width="1.500"/><path d="M6 12.500h5" stroke="#1a2e9c" stroke-width="1.500"/></svg><span class="t" style="left:1638.5px;top:9.5px;font-size:7.5px;font-weight:700;color:#1a237e;letter-spacing:-.4px">PTC</span>
<span class="t" style='left:1654.5px;top:7.35px;font-size:12.3px;color:#3c3f58;transform:scaleX(0.8691);-webkit-mask-image:linear-gradient(90deg,#000 82%,transparent 100%);mask-image:linear-gradient(90deg,#000 82%,transparent 100%);'>RTS :: Oprez, ne</span>
<svg style="left:1741.7px;top:8.500px" width="9" height="9" viewBox="0 0 9 9"><path d="M1.200 1.200l6.600 6.600M7.800 1.200L1.200 7.800" stroke="#3f444d" stroke-width="1.700"/></svg>
<div style="left:1814px;top:0;width:103px;height:18px;border:1px solid #2a3f5c;border-top:0;border-radius:0 0 5px 5px;overflow:hidden;box-shadow:0 0 0 1px rgba(255,255,255,.45)"><div style="left:0;top:0;width:28px;height:18px;background:linear-gradient(180deg,#b9c6d8 0,#a9b9cf 45%,#5f7fa6 50%,#7f9cc0 100%);border-right:1px solid #2a3f5c"></div><div style="left:28px;top:0;width:27px;height:18px;background:linear-gradient(180deg,#b9c6d8 0,#a9b9cf 45%,#5f7fa6 50%,#7f9cc0 100%);border-right:1px solid #2a3f5c"></div><div style="left:55px;top:0;width:47px;height:18px;background:linear-gradient(180deg,#e8aaa0 0,#dd8f84 45%,#c5402c 50%,#d4553c 80%,#e07a5a 100%)"></div><svg style="left:0;top:0" width="103" height="18" viewBox="0 0 103 18"><rect x="9.500" y="8.500" width="10" height="3.500" fill="#fff" stroke="#5a6a80" stroke-width=".8"/><rect x="38.500" y="3" width="8" height="7" fill="none" stroke="#fff" stroke-width="1.500"/><rect x="35.500" y="5.500" width="8" height="7" fill="#8ea6c4" stroke="#fff" stroke-width="1.800"/><path d="M74.500 4l8 9M82.500 4l-8 9" stroke="#5a3030" stroke-width="4.200"/><path d="M74.500 4l8 9M82.500 4l-8 9" stroke="#fff" stroke-width="2.600"/></svg></div>
<svg style="left:0;top:26px" width="130" height="34" viewBox="0 26 130 34"><path d="M11.500 42.500h12.500M17 36.500l-6 6 6 6" fill="none" stroke="#c4c4c4" stroke-width="2.600" stroke-linecap="round" stroke-linejoin="round"/><path d="M40.500 42.500h12.500M47 36.500l6 6-6 6" fill="none" stroke="#c4c4c4" stroke-width="2.600" stroke-linecap="round" stroke-linejoin="round"/><path d="M80.300 38.800A6 6 0 1 0 81.300 44.500" fill="none" stroke="#4b4b4b" stroke-width="2.700"/><path d="M83 35.500v6.500h-6.500z" fill="#4b4b4b"/><path d="M104.500 35.200l7.300 7.200h-2.100v6.900h-3.700v-4.600h-3v4.600h-3.700v-6.900h-2.100z" fill="#4f4f4f"/><rect x="108.300" y="35.800" width="1.700" height="3.500" fill="#4f4f4f"/></svg>
<div style="left:124px;top:29px;width:1729px;height:27px;background:#fff;border:1px solid #b4b4b4;border-top-color:#9e9e9e;border-radius:3px;"></div>
<svg style="left:130px;top:34px" width="14" height="17" viewBox="0 0 14 17"><path d="M1.500 1.500h7l4 4v10h-11z" fill="#f6f6f6" stroke="#9a9a9a" stroke-width="1"/><path d="M8.500 1.500v4h4" fill="#fff" stroke="#9a9a9a" stroke-width="1"/></svg>
<span class="t" style='left:149px;top:35.70px;font-size:16px;color:#111;transform:scaleX(0.9687);'>serbianmeteo.com</span>
<span class="t" style='left:276.6px;top:35.70px;font-size:16px;color:#8c8c8c;transform:scaleX(1.0103);'>/ciklon-nicifor-28-30-decembar-2014-prava-zima-stize-na-balkan/</span>
<svg style="left:1830px;top:33px" width="20" height="19" viewBox="0 0 20 19"><path d="M10 1.800l2.400 5.300 5.700.6-4.300 3.900 1.300 5.600-5.100-3-5.100 3 1.300-5.600L1.900 7.700l5.700-.6z" fill="#fff" stroke="#8a8a8a" stroke-width="1.200" stroke-linejoin="round"/></svg>
<div style="left:1862px;top:33px;width:19px;height:19px;border-radius:50%;background:radial-gradient(circle,#111 0 22%,#2a2d35 23% 30%,#3a3d45 60%,#2b2d33 100%)"></div><div style="left:1867px;top:38px;width:9px;height:9px;border-radius:50%;background:conic-gradient(#f33,#fc0,#3d3,#0cf,#33f,#f0f,#f33)"></div><div style="left:1869.500px;top:40.500px;width:4px;height:4px;border-radius:50%;background:#1a1a1a"></div>
<svg style="left:1897px;top:35px" width="15" height="15" viewBox="0 0 15 15"><rect x="1" y="1" width="13" height="2.600" rx="1.300" fill="#4d4d4d"/><rect x="1" y="6" width="13" height="2.600" rx="1.300" fill="#4d4d4d"/><rect x="1" y="11" width="13" height="2.600" rx="1.300" fill="#4d4d4d"/></svg>
<svg style="left:0;top:60px" width="500" height="24" viewBox="0 60 500 24"><rect x="8" y="63" width="3" height="3" fill="#e33"/><rect x="13" y="63" width="3" height="3" fill="#e33"/><rect x="18" y="63" width="3" height="3" fill="#e33"/><rect x="8" y="68" width="3" height="3" fill="#2a9d48"/><rect x="13" y="68" width="3" height="3" fill="#2d7df6"/><rect x="18" y="68" width="3" height="3" fill="#f4a300"/><rect x="8" y="73" width="3" height="3" fill="#2a9d48"/><rect x="13" y="73" width="3" height="3" fill="#f4a300"/><rect x="18" y="73" width="3" height="3" fill="#f4a300"/><path d="M67.500 66.500c0-1 .5-1.500 1.500-1.500h4l1.500 1.500h6c1 0 1.500.5 1.500 1.500v7c0 1-.5 1.500-1.500 1.500h-11.500c-1 0-1.500-.5-1.500-1.500z" fill="#fbd682" stroke="#c79a45" stroke-width="1"/><path d="M67.500 68.500h14.500" stroke="#fff0c0" stroke-width="1"/><rect x="132" y="62" width="16" height="16" fill="#33363b"/><circle cx="221.900" cy="70" r="8" fill="#9d77ae"/><text x="221.900" y="69.300" font-size="4.600" font-weight="700" fill="#eadcf0" text-anchor="middle" font-family="Liberation Sans,sans-serif">COSD</text><text x="221.900" y="74" font-size="4.600" font-weight="700" fill="#eadcf0" text-anchor="middle" font-family="Liberation Sans,sans-serif">IPS</text><path d="M364 62.500h10.500v10.500h-10.500z" fill="#c4c6ca"/><path d="M366.500 65h5.500M369.200 63.800v1.200M367 68.500c1.500-.8 3-2 4-3.500M367.500 65.500c.8 1.500 2 2.500 3.800 3" stroke="#5a5f68" stroke-width=".9" fill="none"/><path d="M369.500 67h11v11h-11z" fill="#3b84f0"/><path d="M364 73l3 2.500v-2.500z" fill="#2a6ad0"/></svg>
<span class="t" style="left:135.500px;top:61px;font-size:15px;font-weight:700;color:#fff">p</span>
<span class="t" style="left:371.700px;top:68px;font-size:10px;font-weight:700;color:#fff">A</span>
<span class="t" style='left:28px;top:63.58px;font-size:12.5px;color:#111;transform:scaleX(0.9474);'>Apps</span>
<span class="t" style='left:88px;top:63.58px;font-size:12.5px;color:#111;transform:scaleX(0.9394);'>bebac</span>
<span class="t" style='left:153.3px;top:63.58px;font-size:12.5px;color:#111;transform:scaleX(0.9400);'>Pipedrive</span>
<span class="t" style='left:235.2px;top:63.58px;font-size:12.5px;color:#111;transform:scaleX(0.9165);'>Matične ćelije | Sera...</span>
<span class="t" style='left:385.2px;top:63.58px;font-size:12.5px;color:#111;transform:scaleX(0.9416);'>Google преводилац</span>
<div style="left:0px;top:997px;width:1920px;height:43px;background:linear-gradient(180deg,#e6e6e6 0,#e3e3e3 60%,#dcdcdc 100%);border-top:1px solid #cfcfcf;"></div>
<div style="left:0px;top:976px;width:639px;height:23px;background:#e4e4e4;border:1px solid #c9c9c9;border-left:0;border-bottom:0;border-radius:0 4px 0 0;"></div>
<span class="t" style='left:3.3px;top:980.54px;font-size:12.3px;color:#6e6e6e;'>serbianmeteo.com/wordpress/wp-content/uploads/2014/12/anigif.gif</span>
<div style="left:3px;top:1001px;width:205.5px;height:34.5px;background:linear-gradient(180deg,#ececec 0,#e4e4e4 100%);border:1px solid #bdbdbd;border-radius:3px;box-shadow:0 1px 0 rgba(255,255,255,.7) inset,0 1px 1px rgba(0,0,0,.08);"></div>
<div style="left:194.5px;top:1002px;width:1px;height:32.5px;background:#c8c8c8;"></div>
<svg style="left:198.5px;top:1013px" width="7" height="4" viewBox="0 0 7 4"><path d="M0 0h7L3.500 4z" fill="#5a5a5a"/></svg>
<svg style="left:12px;top:1009px" width="17" height="17" viewBox="0 0 17 17"><path d="M4.500 .5h8.500l2 2v14h-10.500z" fill="#f4f4f4" stroke="#9a9a9a" stroke-width="1"/><path d="M6.500 3.500h5M6.500 14h6" stroke="#b8b8b8" stroke-width="1"/><rect x="0" y="5" width="16" height="8" fill="#0a7a1a"/></svg><span class="t" style="left:13px;top:1014.6px;font-size:7px;font-weight:700;color:#fff;font-family:'Liberation Mono',monospace;letter-spacing:.3px">GIF</span>
<span class="t" style='left:40.5px;top:1011.88px;font-size:12.5px;color:#111;transform:scaleX(1.0234);'>nicifor.gif</span>
<div style="left:211px;top:1001px;width:205.5px;height:34.5px;background:linear-gradient(180deg,#ececec 0,#e4e4e4 100%);border:1px solid #bdbdbd;border-radius:3px;box-shadow:0 1px 0 rgba(255,255,255,.7) inset,0 1px 1px rgba(0,0,0,.08);"></div>
<div style="left:402.5px;top:1002px;width:1px;height:32.5px;background:#c8c8c8;"></div>
<svg style="left:406.5px;top:1013px" width="7" height="4" viewBox="0 0 7 4"><path d="M0 0h7L3.500 4z" fill="#5a5a5a"/></svg>
<svg style="left:220px;top:1009px" width="17" height="17" viewBox="0 0 17 17"><path d="M4.500 .5h8.500l2 2v14h-10.500z" fill="#f4f4f4" stroke="#9a9a9a" stroke-width="1"/><path d="M6.500 3.500h5M6.500 14h6" stroke="#b8b8b8" stroke-width="1"/><rect x="0" y="5" width="16" height="8" fill="#7c7a1c"/></svg><span class="t" style="left:221px;top:1014.6px;font-size:7px;font-weight:700;color:#fff;font-family:'Liberation Mono',monospace;letter-spacing:.3px">JPG</span>
<span class="t" style='left:248.5px;top:1011.88px;font-size:12.5px;color:#111;transform:scaleX(0.9366);'>kuca za ng.jpg</span>
<div style="left:419px;top:1001px;width:205.5px;height:34.5px;background:linear-gradient(180deg,#ececec 0,#e4e4e4 100%);border:1px solid #bdbdbd;border-radius:3px;box-shadow:0 1px 0 rgba(255,255,255,.7) inset,0 1px 1px rgba(0,0,0,.08);"></div>
<div style="left:610.5px;top:1002px;width:1px;height:32.5px;background:#c8c8c8;"></div>
<svg style="left:614.5px;top:1013px" width="7" height="4" viewBox="0 0 7 4"><path d="M0 0h7L3.500 4z" fill="#5a5a5a"/></svg>
<svg style="left:428px;top:1009px" width="17" height="17" viewBox="0 0 17 17"><path d="M4.500 .5h8.500l2 2v14h-10.500z" fill="#f4f4f4" stroke="#9a9a9a" stroke-width="1"/><path d="M6.500 3.500h5M6.500 14h6" stroke="#b8b8b8" stroke-width="1"/><rect x="0" y="5" width="16" height="8" fill="#7c7a1c"/></svg><span class="t" style="left:429px;top:1014.6px;font-size:7px;font-weight:700;color:#fff;font-family:'Liberation Mono',monospace;letter-spacing:.3px">JPG</span>
<span class="t" style='left:456.5px;top:1011.88px;font-size:12.5px;color:#111;transform:scaleX(0.9723);'>medenjaci.jpg</span>
<div style="left:627px;top:1001px;width:205.5px;height:34.5px;background:linear-gradient(180deg,#ececec 0,#e4e4e4 100%);border:1px solid #bdbdbd;border-radius:3px;box-shadow:0 1px 0 rgba(255,255,255,.7) inset,0 1px 1px rgba(0,0,0,.08);"></div>
<div style="left:818.5px;top:1002px;width:1px;height:32.5px;background:#c8c8c8;"></div>
<svg style="left:822.5px;top:1013px" width="7" height="4" viewBox="0 0 7 4"><path d="M0 0h7L3.500 4z" fill="#5a5a5a"/></svg>
<svg style="left:636px;top:1009px" width="17" height="17" viewBox="0 0 17 17"><path d="M2.500 .5h9l3 3v13h-12z" fill="#fdfdfd" stroke="#9a9a9a" stroke-width="1"/><path d="M4.500 5.500h8M4.500 8h8M4.500 10.500h8M4.500 13h8" stroke="#c8c8c8" stroke-width="1"/></svg>
<span class="t" style='left:664.5px;top:1011.88px;font-size:12.5px;color:#111;transform:scaleX(0.9383);'>medenjaci.ashx</span>
<div style="left:835px;top:1001px;width:205.5px;height:34.5px;background:linear-gradient(180deg,#ececec 0,#e4e4e4 100%);border:1px solid #bdbdbd;border-radius:3px;box-shadow:0 1px 0 rgba(255,255,255,.7) inset,0 1px 1px rgba(0,0,0,.08);"></div>
<div style="left:1026.5px;top:1002px;width:1px;height:32.5px;background:#c8c8c8;"></div>
<svg style="left:1030.5px;top:1013px" width="7" height="4" viewBox="0 0 7 4"><path d="M0 0h7L3.500 4z" fill="#5a5a5a"/></svg>
<svg style="left:844px;top:1009px" width="17" height="17" viewBox="0 0 17 17"><path d="M4.500 .5h8.500l2 2v14h-10.500z" fill="#f4f4f4" stroke="#9a9a9a" stroke-width="1"/><path d="M6.500 3.500h5M6.500 14h6" stroke="#b8b8b8" stroke-width="1"/><rect x="0" y="5" width="16" height="8" fill="#7c7a1c"/></svg><span class="t" style="left:845px;top:1014.6px;font-size:7px;font-weight:700;color:#fff;font-family:'Liberation Mono',monospace;letter-spacing:.3px">JPG</span>
<span class="t" style='left:872.5px;top:1011.88px;font-size:12.5px;color:#111;transform:scaleX(0.9756);'>beli stoljnja.jpg</span>
<div style="left:1043px;top:1001px;width:205.5px;height:34.5px;background:linear-gradient(180deg,#ececec 0,#e4e4e4 100%);border:1px solid #bdbdbd;border-radius:3px;box-shadow:0 1px 0 rgba(255,255,255,.7) inset,0 1px 1px rgba(0,0,0,.08);"></div>
<div style="left:1234.5px;top:1002px;width:1px;height:32.5px;background:#c8c8c8;"></div>
<svg style="left:1238.5px;top:1013px" width="7" height="4" viewBox="0 0 7 4"><path d="M0 0h7L3.500 4z" fill="#5a5a5a"/></svg>
<svg style="left:1052px;top:1009px" width="17" height="17" viewBox="0 0 17 17"><path d="M4.500 .5h8.500l2 2v14h-10.500z" fill="#f4f4f4" stroke="#9a9a9a" stroke-width="1"/><path d="M6.500 3.500h5M6.500 14h6" stroke="#b8b8b8" stroke-width="1"/><rect x="0" y="5" width="16" height="8" fill="#7c7a1c"/></svg><span class="t" style="left:1053px;top:1014.6px;font-size:7px;font-weight:700;color:#fff;font-family:'Liberation Mono',monospace;letter-spacing:.3px">JPG</span>
<span class="t" style='left:1080.5px;top:1011.88px;font-size:12.5px;color:#111;transform:scaleX(0.9758);'>materice fb.jpg</span>
<div style="left:1251px;top:1001px;width:205.5px;height:34.5px;background:linear-gradient(180deg,#ececec 0,#e4e4e4 100%);border:1px solid #bdbdbd;border-radius:3px;box-shadow:0 1px 0 rgba(255,255,255,.7) inset,0 1px 1px rgba(0,0,0,.08);"></div>
<div style="left:1442.5px;top:1002px;width:1px;height:32.5px;background:#c8c8c8;"></div>
<svg style="left:1446.5px;top:1013px" width="7" height="4" viewBox="0 0 7 4"><path d="M0 0h7L3.500 4z" fill="#5a5a5a"/></svg>
<svg style="left:1260px;top:1009px" width="17" height="17" viewBox="0 0 17 17"><path d="M4.500 .5h8.500l2 2v14h-10.500z" fill="#f4f4f4" stroke="#9a9a9a" stroke-width="1"/><path d="M6.500 3.500h5M6.500 14h6" stroke="#b8b8b8" stroke-width="1"/><rect x="0" y="5" width="16" height="8" fill="#7c7a1c"/></svg><span class="t" style="left:1261px;top:1014.6px;font-size:7px;font-weight:700;color:#fff;font-family:'Liberation Mono',monospace;letter-spacing:.3px">JPG</span>
<span class="t" style='left:1288.5px;top:1011.88px;font-size:12.5px;color:#111;transform:scaleX(0.9693);'>materice.jpg</span>
<div style="left:1459px;top:1001px;width:205.5px;height:34.5px;background:linear-gradient(180deg,#ececec 0,#e4e4e4 100%);border:1px solid #bdbdbd;border-radius:3px;box-shadow:0 1px 0 rgba(255,255,255,.7) inset,0 1px 1px rgba(0,0,0,.08);"></div>
<div style="left:1650.5px;top:1002px;width:1px;height:32.5px;background:#c8c8c8;"></div>
<svg style="left:1654.5px;top:1013px" width="7" height="4" viewBox="0 0 7 4"><path d="M0 0h7L3.500 4z" fill="#5a5a5a"/></svg>
<svg style="left:1468px;top:1009px" width="17" height="17" viewBox="0 0 17 17"><path d="M4.500 .5h8.500l2 2v14h-10.500z" fill="#f4f4f4" stroke="#9a9a9a" stroke-width="1"/><path d="M6.500 3.500h5M6.500 14h6" stroke="#b8b8b8" stroke-width="1"/><rect x="0" y="5" width="16" height="8" fill="#7c7a1c"/></svg><span class="t" style="left:1469px;top:1014.6px;font-size:7px;font-weight:700;color:#fff;font-family:'Liberation Mono',monospace;letter-spacing:.3px">JPG</span>
<span class="t" style='left:1496.5px;top:1011.88px;font-size:12.5px;color:#111;transform:scaleX(0.9355);'>svece txt.jpg</span>
<svg style="left:1743px;top:1011px" width="14" height="14" viewBox="0 0 14 14"><path d="M4 0h6v6h3.500L7 13 .5 6H4z" fill="#5e5e5e"/></svg>
<span class="t" style='left:1763px;top:1012.38px;font-size:12.5px;color:#1a1a1a;transform:scaleX(0.9429);text-decoration:underline;'>Show all downloads...</span>
<svg style="left:1896.500px;top:1013.500px" width="9" height="9" viewBox="0 0 9 9"><path d="M1 1l7 7M8 1L1 8" stroke="#3f3f3f" stroke-width="1.700"/></svg>
<svg style="left:0;top:1040px" width="1920" height="40" viewBox="0 0 1920 40" font-family="'Liberation Sans',sans-serif"><defs><linearGradient id="tk" x1="0" y1="0" x2="1" y2="0"><stop offset="0" stop-color="#2c78b4"/><stop offset=".05" stop-color="#3c94d0"/><stop offset=".16" stop-color="#409cd8"/><stop offset=".3" stop-color="#348cd2"/><stop offset=".5" stop-color="#2a7fc8"/><stop offset=".75" stop-color="#1f66b0"/><stop offset=".9" stop-color="#1c599e"/><stop offset="1" stop-color="#1a4f8e"/></linearGradient><linearGradient id="tkv" x1="0" y1="0" x2="0" y2="1"><stop offset="0" stop-color="#fff" stop-opacity=".28"/><stop offset=".08" stop-color="#fff" stop-opacity=".1"/><stop offset=".5" stop-color="#fff" stop-opacity="0"/><stop offset="1" stop-color="#000" stop-opacity=".12"/></linearGradient><linearGradient id="ab" x1="0" y1="0" x2="0" y2="1"><stop offset="0" stop-color="#e4f2fb" stop-opacity=".95"/><stop offset=".45" stop-color="#a9d4ef" stop-opacity=".85"/><stop offset=".5" stop-color="#7fbde6" stop-opacity=".8"/><stop offset="1" stop-color="#9ad0f0" stop-opacity=".85"/></linearGradient><linearGradient id="ib" x1="0" y1="0" x2="0" y2="1"><stop offset="0" stop-color="#d2eafa" stop-opacity=".8"/><stop offset=".45" stop-color="#90c8ec" stop-opacity=".7"/><stop offset=".5" stop-color="#5eaade" stop-opacity=".7"/><stop offset="1" stop-color="#80c4ec" stop-opacity=".75"/></linearGradient><radialGradient id="orb" cx=".5" cy=".4" r=".6"><stop offset="0" stop-color="#8fd0f4"/><stop offset=".6" stop-color="#2f7fc0"/><stop offset="1" stop-color="#163e78"/></radialGradient></defs><rect width="1920" height="40" fill="url(#tk)"/><rect width="1920" height="40" fill="url(#tkv)"/><path d="M1296 0c34 10 58 24 80 40h-14c-20-16-46-30-82-40z" fill="#cfe6ff" opacity=".5"/><path d="M640 0h400c-120 6-260 8-400 4z" fill="#fff" opacity=".10"/><rect x="262.500" y="1.500" width="57" height="38" rx="2.500" fill="url(#ab)" stroke="#1c4a7a" stroke-opacity=".7" stroke-width="1"/><rect x="263.500" y="2.500" width="55" height="36" rx="2" fill="none" stroke="#fff" stroke-opacity=".55" stroke-width="1"/><rect x="324.500" y="1.500" width="57" height="38" rx="2.500" fill="url(#ib)" stroke="#1c4a7a" stroke-opacity=".7" stroke-width="1"/><rect x="325.500" y="2.500" width="55" height="36" rx="2" fill="none" stroke="#fff" stroke-opacity=".55" stroke-width="1"/><rect x="386.500" y="1.500" width="57" height="38" rx="2.500" fill="url(#ib)" stroke="#1c4a7a" stroke-opacity=".7" stroke-width="1"/><rect x="387.500" y="2.500" width="55" height="36" rx="2" fill="none" stroke="#fff" stroke-opacity=".55" stroke-width="1"/><rect x="448.500" y="1.500" width="57" height="38" rx="2.500" fill="url(#ib)" stroke="#1c4a7a" stroke-opacity=".7" stroke-width="1"/><rect x="449.500" y="2.500" width="55" height="36" rx="2" fill="none" stroke="#fff" stroke-opacity=".55" stroke-width="1"/><rect x="510.500" y="1.500" width="57" height="38" rx="2.500" fill="url(#ib)" stroke="#1c4a7a" stroke-opacity=".7" stroke-width="1"/><rect x="511.500" y="2.500" width="55" height="36" rx="2" fill="none" stroke="#fff" stroke-opacity=".55" stroke-width="1"/><circle cx="27" cy="20" r="18.500" fill="url(#orb)" stroke="#9fc8e8" stroke-opacity=".7" stroke-width="1.200"/><path d="M8.500 17a18.500 18.500 0 0 1 37 0c-8-6-28-6-37 0z" fill="#fff" opacity=".28"/><path d="M19 13.500c2.500-1.500 5-1.500 7.500-.3l-1.600 6.600c-2.500-1-5-1-7.500.3z" fill="#f0582a"/><path d="M28 13.700c2.500 1.200 5 1.200 7.500-.2l-1.600 6.600c-2.500 1.400-5 1.400-7.500.2z" fill="#7ec242"/><path d="M17 21.500c2.500-1.300 5-1.300 7.500-.3l-1.600 6.600c-2.500-1-5-1-7.500.3z" fill="#38a4e8"/><path d="M26 21.800c2.500 1.200 5 1.200 7.500-.2l-1.600 6.600c-2.500 1.400-5 1.400-7.500.2z" fill="#fcc21c"/><rect x="58" y="5.5" width="1.600" height="1.600" fill="#0a2446" opacity=".8"/><rect x="58" y="8.7" width="1.600" height="1.600" fill="#0a2446" opacity=".8"/><rect x="58" y="11.9" width="1.600" height="1.600" fill="#0a2446" opacity=".8"/><rect x="58" y="15.1" width="1.600" height="1.600" fill="#0a2446" opacity=".8"/><rect x="58" y="18.3" width="1.600" height="1.600" fill="#0a2446" opacity=".8"/><rect x="58" y="21.5" width="1.600" height="1.600" fill="#0a2446" opacity=".8"/><rect x="58" y="24.7" width="1.600" height="1.600" fill="#0a2446" opacity=".8"/><rect x="58" y="27.9" width="1.600" height="1.600" fill="#0a2446" opacity=".8"/><rect x="58" y="31.1" width="1.600" height="1.600" fill="#0a2446" opacity=".8"/><rect x="58" y="34.3" width="1.600" height="1.600" fill="#0a2446" opacity=".8"/><rect x="61" y="5.5" width="1.600" height="1.600" fill="#0a2446" opacity=".8"/><rect x="61" y="8.7" width="1.600" height="1.600" fill="#0a2446" opacity=".8"/><rect x="61" y="11.9" width="1.600" height="1.600" fill="#0a2446" opacity=".8"/><rect x="61" y="15.1" width="1.600" height="1.600" fill="#0a2446" opacity=".8"/><rect x="61" y="18.3" width="1.600" height="1.600" fill="#0a2446" opacity=".8"/><rect x="61" y="21.5" width="1.600" height="1.600" fill="#0a2446" opacity=".8"/><rect x="61" y="24.7" width="1.600" height="1.600" fill="#0a2446" opacity=".8"/><rect x="61" y="27.9" width="1.600" height="1.600" fill="#0a2446" opacity=".8"/><rect x="61" y="31.1" width="1.600" height="1.600" fill="#0a2446" opacity=".8"/><rect x="61" y="34.3" width="1.600" height="1.600" fill="#0a2446" opacity=".8"/><rect x="64" y="5.5" width="1.600" height="1.600" fill="#0a2446" opacity=".8"/><rect x="64" y="8.7" width="1.600" height="1.600" fill="#0a2446" opacity=".8"/><rect x="64" y="11.9" width="1.600" height="1.600" fill="#0a2446" opacity=".8"/><rect x="64" y="15.1" width="1.600" height="1.600" fill="#0a2446" opacity=".8"/><rect x="64" y="18.3" width="1.600" height="1.600" fill="#0a2446" opacity=".8"/><rect x="64" y="21.5" width="1.600" height="1.600" fill="#0a2446" opacity=".8"/><rect x="64" y="24.7" width="1.600" height="1.600" fill="#0a2446" opacity=".8"/><rect x="64" y="27.9" width="1.600" height="1.600" fill="#0a2446" opacity=".8"/><rect x="64" y="31.1" width="1.600" height="1.600" fill="#0a2446" opacity=".8"/><rect x="64" y="34.3" width="1.600" height="1.600" fill="#0a2446" opacity=".8"/><rect x="1725" y="5.5" width="1.600" height="1.600" fill="#0a2446" opacity=".7"/><rect x="1725" y="8.7" width="1.600" height="1.600" fill="#0a2446" opacity=".7"/><rect x="1725" y="11.9" width="1.600" height="1.600" fill="#0a2446" opacity=".7"/><rect x="1725" y="15.1" width="1.600" height="1.600" fill="#0a2446" opacity=".7"/><rect x="1725" y="18.3" width="1.600" height="1.600" fill="#0a2446" opacity=".7"/><rect x="1725" y="21.5" width="1.600" height="1.600" fill="#0a2446" opacity=".7"/><rect x="1725" y="24.7" width="1.600" height="1.600" fill="#0a2446" opacity=".7"/><rect x="1725" y="27.9" width="1.600" height="1.600" fill="#0a2446" opacity=".7"/><rect x="1725" y="31.1" width="1.600" height="1.600" fill="#0a2446" opacity=".7"/><rect x="1725" y="34.3" width="1.600" height="1.600" fill="#0a2446" opacity=".7"/><rect x="1728" y="5.5" width="1.600" height="1.600" fill="#0a2446" opacity=".7"/><rect x="1728" y="8.7" width="1.600" height="1.600" fill="#0a2446" opacity=".7"/><rect x="1728" y="11.9" width="1.600" height="1.600" fill="#0a2446" opacity=".7"/><rect x="1728" y="15.1" width="1.600" height="1.600" fill="#0a2446" opacity=".7"/><rect x="1728" y="18.3" width="1.600" height="1.600" fill="#0a2446" opacity=".7"/><rect x="1728" y="21.5" width="1.600" height="1.600" fill="#0a2446" opacity=".7"/><rect x="1728" y="24.7" width="1.600" height="1.600" fill="#0a2446" opacity=".7"/><rect x="1728" y="27.9" width="1.600" height="1.600" fill="#0a2446" opacity=".7"/><rect x="1728" y="31.1" width="1.600" height="1.600" fill="#0a2446" opacity=".7"/><rect x="1728" y="34.3" width="1.600" height="1.600" fill="#0a2446" opacity=".7"/><rect x="1731" y="5.5" width="1.600" height="1.600" fill="#0a2446" opacity=".7"/><rect x="1731" y="8.7" width="1.600" height="1.600" fill="#0a2446" opacity=".7"/><rect x="1731" y="11.9" width="1.600" height="1.600" fill="#0a2446" opacity=".7"/><rect x="1731" y="15.1" width="1.600" height="1.600" fill="#0a2446" opacity=".7"/><rect x="1731" y="18.3" width="1.600" height="1.600" fill="#0a2446" opacity=".7"/><rect x="1731" y="21.5" width="1.600" height="1.600" fill="#0a2446" opacity=".7"/><rect x="1731" y="24.7" width="1.600" height="1.600" fill="#0a2446" opacity=".7"/><rect x="1731" y="27.9" width="1.600" height="1.600" fill="#0a2446" opacity=".7"/><rect x="1731" y="31.1" width="1.600" height="1.600" fill="#0a2446" opacity=".7"/><rect x="1731" y="34.3" width="1.600" height="1.600" fill="#0a2446" opacity=".7"/><path d="M90 8.500h9l2 2.500h19.500v21H90z" fill="#f4d876" stroke="#c8a03c" stroke-width=".8"/><path d="M92 14h28v17H92z" fill="#fbe9a4"/><path d="M95 24h21v8H95z" fill="#9fd0f0" stroke="#fff" stroke-width="1.200" opacity=".9"/><rect x="93" y="7.500" width="3" height="2" fill="#2aa83a"/><rect x="101" y="9.500" width="3" height="2" fill="#d83a2a"/><rect x="109" y="11" width="4" height="2" fill="#2a8ae0"/><circle cx="168" cy="21" r="11" fill="none" stroke="#3ab0f0" stroke-width="5.500"/><path d="M160 21h18" stroke="#3ab0f0" stroke-width="4.500"/><path d="M170 27h12v6h-12z" fill="#3488c4" opacity="0"/><path d="M153.500 33c-3-6 4-18 14-24 6-3.500 11-4 13.500-1.500" fill="none" stroke="#f6c41c" stroke-width="2.200"/><path d="M216 11l24-3v26l-24-3z" fill="#7fb0dc" opacity=".75"/><path d="M238 9l4 1v22l-4 1z" fill="#a8c8e8" opacity=".7"/><circle cx="226" cy="21" r="9" fill="#f07a1c"/><circle cx="226" cy="21" r="7.500" fill="#f89a3a"/><path d="M223 16l8.500 5-8.500 5z" fill="#fff"/><circle cx="291" cy="20" r="14" fill="#de4a3a"/><path d="M291 20L278.900 13A14 14 0 0 0 284 32.100z" fill="#4aa84e"/><path d="M291 20L284 32.100A14 14 0 0 0 305 20z" fill="#fcd02a"/><path d="M291 20h14A14 14 0 0 0 278.900 13z" fill="#de4a3a"/><circle cx="291" cy="20" r="6.600" fill="#fff"/><circle cx="291" cy="20" r="5.200" fill="#4a8ae0"/><circle cx="353" cy="20" r="13" fill="#12a5ea"/><circle cx="345.500" cy="12" r="6" fill="#12a5ea"/><circle cx="361" cy="28" r="6" fill="#12a5ea"/><text x="353" y="27.500" font-size="21" font-weight="700" fill="#fff" text-anchor="middle">S</text><path d="M406 8l19 3-5 24-19-4z" fill="#dfeaf4" stroke="#8aa0b8" stroke-width=".8"/><path d="M406 8l19 3-1 4-19-3z" fill="#7fa8d0"/><path d="M405 15l17 3M404 19l17 3M403.500 23l17 3M403 27l17 3" stroke="#a8c0d8" stroke-width=".8"/><rect x="464" y="5" width="27" height="27" fill="#1c2a7a" stroke="#0c1246" stroke-width="1"/><text x="477.500" y="25.500" font-size="17" font-weight="700" fill="#9fc8fa" text-anchor="middle">Ps</text><circle cx="531" cy="10" r="3.500" fill="#fff" stroke="#111" stroke-width="1.500"/><circle cx="547" cy="10" r="3.500" fill="#fff" stroke="#111" stroke-width="1.500"/><path d="M526 22l6-7 7 8 7-8 6 7-5 3-3 8h-10l-3-8z" fill="#fff" stroke="#111" stroke-width="1.600" stroke-linejoin="round"/><path d="M539 23v8M534 27l5 5 5-5" fill="none" stroke="#111" stroke-width="2"/><text x="1742" y="23" font-size="12" fill="#fff" textLength="15.500" lengthAdjust="spacingAndGlyphs">SR</text><path d="M1773 24.500h8l-4-4.500z" fill="#fff"/><rect x="1798.500" y="16.500" width="10" height="8" fill="#2a5a9a" stroke="#fff" stroke-width="1.300"/><path d="M1800 27.500h8M1804 25v2.500" stroke="#fff" stroke-width="1.300"/><path d="M1796 12.500h4v6h-4z" fill="#fff"/><path d="M1819 17.500h3l4-4v14l-4-4h-3z" fill="#fff"/><path d="M1828 16.500c1.500 2 1.500 6 0 8M1830.500 14.500c2.500 3.500 2.500 8.500 0 12" fill="none" stroke="#fff" stroke-width="1.100"/><text x="1859" y="18" font-size="12" fill="#fff" textLength="27.500" lengthAdjust="spacingAndGlyphs">11:07</text><text x="1845.500" y="35" font-size="12" fill="#fff" textLength="54.500" lengthAdjust="spacingAndGlyphs">27.12.2014</text><rect x="1905.500" y="1" width="14" height="39" fill="#3a6aa8" fill-opacity=".5" stroke="#0c2a54" stroke-width="1"/><rect x="1906.500" y="2" width="12" height="14" fill="#fff" opacity=".2"/><rect width="1920" height="1" fill="#14305a" opacity=".6"/></svg>
</body></html>
